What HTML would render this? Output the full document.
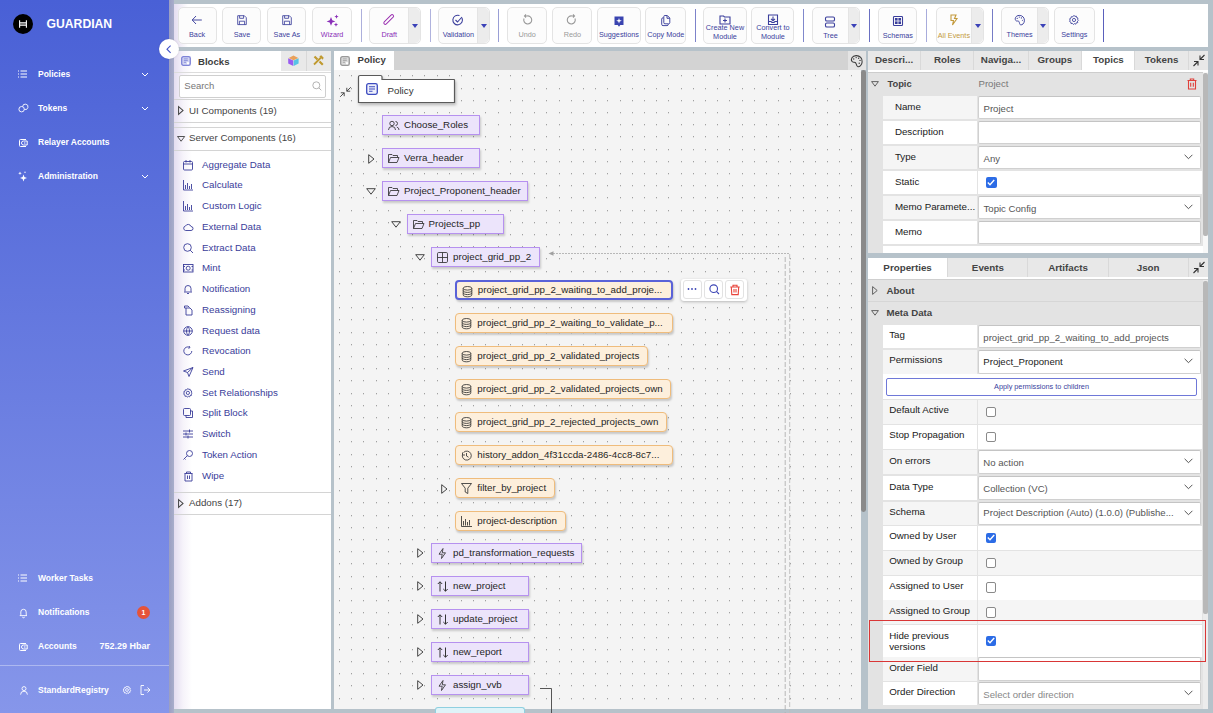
<!DOCTYPE html><html><head><meta charset="utf-8"><style>
*{box-sizing:border-box;margin:0;padding:0}
html,body{width:1213px;height:713px;overflow:hidden;background:#b6c2ca;font-family:"Liberation Sans",sans-serif;position:relative}
.a{position:absolute}
svg{overflow:visible}
#sb{left:0;top:0;width:169px;height:713px;background:linear-gradient(180deg,#4960d6 0%,#8696ea 100%)}
.si{position:absolute;left:0;width:169px;height:20px;color:#fff;font-weight:bold;font-size:8.5px;line-height:20px;white-space:nowrap}
.si .t{position:absolute;left:38px;top:0}
.si svg{position:absolute;left:18px;top:6px}
.si .ch{left:141px;top:8px}
#tb{left:174px;top:4px;width:1034px;height:43px;background:#fff}
.btn{position:absolute;top:7px;height:37px;border:1px solid #e4e4e4;border-radius:5px;background:#fcfcfc;text-align:center;font-size:7.25px;color:#3b3f9c;white-space:nowrap}
.btn .lb{position:absolute;left:0;right:0;top:21px;line-height:9px;transform:translateY(0.8px)}
.btn svg{position:absolute;top:6px}
.dd{position:absolute;top:0;right:0;width:11.5px;height:35px;background:#ececec;border-radius:0 5px 5px 0;border-left:1px solid #e4e4e4}
.dd:after{content:"";position:absolute;left:2.5px;top:15.5px;border-left:3.6px solid transparent;border-right:3.6px solid transparent;border-top:4.3px solid #3b42b8}
.dv{position:absolute;top:9px;width:1px;height:33px;background:#6d73c6}
.pn{background:#fff}
.bl{position:absolute;left:0;width:157px;height:20px;font-size:9.75px;line-height:20px;color:#3a3d9a;white-space:nowrap}
.bl .t{position:absolute;left:28px}
.bl svg{position:absolute;left:9px;top:5px}
.nd{position:absolute;height:20px;border:1.5px solid #b691ef;background:#ece4fb;font-size:9.75px;line-height:18px;color:#1f1f1f;white-space:nowrap;box-shadow:1px 2px 2px rgba(0,0,0,.18);overflow:hidden}
.nd .t{position:absolute;left:21px;top:-0.4px}
.nd svg{position:absolute;left:5px;top:4px}
.nd.o{border-color:#efbc7c;background:#fdefdc;border-radius:4px}
.tri{position:absolute;width:0;height:0}
.rw{position:absolute;height:24px;font-size:9.75px;color:#1a1a1a;white-space:nowrap}
.rw .lc{position:absolute;left:0;top:0;width:94px;height:100%;background:#fff}
.rw .vc{position:absolute;left:95.5px;top:0;right:0;height:100%;background:#fff}
.inp{position:absolute;left:0;top:0;right:0;bottom:0;border:1px solid #d6d6d6;border-radius:2px;background:#fff;font-size:9.5px;color:#555;padding-left:5px;line-height:22px}
.cb{position:absolute;left:9px;top:7px;width:10px;height:10px;border:1px solid #9a9a9a;border-radius:2px;background:#fff}
.cb.on{background:#2a6ae6;border-color:#2a6ae6}
</style></head><body>
<div id="sb" class="a">
<div class="a" style="left:13px;top:14px;width:20px;height:20px;border-radius:50%;background:#000"></div>
<svg class="a" style="left:18px;top:19px" width="10" height="10" viewBox="0 0 10 10"><path d="M1.6 1.2V8.8M8.4 1.2V8.8M1.6 3.9H8.4M1.6 6.1H8.4" stroke="#fff" stroke-width="1.1" fill="none"/></svg>
<div class="a" style="left:46.5px;top:16px;color:#fff;font-weight:bold;font-size:12.2px;line-height:16px">GUARDIAN</div>
<div class="si" style="top:64px"><svg width="9" height="8" viewBox="0 0 9 8"><path d="M0 1H1M0 4H1M0 7H1M2.5 1H9M2.5 4H9M2.5 7H9" stroke="#fff" stroke-width="1"/></svg><span class="t">Policies</span><svg class="ch" width="8" height="5" viewBox="0 0 8 5"><path d="M1 1L4 4L7 1" stroke="#fff" stroke-width="1" fill="none"/></svg></div>
<div class="si" style="top:98px"><svg width="10" height="10" viewBox="0 0 10 10" style="top:4.5px"><circle cx="3.6" cy="6.2" r="2.7" stroke="#fff" stroke-width="0.9" fill="none"/><path d="M4.6 3.6A2.7 2.7 0 1 1 6.4 6.4" stroke="#fff" stroke-width="0.9" fill="none"/></svg><span class="t">Tokens</span><svg class="ch" width="8" height="5" viewBox="0 0 8 5"><path d="M1 1L4 4L7 1" stroke="#fff" stroke-width="1" fill="none"/></svg></div>
<div class="si" style="top:132px"><svg width="10" height="9" viewBox="0 0 10 9" style="left:19px;top:6.5px"><path d="M7 0.5H1.5A1 1 0 0 0 0.5 1.5V6.5A1 1 0 0 0 1.5 7.5H7" stroke="#fff" stroke-width="1" fill="none"/><path d="M4.5 2A2 2 0 0 0 4.5 6H8.2V2Z" stroke="#fff" stroke-width="1" fill="none"/><circle cx="5.8" cy="4" r="0.7" fill="#fff"/></svg><span class="t">Relayer Accounts</span></div>
<div class="si" style="top:166px"><svg width="10" height="11" viewBox="0 0 10 11" style="top:4.5px"><path d="M5.5 3.5L6.4 6.1L9 7L6.4 7.9L5.5 10.5L4.6 7.9L2 7L4.6 6.1Z" fill="#fff"/><path d="M2 0.5L2.5 1.8L3.8 2.3L2.5 2.8L2 4.1L1.5 2.8L0.2 2.3L1.5 1.8Z" fill="#fff"/><circle cx="7" cy="1.2" r="0.7" fill="#fff"/></svg><span class="t">Administration</span><svg class="ch" width="8" height="5" viewBox="0 0 8 5"><path d="M1 1L4 4L7 1" stroke="#fff" stroke-width="1" fill="none"/></svg></div>
<div class="si" style="top:568px"><svg width="9" height="8" viewBox="0 0 9 8"><path d="M0 1H1M0 4H1M0 7H1M2.5 1H9M2.5 4H9M2.5 7H9" stroke="#fff" stroke-width="1"/></svg><span class="t">Worker Tasks</span></div>
<div class="si" style="top:602px"><svg width="9" height="10" viewBox="0 0 9 10" style="left:19px;top:6px"><path d="M1.8 6.8V4A2.7 2.7 0 0 1 7.2 4V6.8L8 7.6H1L1.8 6.8M3.5 8.8A1 1 0 0 0 5.5 8.8" stroke="#fff" stroke-width="0.9" fill="none"/></svg><span class="t">Notifications</span><span class="a" style="left:137px;top:4px;width:13px;height:13px;border-radius:50%;background:#e5533a;font-size:7px;line-height:13px;text-align:center">1</span></div>
<div class="si" style="top:636px"><svg width="10" height="9" viewBox="0 0 10 9" style="left:19px;top:6.5px"><path d="M7 0.5H1.5A1 1 0 0 0 0.5 1.5V6.5A1 1 0 0 0 1.5 7.5H7" stroke="#fff" stroke-width="1" fill="none"/><path d="M4.5 2A2 2 0 0 0 4.5 6H8.2V2Z" stroke="#fff" stroke-width="1" fill="none"/><circle cx="5.8" cy="4" r="0.7" fill="#fff"/></svg><span class="t">Accounts</span><span class="a" style="right:19px;top:0;font-size:9px">752.29 Hbar</span></div>
<div class="a" style="left:0;top:665px;width:169px;height:1px;background:rgba(255,255,255,.35)"></div>
<div class="si" style="top:680px"><svg width="9" height="10" viewBox="0 0 9 10" style="left:19.5px;top:6px"><circle cx="4" cy="2.6" r="2" stroke="#fff" stroke-width="0.9" fill="none"/><path d="M0.6 8.6A3.4 3.4 0 0 1 7.4 8.6" stroke="#fff" stroke-width="0.9" fill="none"/></svg><span class="t">StandardRegistry</span><svg class="a" style="left:121.5px;top:5px" width="10" height="10" viewBox="0 0 12 12"><circle cx="6" cy="6" r="1.7" stroke="#fff" stroke-width="1" fill="none"/><path d="M6 1.3L6.9 2.5L8.3 2.1L8.6 3.5L10 4L9.5 5.3L10.5 6.3L9.4 7.2L9.8 8.6L8.3 8.8L7.8 10.2L6.5 9.6L5.4 10.5L4.5 9.4L3 9.6L2.8 8.1L1.5 7.4L2.2 6.1L1.6 4.8L3 4.1L3.3 2.7L4.8 2.8Z" stroke="#fff" stroke-width="1" fill="none"/></svg><svg class="a" style="left:140px;top:5px" width="11" height="10" viewBox="0 0 11 10"><path d="M4 0.5H1V9.5H4M4 5H10M7.5 2.5L10 5L7.5 7.5" stroke="#fff" stroke-width="0.9" fill="none"/></svg></div>
</div>
<div class="a" style="left:169px;top:0;width:5px;height:713px;background:linear-gradient(90deg,#9a9ec2,#a9aecb)"></div>
<div id="tb" class="a"></div>
<div class="a" style="left:174px;top:4px;width:14px;height:43px;background:linear-gradient(90deg,#e4ddf0,#fff)"></div>
<div class="btn" style="left:177.5px;width:39.19999999999999px;color:#3b3f9c"><div class="a" style="left:0;top:0;width:37.19999999999999px;height:35px"><svg width="12" height="12" viewBox="0 0 12 12" style="left:calc(50% - 6.0px)"><path d="M1.2 6H10.8M5 2L1.2 6L5 10" stroke="#3b3f9c" stroke-width="0.95" fill="none"/></svg><div class="lb" style="top:21px;line-height:9px">Back</div></div></div>
<div class="btn" style="left:222.4px;width:39.099999999999994px;color:#3b3f9c"><div class="a" style="left:0;top:0;width:37.099999999999994px;height:35px"><svg width="12" height="12" viewBox="0 0 12 12" style="left:calc(50% - 6.0px)"><path d="M1.7 1.7H8.3L10.3 3.7V10.6H1.7Z M3.6 1.7V4.3H7.6V1.7 M3.4 10.6V7.2H8.6V10.6" stroke="#3b3f9c" stroke-width="0.85" fill="none"/></svg><div class="lb" style="top:21px;line-height:9px">Save</div></div></div>
<div class="btn" style="left:267.3px;width:39.19999999999999px;color:#3b3f9c"><div class="a" style="left:0;top:0;width:37.19999999999999px;height:35px"><svg width="12" height="12" viewBox="0 0 12 12" style="left:calc(50% - 6.0px)"><path d="M1.7 1.7H8.3L10.3 3.7V10.6H1.7Z M3.6 1.7V4.3H7.6V1.7 M3.4 10.6V7.2H8.6V10.6" stroke="#3b3f9c" stroke-width="0.85" fill="none"/></svg><div class="lb" style="top:21px;line-height:9px">Save As</div></div></div>
<div class="btn" style="left:312.3px;width:39.599999999999966px;color:#8a2fb8"><div class="a" style="left:0;top:0;width:37.599999999999966px;height:35px"><svg width="13" height="13" viewBox="0 0 13 13" style="left:calc(50% - 6.5px)"><path d="M5 3L6.3 6.2L9.4 7.4L6.3 8.6L5 11.8L3.7 8.6L0.6 7.4L3.7 6.2Z" fill="#8a2fb8"/><path d="M10.5 0.5L11.1 2L12.6 2.6L11.1 3.2L10.5 4.7L9.9 3.2L8.4 2.6L9.9 2Z" fill="#8a2fb8"/><path d="M10 8.5L10.6 10L12.1 10.6L10.6 11.2L10 12.7L9.4 11.2L7.9 10.6L9.4 10Z" fill="#8a2fb8"/></svg><div class="lb" style="top:21px;line-height:9px">Wizard</div></div></div>
<div class="dv" style="left:361px;background:#adb0dc"></div>
<div class="btn" style="left:369.4px;width:51.30000000000001px;color:#8a2fb8"><div class="a" style="left:0;top:0;width:37.80000000000001px;height:35px"><svg width="12" height="12" viewBox="0 0 12 12" style="left:calc(50% - 6.0px)"><rect x="4.2" y="-0.8" width="3" height="12.6" rx="1.5" transform="rotate(45 5.7 5.5)" stroke="#9a2fb0" stroke-width="0.95" fill="none"/></svg><div class="lb" style="top:21px;line-height:9px">Draft</div></div><div class="dd"></div></div>
<div class="dv" style="left:430px;background:#b0b3de"></div>
<div class="btn" style="left:438.3px;width:51.5px;color:#3b3f9c"><div class="a" style="left:0;top:0;width:38.0px;height:35px"><svg width="12" height="12" viewBox="0 0 12 12" style="left:calc(50% - 6.0px)"><path d="M10 4A4.8 4.8 0 1 1 7.5 1.6" stroke="#3b3f9c" stroke-width="1.1" fill="none"/><path d="M3.5 6L5.5 8L10 3" stroke="#3b3f9c" stroke-width="1.1" fill="none"/></svg><div class="lb" style="top:21px;line-height:9px">Validation</div></div><div class="dd"></div></div>
<div class="dv" style="left:498px;background:#9a9fd6"></div>
<div class="btn" style="left:507.2px;width:39.900000000000034px;color:#9a9a9a"><div class="a" style="left:0;top:0;width:37.900000000000034px;height:35px"><svg width="12" height="12" viewBox="0 0 12 12" style="left:calc(50% - 6.0px)"><path d="M3 4.5A4 4 0 1 0 6 2H3.5M5 0.5L3.5 2L5 3.5" stroke="#9a9a9a" stroke-width="1.1" fill="none"/></svg><div class="lb" style="top:21px;line-height:9px">Undo</div></div></div>
<div class="btn" style="left:552.4px;width:40.0px;color:#9a9a9a"><div class="a" style="left:0;top:0;width:38.0px;height:35px"><svg width="12" height="12" viewBox="0 0 12 12" style="left:calc(50% - 6.0px)"><path d="M9 4.5A4 4 0 1 1 6 2H8.5M7 0.5L8.5 2L7 3.5" stroke="#9a9a9a" stroke-width="1.1" fill="none"/></svg><div class="lb" style="top:21px;line-height:9px">Redo</div></div></div>
<div class="btn" style="left:597.2px;width:43.39999999999998px;color:#3b3f9c"><div class="a" style="left:0;top:0;width:41.39999999999998px;height:35px"><svg width="12" height="13" viewBox="0 0 12 13" style="left:calc(50% - 6.0px)"><path d="M1.5 2.5H10.5V11H7.3L6 12.8L4.7 11H1.5Z" fill="#3a44b0"/><path d="M6 4L6.7 6.1L8.8 6.8L6.7 7.5L6 9.6L5.3 7.5L3.2 6.8L5.3 6.1Z" fill="#fff"/></svg><div class="lb" style="top:21px;line-height:9px">Suggestions</div></div></div>
<div class="btn" style="left:645.2px;width:41.19999999999993px;color:#3b3f9c"><div class="a" style="left:0;top:0;width:39.19999999999993px;height:35px"><svg width="12" height="12" viewBox="0 0 12 12" style="left:calc(50% - 6.0px)"><path d="M3.5 3.8H3A1.3 1.3 0 0 0 1.7 5.1V10.3A1.3 1.3 0 0 0 3 11.6H7A1.3 1.3 0 0 0 8.3 10.3V10" stroke="#3b3f9c" stroke-width="0.95" fill="none"/><path d="M4.8 1.5H7.3L9.8 4V8.6A1.2 1.2 0 0 1 8.6 9.8H5A1.2 1.2 0 0 1 3.8 8.6V2.5A1 1 0 0 1 4.8 1.5Z M7 1.7V4.3H9.6" stroke="#3b3f9c" stroke-width="0.95" fill="none"/></svg><div class="lb" style="top:21px;line-height:9px">Copy Mode</div></div></div>
<div class="dv" style="left:695px;background:#7d83ca"></div>
<div class="btn" style="left:703.3px;width:43.40000000000009px;color:#3b3f9c"><div class="a" style="left:0;top:0;width:41.40000000000009px;height:35px"><svg width="12" height="10" viewBox="0 0 12 10" style="left:calc(50% - 6.0px)"><path d="M1 2H4.5L5.5 3H11V10H1Z M6 4.5V8.5M4 6.5H8" stroke="#3b3f9c" stroke-width="1.1" fill="none"/></svg><div class="lb" style="top:15px;line-height:8.6px">Create New<br>Module</div></div></div>
<div class="btn" style="left:751.4px;width:43.10000000000002px;color:#3b3f9c"><div class="a" style="left:0;top:0;width:41.10000000000002px;height:35px"><svg width="12" height="11" viewBox="0 0 12 11" style="left:calc(50% - 6.0px)"><path d="M1.5 1H10.5V10.5H1.5Z M6 2.5V6.5M4 4.8L6 6.7L8 4.8M1.5 7.5H4L5 8.5H7L8 7.5H10.5" stroke="#3b3f9c" stroke-width="1.1" fill="none"/></svg><div class="lb" style="top:15px;line-height:8.6px">Convert to<br>Module</div></div></div>
<div class="dv" style="left:803px;background:#8088cc"></div>
<div class="btn" style="left:812.1px;width:48.299999999999955px;color:#3b3f9c"><div class="a" style="left:0;top:0;width:34.799999999999955px;height:35px"><svg width="12" height="14" viewBox="0 0 12 14" style="left:calc(50% - 6.0px)"><rect x="1.5" y="3" width="9" height="4" rx="1.3" stroke="#3b3f9c" stroke-width="1.1" fill="none"/><rect x="1.5" y="9" width="9" height="4" rx="1.3" stroke="#3b3f9c" stroke-width="1.1" fill="none"/></svg><div class="lb" style="top:22px;line-height:9px">Tree</div></div><div class="dd"></div></div>
<div class="dv" style="left:869px;background:#6a70c2"></div>
<div class="btn" style="left:878.2px;width:39.299999999999955px;color:#3b3f9c"><div class="a" style="left:0;top:0;width:37.299999999999955px;height:35px"><svg width="12" height="13" viewBox="0 0 12 13" style="left:calc(50% - 6.0px)"><rect x="1.5" y="2.5" width="9" height="9" rx="0.8" stroke="#3b3f9c" stroke-width="1.1" fill="none"/><rect x="3" y="4" width="2.6" height="2.6" fill="#3b3f9c"/><rect x="6.4" y="4" width="2.6" height="2.6" fill="#3b3f9c"/><rect x="3" y="7.4" width="2.6" height="2.6" fill="#3b3f9c"/><rect x="6.4" y="7.4" width="2.6" height="2.6" fill="#3b3f9c"/></svg><div class="lb" style="top:22px;line-height:9px">Schemas</div></div></div>
<div class="dv" style="left:926px;background:#a8acdc"></div>
<div class="btn" style="left:935.5px;width:48.299999999999955px;color:#c39a3c"><div class="a" style="left:0;top:0;width:34.799999999999955px;height:35px"><svg width="12" height="12" viewBox="0 0 12 12" style="left:calc(50% - 6.0px)"><path d="M3 1H8L6.5 4.5H9L4.5 11L5.5 6.5H3Z" stroke="#c39a3c" stroke-width="1.1" fill="none"/></svg><div class="lb" style="top:22px;line-height:9px">All Events</div></div><div class="dd"></div></div>
<div class="dv" style="left:992px;background:#767cc6"></div>
<div class="btn" style="left:1001.4px;width:48.000000000000114px;color:#3b3f9c"><div class="a" style="left:0;top:0;width:34.500000000000114px;height:35px"><svg width="12" height="12" viewBox="0 0 12 12" style="left:calc(50% - 6.0px)"><path d="M1.6 6.3C0.6 4.6 1.6 1.6 5.2 1.4C8.6 1.3 10.6 3.8 10.4 6.8C10.2 9.6 8.2 11 6.8 10.9C5.8 10.8 5.6 9.8 5.4 8.7C5.1 7.4 4.6 6.9 3.5 7C2.6 7.1 2 7 1.6 6.3Z" stroke="#3b3f9c" stroke-width="0.95" fill="none"/><circle cx="3.2" cy="4.3" r=".65" fill="#3b3f9c"/><circle cx="5.3" cy="3.1" r=".65" fill="#3b3f9c"/><circle cx="7.4" cy="3.9" r=".65" fill="#3b3f9c"/><circle cx="8.4" cy="6.3" r=".55" fill="#3b3f9c"/></svg><div class="lb" style="top:21px;line-height:9px">Themes</div></div><div class="dd"></div></div>
<div class="btn" style="left:1054.2px;width:40.399999999999864px;color:#3b3f9c"><div class="a" style="left:0;top:0;width:38.399999999999864px;height:35px"><svg width="12" height="12" viewBox="0 0 12 12" style="left:calc(50% - 6.0px)"><circle cx="6" cy="6" r="1.6" stroke="#3b3f9c" stroke-width="0.85" fill="none"/><path d="M6 1.3L6.9 2.5L8.3 2.1L8.6 3.5L10 4L9.5 5.3L10.5 6.3L9.4 7.2L9.8 8.6L8.3 8.8L7.8 10.2L6.5 9.6L5.4 10.5L4.5 9.4L3 9.6L2.8 8.1L1.5 7.4L2.2 6.1L1.6 4.8L3 4.1L3.3 2.7L4.8 2.8Z" stroke="#3b3f9c" stroke-width="0.85" fill="none"/></svg><div class="lb" style="top:21px;line-height:9px">Settings</div></div></div>
<div class="dv" style="left:1103px;background:#5a60bc"></div>
<div class="a pn" style="left:174px;top:51px;width:157px;height:658px">
<div class="a" style="left:0;top:0;width:18px;height:658px;background:linear-gradient(90deg,#e4ddf0,#f6f3fa 50%,#fff)"></div>
<svg class="a" style="left:7px;top:5px" width="10" height="10" viewBox="0 0 10 10"><rect x="0.7" y="0.7" width="8.6" height="8.6" rx="1.6" stroke="#7f84d8" stroke-width="1.3" fill="#d2d4f2"/><path d="M2.8 2.9H6.8M2.8 4.6H6.8M2.8 6.3H5" stroke="#8d92dc" stroke-width="1"/><rect x="6" y="6.2" width="2" height="2" fill="#fff"/></svg>
<div class="a" style="left:24px;top:4.8px;font-weight:bold;font-size:9.6px;color:#3d3d3d;line-height:12px">Blocks</div>
<div class="a" style="left:107px;top:0;width:50px;height:19.5px;background:#e9e9e9"></div>
<div class="a" style="left:132px;top:0;width:1px;height:19.5px;background:#d8d8d8"></div>
<svg class="a" style="left:113.8px;top:4px" width="11" height="11" viewBox="0 0 11 11"><path d="M0.2 3.2L5.3 5.6V11L0.2 8.6Z" fill="#9a5cf0"/><path d="M5.7 5.6L10.6 3.2V8.6L5.7 11Z" fill="#56c3e6"/><path d="M5.5 0.6L10.3 2.9L5.5 5.2L0.7 2.9Z" fill="#e8a05a"/></svg>
<svg class="a" style="left:138.5px;top:4px" width="11" height="11" viewBox="0 0 11 11"><path d="M1.5 1.5L4.5 4.5M6.5 6.5L9.8 9.8" stroke="#c09a30" stroke-width="2.2"/><path d="M1 9.5L8 2.5" stroke="#c09a30" stroke-width="1.8"/><path d="M6.3 1.3L8.3 0.3L10.7 2.7L9.7 4.7Z" fill="#c09a30"/></svg>
<div class="a" style="left:0;top:20.5px;width:157px;height:1px;background:#dcdcdc"></div>
<div class="a" style="left:5.3px;top:24.2px;width:146.4px;height:22.6px;border:1px solid #cfcfcf;border-radius:2px;background:#fff;font-size:9.5px;color:#777;line-height:20px;padding-left:4px">Search</div>
<svg class="a" style="left:138px;top:30px" width="10" height="10" viewBox="0 0 10 10"><circle cx="4.3" cy="4.3" r="3.5" stroke="#aaa" stroke-width="0.9" fill="none"/><path d="M6.8 6.8L9.3 9.3" stroke="#aaa" stroke-width="0.9"/></svg>
<div class="a" style="left:0;top:48px;width:157px;height:1px;background:#d4d4d4"></div>
<svg class="a" style="left:4px;top:55.2px" width="5.6" height="8.959999999999999" viewBox="0 0 5 8"><path d="M0.5 0.5L4.5 4L0.5 7.5Z" stroke="#444" stroke-width="0.9" fill="none"/></svg>
<div class="a" style="left:15px;top:53.5px;font-size:9.75px;color:#444;line-height:12px">UI Components (19)</div>
<div class="a" style="left:0;top:71px;width:157px;height:1px;background:#d4d4d4"></div>
<div class="a" style="left:0;top:76px;width:157px;height:1px;background:#d4d4d4"></div>
<svg class="a" style="left:3.2px;top:85.3px" width="8.2" height="5.739999999999999" viewBox="0 0 8 5.6"><path d="M0.5 0.5H7.5L4 5.1Z" stroke="#444" stroke-width="0.9" fill="none"/></svg>
<div class="a" style="left:15px;top:81px;font-size:9.75px;color:#444;line-height:12px">Server Components (16)</div>
<div class="a" style="left:0;top:99px;width:157px;height:1px;background:#d4d4d4"></div>
<div class="bl" style="top:103.70px"><svg width="11" height="11" viewBox="0 0 11 11"><rect x="0.5" y="1.5" width="9" height="8.5" rx="1" stroke="#3a3d9a" stroke-width="0.9" fill="none"/><path d="M0.5 4H9.5M3 0V2.5M7 0V2.5" stroke="#3a3d9a" stroke-width="0.9" fill="none"/></svg><span class="t">Aggregate Data</span></div>
<div class="bl" style="top:124.43px"><svg width="11" height="11" viewBox="0 0 11 11"><path d="M0.5 0V10H10M2.5 9V5M4.5 9V3M6.5 9V6M8.5 9V4" stroke="#3a3d9a" stroke-width="0.9" fill="none"/></svg><span class="t">Calculate</span></div>
<div class="bl" style="top:145.16px"><svg width="11" height="11" viewBox="0 0 11 11"><path d="M0.5 0V10H10M2.5 9V5M4.5 9V3M6.5 9V6M8.5 9V4" stroke="#3a3d9a" stroke-width="0.9" fill="none"/></svg><span class="t">Custom Logic</span></div>
<div class="bl" style="top:165.89px"><svg width="11" height="11" viewBox="0 0 11 11"><path d="M2.5 8.5H8A2 2 0 0 0 8 4.5A3 3 0 0 0 2.5 4A2.3 2.3 0 0 0 2.5 8.5Z" stroke="#3a3d9a" stroke-width="0.9" fill="none"/></svg><span class="t">External Data</span></div>
<div class="bl" style="top:186.62px"><svg width="11" height="11" viewBox="0 0 11 11"><circle cx="4.5" cy="4.5" r="3.8" stroke="#3a3d9a" stroke-width="0.9" fill="none"/><path d="M7.2 7.2L10 10" stroke="#3a3d9a" stroke-width="0.9" fill="none"/></svg><span class="t">Extract Data</span></div>
<div class="bl" style="top:207.35px"><svg width="11" height="11" viewBox="0 0 11 11"><rect x="0.5" y="1.5" width="9.5" height="7.5" stroke="#3a3d9a" stroke-width="0.9" fill="none"/><circle cx="5.2" cy="5.2" r="2" stroke="#3a3d9a" stroke-width="0.9" fill="none"/><path d="M0.5 3.5H2M8.5 3.5H10M0.5 7H2M8.5 7H10" stroke="#3a3d9a" stroke-width="0.9" fill="none"/></svg><span class="t">Mint</span></div>
<div class="bl" style="top:228.08px"><svg width="11" height="11" viewBox="0 0 11 11"><path d="M2 7.5V4.5A3 3 0 0 1 8 4.5V7.5M1 8H9M4 9.5H6" stroke="#3a3d9a" stroke-width="0.9" fill="none"/></svg><span class="t">Notification</span></div>
<div class="bl" style="top:248.81px"><svg width="11" height="11" viewBox="0 0 11 11"><path d="M3 3V10H9V5L7 3Z M3 3H1.5V1H5L6.5 2.5" stroke="#3a3d9a" stroke-width="0.9" fill="none"/></svg><span class="t">Reassigning</span></div>
<div class="bl" style="top:269.54px"><svg width="11" height="11" viewBox="0 0 11 11"><circle cx="5" cy="5" r="4.3" stroke="#3a3d9a" stroke-width="0.9" fill="none"/><path d="M0.7 5H9.3M5 0.7C3 3 3 7 5 9.3M5 0.7C7 3 7 7 5 9.3" stroke="#3a3d9a" stroke-width="0.9" fill="none"/></svg><span class="t">Request data</span></div>
<div class="bl" style="top:290.27px"><svg width="11" height="11" viewBox="0 0 11 11"><path d="M8.8 5A4 4 0 1 1 6.5 1.3M6 0L7 1.5L5.5 2.5" stroke="#3a3d9a" stroke-width="0.9" fill="none"/></svg><span class="t">Revocation</span></div>
<div class="bl" style="top:311.00px"><svg width="11" height="11" viewBox="0 0 11 11"><path d="M10 0.5L0.5 4L4.5 5.5L6 9.5Z M4.5 5.5L10 0.5" stroke="#3a3d9a" stroke-width="0.9" fill="none"/></svg><span class="t">Send</span></div>
<div class="bl" style="top:331.73px"><svg width="11" height="11" viewBox="0 0 11 11"><g transform="translate(-0.8 -0.8) scale(0.95)"><circle cx="6" cy="6" r="1.7" stroke="#3a3d9a" stroke-width="0.9" fill="none"/><path d="M6 1.3L6.9 2.5L8.3 2.1L8.6 3.5L10 4L9.5 5.3L10.5 6.3L9.4 7.2L9.8 8.6L8.3 8.8L7.8 10.2L6.5 9.6L5.4 10.5L4.5 9.4L3 9.6L2.8 8.1L1.5 7.4L2.2 6.1L1.6 4.8L3 4.1L3.3 2.7L4.8 2.8Z" stroke="#3a3d9a" stroke-width="0.9" fill="none"/></g></svg><span class="t">Set Relationships</span></div>
<div class="bl" style="top:352.46px"><svg width="11" height="11" viewBox="0 0 11 11"><rect x="0.5" y="0.5" width="7" height="7" rx="1" stroke="#3a3d9a" stroke-width="0.9" fill="none"/><path d="M7.5 3H9.5V9.5H3V7.5" stroke="#3a3d9a" stroke-width="0.9" fill="none"/></svg><span class="t">Split Block</span></div>
<div class="bl" style="top:373.19px"><svg width="11" height="11" viewBox="0 0 11 11"><path d="M0 2H10M0 5H10M0 8H10M6.5 0.5V3.5M3 3.5V6.5M5 6.5V9.5" stroke="#3a3d9a" stroke-width="0.9" fill="none"/></svg><span class="t">Switch</span></div>
<div class="bl" style="top:393.92px"><svg width="11" height="11" viewBox="0 0 11 11"><circle cx="6.5" cy="3.5" r="3" stroke="#3a3d9a" stroke-width="0.9" fill="none"/><path d="M4.3 5.7L0.5 9.5M1.5 8.5L2.5 9.5" stroke="#3a3d9a" stroke-width="0.9" fill="none"/></svg><span class="t">Token Action</span></div>
<div class="bl" style="top:414.65px"><svg width="11" height="11" viewBox="0 0 11 11"><path d="M1.5 2.5H9.5M3.5 2.5V1H7.5V2.5M2 2.5V10H9V2.5M4.5 4.5V8M6.5 4.5V8" stroke="#3a3d9a" stroke-width="0.9" fill="none"/></svg><span class="t">Wipe</span></div>
<div class="a" style="left:0;top:441px;width:157px;height:1px;background:#d4d4d4"></div>
<svg class="a" style="left:4px;top:447.8px" width="5.6" height="8.959999999999999" viewBox="0 0 5 8"><path d="M0.5 0.5L4.5 4L0.5 7.5Z" stroke="#444" stroke-width="0.9" fill="none"/></svg>
<div class="a" style="left:15px;top:446px;font-size:9.75px;color:#444;line-height:12px">Addons (17)</div>
<div class="a" style="left:0;top:463px;width:157px;height:1px;background:#d4d4d4"></div>
</div>
<div class="a" style="left:333.5px;top:51px;width:527.5px;height:658px;background-color:#f4f4f4"></div>
<svg class="a" style="left:0;top:0" width="1213" height="713" shape-rendering="crispEdges"><path d="M339 75h1v1h-1zM339 88h1v1h-1zM339 100h1v1h-1zM339 112h1v1h-1zM339 124h1v1h-1zM339 136h1v1h-1zM339 149h1v1h-1zM339 161h1v1h-1zM339 173h1v1h-1zM339 185h1v1h-1zM339 197h1v1h-1zM339 210h1v1h-1zM339 222h1v1h-1zM339 234h1v1h-1zM339 246h1v1h-1zM339 258h1v1h-1zM339 271h1v1h-1zM339 283h1v1h-1zM339 295h1v1h-1zM339 307h1v1h-1zM339 319h1v1h-1zM339 332h1v1h-1zM339 344h1v1h-1zM339 356h1v1h-1zM339 368h1v1h-1zM339 380h1v1h-1zM339 393h1v1h-1zM339 405h1v1h-1zM339 417h1v1h-1zM339 429h1v1h-1zM339 441h1v1h-1zM339 454h1v1h-1zM339 466h1v1h-1zM339 478h1v1h-1zM339 490h1v1h-1zM339 502h1v1h-1zM339 515h1v1h-1zM339 527h1v1h-1zM339 539h1v1h-1zM339 551h1v1h-1zM339 563h1v1h-1zM339 576h1v1h-1zM339 588h1v1h-1zM339 600h1v1h-1zM339 612h1v1h-1zM339 624h1v1h-1zM339 637h1v1h-1zM339 649h1v1h-1zM339 661h1v1h-1zM339 673h1v1h-1zM339 685h1v1h-1zM339 698h1v1h-1zM351 75h1v1h-1zM351 88h1v1h-1zM351 100h1v1h-1zM351 112h1v1h-1zM351 124h1v1h-1zM351 136h1v1h-1zM351 149h1v1h-1zM351 161h1v1h-1zM351 173h1v1h-1zM351 185h1v1h-1zM351 197h1v1h-1zM351 210h1v1h-1zM351 222h1v1h-1zM351 234h1v1h-1zM351 246h1v1h-1zM351 258h1v1h-1zM351 271h1v1h-1zM351 283h1v1h-1zM351 295h1v1h-1zM351 307h1v1h-1zM351 319h1v1h-1zM351 332h1v1h-1zM351 344h1v1h-1zM351 356h1v1h-1zM351 368h1v1h-1zM351 380h1v1h-1zM351 393h1v1h-1zM351 405h1v1h-1zM351 417h1v1h-1zM351 429h1v1h-1zM351 441h1v1h-1zM351 454h1v1h-1zM351 466h1v1h-1zM351 478h1v1h-1zM351 490h1v1h-1zM351 502h1v1h-1zM351 515h1v1h-1zM351 527h1v1h-1zM351 539h1v1h-1zM351 551h1v1h-1zM351 563h1v1h-1zM351 576h1v1h-1zM351 588h1v1h-1zM351 600h1v1h-1zM351 612h1v1h-1zM351 624h1v1h-1zM351 637h1v1h-1zM351 649h1v1h-1zM351 661h1v1h-1zM351 673h1v1h-1zM351 685h1v1h-1zM351 698h1v1h-1zM363 75h1v1h-1zM363 88h1v1h-1zM363 100h1v1h-1zM363 112h1v1h-1zM363 124h1v1h-1zM363 136h1v1h-1zM363 149h1v1h-1zM363 161h1v1h-1zM363 173h1v1h-1zM363 185h1v1h-1zM363 197h1v1h-1zM363 210h1v1h-1zM363 222h1v1h-1zM363 234h1v1h-1zM363 246h1v1h-1zM363 258h1v1h-1zM363 271h1v1h-1zM363 283h1v1h-1zM363 295h1v1h-1zM363 307h1v1h-1zM363 319h1v1h-1zM363 332h1v1h-1zM363 344h1v1h-1zM363 356h1v1h-1zM363 368h1v1h-1zM363 380h1v1h-1zM363 393h1v1h-1zM363 405h1v1h-1zM363 417h1v1h-1zM363 429h1v1h-1zM363 441h1v1h-1zM363 454h1v1h-1zM363 466h1v1h-1zM363 478h1v1h-1zM363 490h1v1h-1zM363 502h1v1h-1zM363 515h1v1h-1zM363 527h1v1h-1zM363 539h1v1h-1zM363 551h1v1h-1zM363 563h1v1h-1zM363 576h1v1h-1zM363 588h1v1h-1zM363 600h1v1h-1zM363 612h1v1h-1zM363 624h1v1h-1zM363 637h1v1h-1zM363 649h1v1h-1zM363 661h1v1h-1zM363 673h1v1h-1zM363 685h1v1h-1zM363 698h1v1h-1zM376 75h1v1h-1zM376 88h1v1h-1zM376 100h1v1h-1zM376 112h1v1h-1zM376 124h1v1h-1zM376 136h1v1h-1zM376 149h1v1h-1zM376 161h1v1h-1zM376 173h1v1h-1zM376 185h1v1h-1zM376 197h1v1h-1zM376 210h1v1h-1zM376 222h1v1h-1zM376 234h1v1h-1zM376 246h1v1h-1zM376 258h1v1h-1zM376 271h1v1h-1zM376 283h1v1h-1zM376 295h1v1h-1zM376 307h1v1h-1zM376 319h1v1h-1zM376 332h1v1h-1zM376 344h1v1h-1zM376 356h1v1h-1zM376 368h1v1h-1zM376 380h1v1h-1zM376 393h1v1h-1zM376 405h1v1h-1zM376 417h1v1h-1zM376 429h1v1h-1zM376 441h1v1h-1zM376 454h1v1h-1zM376 466h1v1h-1zM376 478h1v1h-1zM376 490h1v1h-1zM376 502h1v1h-1zM376 515h1v1h-1zM376 527h1v1h-1zM376 539h1v1h-1zM376 551h1v1h-1zM376 563h1v1h-1zM376 576h1v1h-1zM376 588h1v1h-1zM376 600h1v1h-1zM376 612h1v1h-1zM376 624h1v1h-1zM376 637h1v1h-1zM376 649h1v1h-1zM376 661h1v1h-1zM376 673h1v1h-1zM376 685h1v1h-1zM376 698h1v1h-1zM388 75h1v1h-1zM388 88h1v1h-1zM388 100h1v1h-1zM388 112h1v1h-1zM388 124h1v1h-1zM388 136h1v1h-1zM388 149h1v1h-1zM388 161h1v1h-1zM388 173h1v1h-1zM388 185h1v1h-1zM388 197h1v1h-1zM388 210h1v1h-1zM388 222h1v1h-1zM388 234h1v1h-1zM388 246h1v1h-1zM388 258h1v1h-1zM388 271h1v1h-1zM388 283h1v1h-1zM388 295h1v1h-1zM388 307h1v1h-1zM388 319h1v1h-1zM388 332h1v1h-1zM388 344h1v1h-1zM388 356h1v1h-1zM388 368h1v1h-1zM388 380h1v1h-1zM388 393h1v1h-1zM388 405h1v1h-1zM388 417h1v1h-1zM388 429h1v1h-1zM388 441h1v1h-1zM388 454h1v1h-1zM388 466h1v1h-1zM388 478h1v1h-1zM388 490h1v1h-1zM388 502h1v1h-1zM388 515h1v1h-1zM388 527h1v1h-1zM388 539h1v1h-1zM388 551h1v1h-1zM388 563h1v1h-1zM388 576h1v1h-1zM388 588h1v1h-1zM388 600h1v1h-1zM388 612h1v1h-1zM388 624h1v1h-1zM388 637h1v1h-1zM388 649h1v1h-1zM388 661h1v1h-1zM388 673h1v1h-1zM388 685h1v1h-1zM388 698h1v1h-1zM400 75h1v1h-1zM400 88h1v1h-1zM400 100h1v1h-1zM400 112h1v1h-1zM400 124h1v1h-1zM400 136h1v1h-1zM400 149h1v1h-1zM400 161h1v1h-1zM400 173h1v1h-1zM400 185h1v1h-1zM400 197h1v1h-1zM400 210h1v1h-1zM400 222h1v1h-1zM400 234h1v1h-1zM400 246h1v1h-1zM400 258h1v1h-1zM400 271h1v1h-1zM400 283h1v1h-1zM400 295h1v1h-1zM400 307h1v1h-1zM400 319h1v1h-1zM400 332h1v1h-1zM400 344h1v1h-1zM400 356h1v1h-1zM400 368h1v1h-1zM400 380h1v1h-1zM400 393h1v1h-1zM400 405h1v1h-1zM400 417h1v1h-1zM400 429h1v1h-1zM400 441h1v1h-1zM400 454h1v1h-1zM400 466h1v1h-1zM400 478h1v1h-1zM400 490h1v1h-1zM400 502h1v1h-1zM400 515h1v1h-1zM400 527h1v1h-1zM400 539h1v1h-1zM400 551h1v1h-1zM400 563h1v1h-1zM400 576h1v1h-1zM400 588h1v1h-1zM400 600h1v1h-1zM400 612h1v1h-1zM400 624h1v1h-1zM400 637h1v1h-1zM400 649h1v1h-1zM400 661h1v1h-1zM400 673h1v1h-1zM400 685h1v1h-1zM400 698h1v1h-1zM412 75h1v1h-1zM412 88h1v1h-1zM412 100h1v1h-1zM412 112h1v1h-1zM412 124h1v1h-1zM412 136h1v1h-1zM412 149h1v1h-1zM412 161h1v1h-1zM412 173h1v1h-1zM412 185h1v1h-1zM412 197h1v1h-1zM412 210h1v1h-1zM412 222h1v1h-1zM412 234h1v1h-1zM412 246h1v1h-1zM412 258h1v1h-1zM412 271h1v1h-1zM412 283h1v1h-1zM412 295h1v1h-1zM412 307h1v1h-1zM412 319h1v1h-1zM412 332h1v1h-1zM412 344h1v1h-1zM412 356h1v1h-1zM412 368h1v1h-1zM412 380h1v1h-1zM412 393h1v1h-1zM412 405h1v1h-1zM412 417h1v1h-1zM412 429h1v1h-1zM412 441h1v1h-1zM412 454h1v1h-1zM412 466h1v1h-1zM412 478h1v1h-1zM412 490h1v1h-1zM412 502h1v1h-1zM412 515h1v1h-1zM412 527h1v1h-1zM412 539h1v1h-1zM412 551h1v1h-1zM412 563h1v1h-1zM412 576h1v1h-1zM412 588h1v1h-1zM412 600h1v1h-1zM412 612h1v1h-1zM412 624h1v1h-1zM412 637h1v1h-1zM412 649h1v1h-1zM412 661h1v1h-1zM412 673h1v1h-1zM412 685h1v1h-1zM412 698h1v1h-1zM424 75h1v1h-1zM424 88h1v1h-1zM424 100h1v1h-1zM424 112h1v1h-1zM424 124h1v1h-1zM424 136h1v1h-1zM424 149h1v1h-1zM424 161h1v1h-1zM424 173h1v1h-1zM424 185h1v1h-1zM424 197h1v1h-1zM424 210h1v1h-1zM424 222h1v1h-1zM424 234h1v1h-1zM424 246h1v1h-1zM424 258h1v1h-1zM424 271h1v1h-1zM424 283h1v1h-1zM424 295h1v1h-1zM424 307h1v1h-1zM424 319h1v1h-1zM424 332h1v1h-1zM424 344h1v1h-1zM424 356h1v1h-1zM424 368h1v1h-1zM424 380h1v1h-1zM424 393h1v1h-1zM424 405h1v1h-1zM424 417h1v1h-1zM424 429h1v1h-1zM424 441h1v1h-1zM424 454h1v1h-1zM424 466h1v1h-1zM424 478h1v1h-1zM424 490h1v1h-1zM424 502h1v1h-1zM424 515h1v1h-1zM424 527h1v1h-1zM424 539h1v1h-1zM424 551h1v1h-1zM424 563h1v1h-1zM424 576h1v1h-1zM424 588h1v1h-1zM424 600h1v1h-1zM424 612h1v1h-1zM424 624h1v1h-1zM424 637h1v1h-1zM424 649h1v1h-1zM424 661h1v1h-1zM424 673h1v1h-1zM424 685h1v1h-1zM424 698h1v1h-1zM437 75h1v1h-1zM437 88h1v1h-1zM437 100h1v1h-1zM437 112h1v1h-1zM437 124h1v1h-1zM437 136h1v1h-1zM437 149h1v1h-1zM437 161h1v1h-1zM437 173h1v1h-1zM437 185h1v1h-1zM437 197h1v1h-1zM437 210h1v1h-1zM437 222h1v1h-1zM437 234h1v1h-1zM437 246h1v1h-1zM437 258h1v1h-1zM437 271h1v1h-1zM437 283h1v1h-1zM437 295h1v1h-1zM437 307h1v1h-1zM437 319h1v1h-1zM437 332h1v1h-1zM437 344h1v1h-1zM437 356h1v1h-1zM437 368h1v1h-1zM437 380h1v1h-1zM437 393h1v1h-1zM437 405h1v1h-1zM437 417h1v1h-1zM437 429h1v1h-1zM437 441h1v1h-1zM437 454h1v1h-1zM437 466h1v1h-1zM437 478h1v1h-1zM437 490h1v1h-1zM437 502h1v1h-1zM437 515h1v1h-1zM437 527h1v1h-1zM437 539h1v1h-1zM437 551h1v1h-1zM437 563h1v1h-1zM437 576h1v1h-1zM437 588h1v1h-1zM437 600h1v1h-1zM437 612h1v1h-1zM437 624h1v1h-1zM437 637h1v1h-1zM437 649h1v1h-1zM437 661h1v1h-1zM437 673h1v1h-1zM437 685h1v1h-1zM437 698h1v1h-1zM449 75h1v1h-1zM449 88h1v1h-1zM449 100h1v1h-1zM449 112h1v1h-1zM449 124h1v1h-1zM449 136h1v1h-1zM449 149h1v1h-1zM449 161h1v1h-1zM449 173h1v1h-1zM449 185h1v1h-1zM449 197h1v1h-1zM449 210h1v1h-1zM449 222h1v1h-1zM449 234h1v1h-1zM449 246h1v1h-1zM449 258h1v1h-1zM449 271h1v1h-1zM449 283h1v1h-1zM449 295h1v1h-1zM449 307h1v1h-1zM449 319h1v1h-1zM449 332h1v1h-1zM449 344h1v1h-1zM449 356h1v1h-1zM449 368h1v1h-1zM449 380h1v1h-1zM449 393h1v1h-1zM449 405h1v1h-1zM449 417h1v1h-1zM449 429h1v1h-1zM449 441h1v1h-1zM449 454h1v1h-1zM449 466h1v1h-1zM449 478h1v1h-1zM449 490h1v1h-1zM449 502h1v1h-1zM449 515h1v1h-1zM449 527h1v1h-1zM449 539h1v1h-1zM449 551h1v1h-1zM449 563h1v1h-1zM449 576h1v1h-1zM449 588h1v1h-1zM449 600h1v1h-1zM449 612h1v1h-1zM449 624h1v1h-1zM449 637h1v1h-1zM449 649h1v1h-1zM449 661h1v1h-1zM449 673h1v1h-1zM449 685h1v1h-1zM449 698h1v1h-1zM461 75h1v1h-1zM461 88h1v1h-1zM461 100h1v1h-1zM461 112h1v1h-1zM461 124h1v1h-1zM461 136h1v1h-1zM461 149h1v1h-1zM461 161h1v1h-1zM461 173h1v1h-1zM461 185h1v1h-1zM461 197h1v1h-1zM461 210h1v1h-1zM461 222h1v1h-1zM461 234h1v1h-1zM461 246h1v1h-1zM461 258h1v1h-1zM461 271h1v1h-1zM461 283h1v1h-1zM461 295h1v1h-1zM461 307h1v1h-1zM461 319h1v1h-1zM461 332h1v1h-1zM461 344h1v1h-1zM461 356h1v1h-1zM461 368h1v1h-1zM461 380h1v1h-1zM461 393h1v1h-1zM461 405h1v1h-1zM461 417h1v1h-1zM461 429h1v1h-1zM461 441h1v1h-1zM461 454h1v1h-1zM461 466h1v1h-1zM461 478h1v1h-1zM461 490h1v1h-1zM461 502h1v1h-1zM461 515h1v1h-1zM461 527h1v1h-1zM461 539h1v1h-1zM461 551h1v1h-1zM461 563h1v1h-1zM461 576h1v1h-1zM461 588h1v1h-1zM461 600h1v1h-1zM461 612h1v1h-1zM461 624h1v1h-1zM461 637h1v1h-1zM461 649h1v1h-1zM461 661h1v1h-1zM461 673h1v1h-1zM461 685h1v1h-1zM461 698h1v1h-1zM473 75h1v1h-1zM473 88h1v1h-1zM473 100h1v1h-1zM473 112h1v1h-1zM473 124h1v1h-1zM473 136h1v1h-1zM473 149h1v1h-1zM473 161h1v1h-1zM473 173h1v1h-1zM473 185h1v1h-1zM473 197h1v1h-1zM473 210h1v1h-1zM473 222h1v1h-1zM473 234h1v1h-1zM473 246h1v1h-1zM473 258h1v1h-1zM473 271h1v1h-1zM473 283h1v1h-1zM473 295h1v1h-1zM473 307h1v1h-1zM473 319h1v1h-1zM473 332h1v1h-1zM473 344h1v1h-1zM473 356h1v1h-1zM473 368h1v1h-1zM473 380h1v1h-1zM473 393h1v1h-1zM473 405h1v1h-1zM473 417h1v1h-1zM473 429h1v1h-1zM473 441h1v1h-1zM473 454h1v1h-1zM473 466h1v1h-1zM473 478h1v1h-1zM473 490h1v1h-1zM473 502h1v1h-1zM473 515h1v1h-1zM473 527h1v1h-1zM473 539h1v1h-1zM473 551h1v1h-1zM473 563h1v1h-1zM473 576h1v1h-1zM473 588h1v1h-1zM473 600h1v1h-1zM473 612h1v1h-1zM473 624h1v1h-1zM473 637h1v1h-1zM473 649h1v1h-1zM473 661h1v1h-1zM473 673h1v1h-1zM473 685h1v1h-1zM473 698h1v1h-1zM485 75h1v1h-1zM485 88h1v1h-1zM485 100h1v1h-1zM485 112h1v1h-1zM485 124h1v1h-1zM485 136h1v1h-1zM485 149h1v1h-1zM485 161h1v1h-1zM485 173h1v1h-1zM485 185h1v1h-1zM485 197h1v1h-1zM485 210h1v1h-1zM485 222h1v1h-1zM485 234h1v1h-1zM485 246h1v1h-1zM485 258h1v1h-1zM485 271h1v1h-1zM485 283h1v1h-1zM485 295h1v1h-1zM485 307h1v1h-1zM485 319h1v1h-1zM485 332h1v1h-1zM485 344h1v1h-1zM485 356h1v1h-1zM485 368h1v1h-1zM485 380h1v1h-1zM485 393h1v1h-1zM485 405h1v1h-1zM485 417h1v1h-1zM485 429h1v1h-1zM485 441h1v1h-1zM485 454h1v1h-1zM485 466h1v1h-1zM485 478h1v1h-1zM485 490h1v1h-1zM485 502h1v1h-1zM485 515h1v1h-1zM485 527h1v1h-1zM485 539h1v1h-1zM485 551h1v1h-1zM485 563h1v1h-1zM485 576h1v1h-1zM485 588h1v1h-1zM485 600h1v1h-1zM485 612h1v1h-1zM485 624h1v1h-1zM485 637h1v1h-1zM485 649h1v1h-1zM485 661h1v1h-1zM485 673h1v1h-1zM485 685h1v1h-1zM485 698h1v1h-1zM498 75h1v1h-1zM498 88h1v1h-1zM498 100h1v1h-1zM498 112h1v1h-1zM498 124h1v1h-1zM498 136h1v1h-1zM498 149h1v1h-1zM498 161h1v1h-1zM498 173h1v1h-1zM498 185h1v1h-1zM498 197h1v1h-1zM498 210h1v1h-1zM498 222h1v1h-1zM498 234h1v1h-1zM498 246h1v1h-1zM498 258h1v1h-1zM498 271h1v1h-1zM498 283h1v1h-1zM498 295h1v1h-1zM498 307h1v1h-1zM498 319h1v1h-1zM498 332h1v1h-1zM498 344h1v1h-1zM498 356h1v1h-1zM498 368h1v1h-1zM498 380h1v1h-1zM498 393h1v1h-1zM498 405h1v1h-1zM498 417h1v1h-1zM498 429h1v1h-1zM498 441h1v1h-1zM498 454h1v1h-1zM498 466h1v1h-1zM498 478h1v1h-1zM498 490h1v1h-1zM498 502h1v1h-1zM498 515h1v1h-1zM498 527h1v1h-1zM498 539h1v1h-1zM498 551h1v1h-1zM498 563h1v1h-1zM498 576h1v1h-1zM498 588h1v1h-1zM498 600h1v1h-1zM498 612h1v1h-1zM498 624h1v1h-1zM498 637h1v1h-1zM498 649h1v1h-1zM498 661h1v1h-1zM498 673h1v1h-1zM498 685h1v1h-1zM498 698h1v1h-1zM510 75h1v1h-1zM510 88h1v1h-1zM510 100h1v1h-1zM510 112h1v1h-1zM510 124h1v1h-1zM510 136h1v1h-1zM510 149h1v1h-1zM510 161h1v1h-1zM510 173h1v1h-1zM510 185h1v1h-1zM510 197h1v1h-1zM510 210h1v1h-1zM510 222h1v1h-1zM510 234h1v1h-1zM510 246h1v1h-1zM510 258h1v1h-1zM510 271h1v1h-1zM510 283h1v1h-1zM510 295h1v1h-1zM510 307h1v1h-1zM510 319h1v1h-1zM510 332h1v1h-1zM510 344h1v1h-1zM510 356h1v1h-1zM510 368h1v1h-1zM510 380h1v1h-1zM510 393h1v1h-1zM510 405h1v1h-1zM510 417h1v1h-1zM510 429h1v1h-1zM510 441h1v1h-1zM510 454h1v1h-1zM510 466h1v1h-1zM510 478h1v1h-1zM510 490h1v1h-1zM510 502h1v1h-1zM510 515h1v1h-1zM510 527h1v1h-1zM510 539h1v1h-1zM510 551h1v1h-1zM510 563h1v1h-1zM510 576h1v1h-1zM510 588h1v1h-1zM510 600h1v1h-1zM510 612h1v1h-1zM510 624h1v1h-1zM510 637h1v1h-1zM510 649h1v1h-1zM510 661h1v1h-1zM510 673h1v1h-1zM510 685h1v1h-1zM510 698h1v1h-1zM522 75h1v1h-1zM522 88h1v1h-1zM522 100h1v1h-1zM522 112h1v1h-1zM522 124h1v1h-1zM522 136h1v1h-1zM522 149h1v1h-1zM522 161h1v1h-1zM522 173h1v1h-1zM522 185h1v1h-1zM522 197h1v1h-1zM522 210h1v1h-1zM522 222h1v1h-1zM522 234h1v1h-1zM522 246h1v1h-1zM522 258h1v1h-1zM522 271h1v1h-1zM522 283h1v1h-1zM522 295h1v1h-1zM522 307h1v1h-1zM522 319h1v1h-1zM522 332h1v1h-1zM522 344h1v1h-1zM522 356h1v1h-1zM522 368h1v1h-1zM522 380h1v1h-1zM522 393h1v1h-1zM522 405h1v1h-1zM522 417h1v1h-1zM522 429h1v1h-1zM522 441h1v1h-1zM522 454h1v1h-1zM522 466h1v1h-1zM522 478h1v1h-1zM522 490h1v1h-1zM522 502h1v1h-1zM522 515h1v1h-1zM522 527h1v1h-1zM522 539h1v1h-1zM522 551h1v1h-1zM522 563h1v1h-1zM522 576h1v1h-1zM522 588h1v1h-1zM522 600h1v1h-1zM522 612h1v1h-1zM522 624h1v1h-1zM522 637h1v1h-1zM522 649h1v1h-1zM522 661h1v1h-1zM522 673h1v1h-1zM522 685h1v1h-1zM522 698h1v1h-1zM534 75h1v1h-1zM534 88h1v1h-1zM534 100h1v1h-1zM534 112h1v1h-1zM534 124h1v1h-1zM534 136h1v1h-1zM534 149h1v1h-1zM534 161h1v1h-1zM534 173h1v1h-1zM534 185h1v1h-1zM534 197h1v1h-1zM534 210h1v1h-1zM534 222h1v1h-1zM534 234h1v1h-1zM534 246h1v1h-1zM534 258h1v1h-1zM534 271h1v1h-1zM534 283h1v1h-1zM534 295h1v1h-1zM534 307h1v1h-1zM534 319h1v1h-1zM534 332h1v1h-1zM534 344h1v1h-1zM534 356h1v1h-1zM534 368h1v1h-1zM534 380h1v1h-1zM534 393h1v1h-1zM534 405h1v1h-1zM534 417h1v1h-1zM534 429h1v1h-1zM534 441h1v1h-1zM534 454h1v1h-1zM534 466h1v1h-1zM534 478h1v1h-1zM534 490h1v1h-1zM534 502h1v1h-1zM534 515h1v1h-1zM534 527h1v1h-1zM534 539h1v1h-1zM534 551h1v1h-1zM534 563h1v1h-1zM534 576h1v1h-1zM534 588h1v1h-1zM534 600h1v1h-1zM534 612h1v1h-1zM534 624h1v1h-1zM534 637h1v1h-1zM534 649h1v1h-1zM534 661h1v1h-1zM534 673h1v1h-1zM534 685h1v1h-1zM534 698h1v1h-1zM546 75h1v1h-1zM546 88h1v1h-1zM546 100h1v1h-1zM546 112h1v1h-1zM546 124h1v1h-1zM546 136h1v1h-1zM546 149h1v1h-1zM546 161h1v1h-1zM546 173h1v1h-1zM546 185h1v1h-1zM546 197h1v1h-1zM546 210h1v1h-1zM546 222h1v1h-1zM546 234h1v1h-1zM546 246h1v1h-1zM546 258h1v1h-1zM546 271h1v1h-1zM546 283h1v1h-1zM546 295h1v1h-1zM546 307h1v1h-1zM546 319h1v1h-1zM546 332h1v1h-1zM546 344h1v1h-1zM546 356h1v1h-1zM546 368h1v1h-1zM546 380h1v1h-1zM546 393h1v1h-1zM546 405h1v1h-1zM546 417h1v1h-1zM546 429h1v1h-1zM546 441h1v1h-1zM546 454h1v1h-1zM546 466h1v1h-1zM546 478h1v1h-1zM546 490h1v1h-1zM546 502h1v1h-1zM546 515h1v1h-1zM546 527h1v1h-1zM546 539h1v1h-1zM546 551h1v1h-1zM546 563h1v1h-1zM546 576h1v1h-1zM546 588h1v1h-1zM546 600h1v1h-1zM546 612h1v1h-1zM546 624h1v1h-1zM546 637h1v1h-1zM546 649h1v1h-1zM546 661h1v1h-1zM546 673h1v1h-1zM546 685h1v1h-1zM546 698h1v1h-1zM559 75h1v1h-1zM559 88h1v1h-1zM559 100h1v1h-1zM559 112h1v1h-1zM559 124h1v1h-1zM559 136h1v1h-1zM559 149h1v1h-1zM559 161h1v1h-1zM559 173h1v1h-1zM559 185h1v1h-1zM559 197h1v1h-1zM559 210h1v1h-1zM559 222h1v1h-1zM559 234h1v1h-1zM559 246h1v1h-1zM559 258h1v1h-1zM559 271h1v1h-1zM559 283h1v1h-1zM559 295h1v1h-1zM559 307h1v1h-1zM559 319h1v1h-1zM559 332h1v1h-1zM559 344h1v1h-1zM559 356h1v1h-1zM559 368h1v1h-1zM559 380h1v1h-1zM559 393h1v1h-1zM559 405h1v1h-1zM559 417h1v1h-1zM559 429h1v1h-1zM559 441h1v1h-1zM559 454h1v1h-1zM559 466h1v1h-1zM559 478h1v1h-1zM559 490h1v1h-1zM559 502h1v1h-1zM559 515h1v1h-1zM559 527h1v1h-1zM559 539h1v1h-1zM559 551h1v1h-1zM559 563h1v1h-1zM559 576h1v1h-1zM559 588h1v1h-1zM559 600h1v1h-1zM559 612h1v1h-1zM559 624h1v1h-1zM559 637h1v1h-1zM559 649h1v1h-1zM559 661h1v1h-1zM559 673h1v1h-1zM559 685h1v1h-1zM559 698h1v1h-1zM571 75h1v1h-1zM571 88h1v1h-1zM571 100h1v1h-1zM571 112h1v1h-1zM571 124h1v1h-1zM571 136h1v1h-1zM571 149h1v1h-1zM571 161h1v1h-1zM571 173h1v1h-1zM571 185h1v1h-1zM571 197h1v1h-1zM571 210h1v1h-1zM571 222h1v1h-1zM571 234h1v1h-1zM571 246h1v1h-1zM571 258h1v1h-1zM571 271h1v1h-1zM571 283h1v1h-1zM571 295h1v1h-1zM571 307h1v1h-1zM571 319h1v1h-1zM571 332h1v1h-1zM571 344h1v1h-1zM571 356h1v1h-1zM571 368h1v1h-1zM571 380h1v1h-1zM571 393h1v1h-1zM571 405h1v1h-1zM571 417h1v1h-1zM571 429h1v1h-1zM571 441h1v1h-1zM571 454h1v1h-1zM571 466h1v1h-1zM571 478h1v1h-1zM571 490h1v1h-1zM571 502h1v1h-1zM571 515h1v1h-1zM571 527h1v1h-1zM571 539h1v1h-1zM571 551h1v1h-1zM571 563h1v1h-1zM571 576h1v1h-1zM571 588h1v1h-1zM571 600h1v1h-1zM571 612h1v1h-1zM571 624h1v1h-1zM571 637h1v1h-1zM571 649h1v1h-1zM571 661h1v1h-1zM571 673h1v1h-1zM571 685h1v1h-1zM571 698h1v1h-1zM583 75h1v1h-1zM583 88h1v1h-1zM583 100h1v1h-1zM583 112h1v1h-1zM583 124h1v1h-1zM583 136h1v1h-1zM583 149h1v1h-1zM583 161h1v1h-1zM583 173h1v1h-1zM583 185h1v1h-1zM583 197h1v1h-1zM583 210h1v1h-1zM583 222h1v1h-1zM583 234h1v1h-1zM583 246h1v1h-1zM583 258h1v1h-1zM583 271h1v1h-1zM583 283h1v1h-1zM583 295h1v1h-1zM583 307h1v1h-1zM583 319h1v1h-1zM583 332h1v1h-1zM583 344h1v1h-1zM583 356h1v1h-1zM583 368h1v1h-1zM583 380h1v1h-1zM583 393h1v1h-1zM583 405h1v1h-1zM583 417h1v1h-1zM583 429h1v1h-1zM583 441h1v1h-1zM583 454h1v1h-1zM583 466h1v1h-1zM583 478h1v1h-1zM583 490h1v1h-1zM583 502h1v1h-1zM583 515h1v1h-1zM583 527h1v1h-1zM583 539h1v1h-1zM583 551h1v1h-1zM583 563h1v1h-1zM583 576h1v1h-1zM583 588h1v1h-1zM583 600h1v1h-1zM583 612h1v1h-1zM583 624h1v1h-1zM583 637h1v1h-1zM583 649h1v1h-1zM583 661h1v1h-1zM583 673h1v1h-1zM583 685h1v1h-1zM583 698h1v1h-1zM595 75h1v1h-1zM595 88h1v1h-1zM595 100h1v1h-1zM595 112h1v1h-1zM595 124h1v1h-1zM595 136h1v1h-1zM595 149h1v1h-1zM595 161h1v1h-1zM595 173h1v1h-1zM595 185h1v1h-1zM595 197h1v1h-1zM595 210h1v1h-1zM595 222h1v1h-1zM595 234h1v1h-1zM595 246h1v1h-1zM595 258h1v1h-1zM595 271h1v1h-1zM595 283h1v1h-1zM595 295h1v1h-1zM595 307h1v1h-1zM595 319h1v1h-1zM595 332h1v1h-1zM595 344h1v1h-1zM595 356h1v1h-1zM595 368h1v1h-1zM595 380h1v1h-1zM595 393h1v1h-1zM595 405h1v1h-1zM595 417h1v1h-1zM595 429h1v1h-1zM595 441h1v1h-1zM595 454h1v1h-1zM595 466h1v1h-1zM595 478h1v1h-1zM595 490h1v1h-1zM595 502h1v1h-1zM595 515h1v1h-1zM595 527h1v1h-1zM595 539h1v1h-1zM595 551h1v1h-1zM595 563h1v1h-1zM595 576h1v1h-1zM595 588h1v1h-1zM595 600h1v1h-1zM595 612h1v1h-1zM595 624h1v1h-1zM595 637h1v1h-1zM595 649h1v1h-1zM595 661h1v1h-1zM595 673h1v1h-1zM595 685h1v1h-1zM595 698h1v1h-1zM607 75h1v1h-1zM607 88h1v1h-1zM607 100h1v1h-1zM607 112h1v1h-1zM607 124h1v1h-1zM607 136h1v1h-1zM607 149h1v1h-1zM607 161h1v1h-1zM607 173h1v1h-1zM607 185h1v1h-1zM607 197h1v1h-1zM607 210h1v1h-1zM607 222h1v1h-1zM607 234h1v1h-1zM607 246h1v1h-1zM607 258h1v1h-1zM607 271h1v1h-1zM607 283h1v1h-1zM607 295h1v1h-1zM607 307h1v1h-1zM607 319h1v1h-1zM607 332h1v1h-1zM607 344h1v1h-1zM607 356h1v1h-1zM607 368h1v1h-1zM607 380h1v1h-1zM607 393h1v1h-1zM607 405h1v1h-1zM607 417h1v1h-1zM607 429h1v1h-1zM607 441h1v1h-1zM607 454h1v1h-1zM607 466h1v1h-1zM607 478h1v1h-1zM607 490h1v1h-1zM607 502h1v1h-1zM607 515h1v1h-1zM607 527h1v1h-1zM607 539h1v1h-1zM607 551h1v1h-1zM607 563h1v1h-1zM607 576h1v1h-1zM607 588h1v1h-1zM607 600h1v1h-1zM607 612h1v1h-1zM607 624h1v1h-1zM607 637h1v1h-1zM607 649h1v1h-1zM607 661h1v1h-1zM607 673h1v1h-1zM607 685h1v1h-1zM607 698h1v1h-1zM620 75h1v1h-1zM620 88h1v1h-1zM620 100h1v1h-1zM620 112h1v1h-1zM620 124h1v1h-1zM620 136h1v1h-1zM620 149h1v1h-1zM620 161h1v1h-1zM620 173h1v1h-1zM620 185h1v1h-1zM620 197h1v1h-1zM620 210h1v1h-1zM620 222h1v1h-1zM620 234h1v1h-1zM620 246h1v1h-1zM620 258h1v1h-1zM620 271h1v1h-1zM620 283h1v1h-1zM620 295h1v1h-1zM620 307h1v1h-1zM620 319h1v1h-1zM620 332h1v1h-1zM620 344h1v1h-1zM620 356h1v1h-1zM620 368h1v1h-1zM620 380h1v1h-1zM620 393h1v1h-1zM620 405h1v1h-1zM620 417h1v1h-1zM620 429h1v1h-1zM620 441h1v1h-1zM620 454h1v1h-1zM620 466h1v1h-1zM620 478h1v1h-1zM620 490h1v1h-1zM620 502h1v1h-1zM620 515h1v1h-1zM620 527h1v1h-1zM620 539h1v1h-1zM620 551h1v1h-1zM620 563h1v1h-1zM620 576h1v1h-1zM620 588h1v1h-1zM620 600h1v1h-1zM620 612h1v1h-1zM620 624h1v1h-1zM620 637h1v1h-1zM620 649h1v1h-1zM620 661h1v1h-1zM620 673h1v1h-1zM620 685h1v1h-1zM620 698h1v1h-1zM632 75h1v1h-1zM632 88h1v1h-1zM632 100h1v1h-1zM632 112h1v1h-1zM632 124h1v1h-1zM632 136h1v1h-1zM632 149h1v1h-1zM632 161h1v1h-1zM632 173h1v1h-1zM632 185h1v1h-1zM632 197h1v1h-1zM632 210h1v1h-1zM632 222h1v1h-1zM632 234h1v1h-1zM632 246h1v1h-1zM632 258h1v1h-1zM632 271h1v1h-1zM632 283h1v1h-1zM632 295h1v1h-1zM632 307h1v1h-1zM632 319h1v1h-1zM632 332h1v1h-1zM632 344h1v1h-1zM632 356h1v1h-1zM632 368h1v1h-1zM632 380h1v1h-1zM632 393h1v1h-1zM632 405h1v1h-1zM632 417h1v1h-1zM632 429h1v1h-1zM632 441h1v1h-1zM632 454h1v1h-1zM632 466h1v1h-1zM632 478h1v1h-1zM632 490h1v1h-1zM632 502h1v1h-1zM632 515h1v1h-1zM632 527h1v1h-1zM632 539h1v1h-1zM632 551h1v1h-1zM632 563h1v1h-1zM632 576h1v1h-1zM632 588h1v1h-1zM632 600h1v1h-1zM632 612h1v1h-1zM632 624h1v1h-1zM632 637h1v1h-1zM632 649h1v1h-1zM632 661h1v1h-1zM632 673h1v1h-1zM632 685h1v1h-1zM632 698h1v1h-1zM644 75h1v1h-1zM644 88h1v1h-1zM644 100h1v1h-1zM644 112h1v1h-1zM644 124h1v1h-1zM644 136h1v1h-1zM644 149h1v1h-1zM644 161h1v1h-1zM644 173h1v1h-1zM644 185h1v1h-1zM644 197h1v1h-1zM644 210h1v1h-1zM644 222h1v1h-1zM644 234h1v1h-1zM644 246h1v1h-1zM644 258h1v1h-1zM644 271h1v1h-1zM644 283h1v1h-1zM644 295h1v1h-1zM644 307h1v1h-1zM644 319h1v1h-1zM644 332h1v1h-1zM644 344h1v1h-1zM644 356h1v1h-1zM644 368h1v1h-1zM644 380h1v1h-1zM644 393h1v1h-1zM644 405h1v1h-1zM644 417h1v1h-1zM644 429h1v1h-1zM644 441h1v1h-1zM644 454h1v1h-1zM644 466h1v1h-1zM644 478h1v1h-1zM644 490h1v1h-1zM644 502h1v1h-1zM644 515h1v1h-1zM644 527h1v1h-1zM644 539h1v1h-1zM644 551h1v1h-1zM644 563h1v1h-1zM644 576h1v1h-1zM644 588h1v1h-1zM644 600h1v1h-1zM644 612h1v1h-1zM644 624h1v1h-1zM644 637h1v1h-1zM644 649h1v1h-1zM644 661h1v1h-1zM644 673h1v1h-1zM644 685h1v1h-1zM644 698h1v1h-1zM656 75h1v1h-1zM656 88h1v1h-1zM656 100h1v1h-1zM656 112h1v1h-1zM656 124h1v1h-1zM656 136h1v1h-1zM656 149h1v1h-1zM656 161h1v1h-1zM656 173h1v1h-1zM656 185h1v1h-1zM656 197h1v1h-1zM656 210h1v1h-1zM656 222h1v1h-1zM656 234h1v1h-1zM656 246h1v1h-1zM656 258h1v1h-1zM656 271h1v1h-1zM656 283h1v1h-1zM656 295h1v1h-1zM656 307h1v1h-1zM656 319h1v1h-1zM656 332h1v1h-1zM656 344h1v1h-1zM656 356h1v1h-1zM656 368h1v1h-1zM656 380h1v1h-1zM656 393h1v1h-1zM656 405h1v1h-1zM656 417h1v1h-1zM656 429h1v1h-1zM656 441h1v1h-1zM656 454h1v1h-1zM656 466h1v1h-1zM656 478h1v1h-1zM656 490h1v1h-1zM656 502h1v1h-1zM656 515h1v1h-1zM656 527h1v1h-1zM656 539h1v1h-1zM656 551h1v1h-1zM656 563h1v1h-1zM656 576h1v1h-1zM656 588h1v1h-1zM656 600h1v1h-1zM656 612h1v1h-1zM656 624h1v1h-1zM656 637h1v1h-1zM656 649h1v1h-1zM656 661h1v1h-1zM656 673h1v1h-1zM656 685h1v1h-1zM656 698h1v1h-1zM668 75h1v1h-1zM668 88h1v1h-1zM668 100h1v1h-1zM668 112h1v1h-1zM668 124h1v1h-1zM668 136h1v1h-1zM668 149h1v1h-1zM668 161h1v1h-1zM668 173h1v1h-1zM668 185h1v1h-1zM668 197h1v1h-1zM668 210h1v1h-1zM668 222h1v1h-1zM668 234h1v1h-1zM668 246h1v1h-1zM668 258h1v1h-1zM668 271h1v1h-1zM668 283h1v1h-1zM668 295h1v1h-1zM668 307h1v1h-1zM668 319h1v1h-1zM668 332h1v1h-1zM668 344h1v1h-1zM668 356h1v1h-1zM668 368h1v1h-1zM668 380h1v1h-1zM668 393h1v1h-1zM668 405h1v1h-1zM668 417h1v1h-1zM668 429h1v1h-1zM668 441h1v1h-1zM668 454h1v1h-1zM668 466h1v1h-1zM668 478h1v1h-1zM668 490h1v1h-1zM668 502h1v1h-1zM668 515h1v1h-1zM668 527h1v1h-1zM668 539h1v1h-1zM668 551h1v1h-1zM668 563h1v1h-1zM668 576h1v1h-1zM668 588h1v1h-1zM668 600h1v1h-1zM668 612h1v1h-1zM668 624h1v1h-1zM668 637h1v1h-1zM668 649h1v1h-1zM668 661h1v1h-1zM668 673h1v1h-1zM668 685h1v1h-1zM668 698h1v1h-1zM681 75h1v1h-1zM681 88h1v1h-1zM681 100h1v1h-1zM681 112h1v1h-1zM681 124h1v1h-1zM681 136h1v1h-1zM681 149h1v1h-1zM681 161h1v1h-1zM681 173h1v1h-1zM681 185h1v1h-1zM681 197h1v1h-1zM681 210h1v1h-1zM681 222h1v1h-1zM681 234h1v1h-1zM681 246h1v1h-1zM681 258h1v1h-1zM681 271h1v1h-1zM681 283h1v1h-1zM681 295h1v1h-1zM681 307h1v1h-1zM681 319h1v1h-1zM681 332h1v1h-1zM681 344h1v1h-1zM681 356h1v1h-1zM681 368h1v1h-1zM681 380h1v1h-1zM681 393h1v1h-1zM681 405h1v1h-1zM681 417h1v1h-1zM681 429h1v1h-1zM681 441h1v1h-1zM681 454h1v1h-1zM681 466h1v1h-1zM681 478h1v1h-1zM681 490h1v1h-1zM681 502h1v1h-1zM681 515h1v1h-1zM681 527h1v1h-1zM681 539h1v1h-1zM681 551h1v1h-1zM681 563h1v1h-1zM681 576h1v1h-1zM681 588h1v1h-1zM681 600h1v1h-1zM681 612h1v1h-1zM681 624h1v1h-1zM681 637h1v1h-1zM681 649h1v1h-1zM681 661h1v1h-1zM681 673h1v1h-1zM681 685h1v1h-1zM681 698h1v1h-1zM693 75h1v1h-1zM693 88h1v1h-1zM693 100h1v1h-1zM693 112h1v1h-1zM693 124h1v1h-1zM693 136h1v1h-1zM693 149h1v1h-1zM693 161h1v1h-1zM693 173h1v1h-1zM693 185h1v1h-1zM693 197h1v1h-1zM693 210h1v1h-1zM693 222h1v1h-1zM693 234h1v1h-1zM693 246h1v1h-1zM693 258h1v1h-1zM693 271h1v1h-1zM693 283h1v1h-1zM693 295h1v1h-1zM693 307h1v1h-1zM693 319h1v1h-1zM693 332h1v1h-1zM693 344h1v1h-1zM693 356h1v1h-1zM693 368h1v1h-1zM693 380h1v1h-1zM693 393h1v1h-1zM693 405h1v1h-1zM693 417h1v1h-1zM693 429h1v1h-1zM693 441h1v1h-1zM693 454h1v1h-1zM693 466h1v1h-1zM693 478h1v1h-1zM693 490h1v1h-1zM693 502h1v1h-1zM693 515h1v1h-1zM693 527h1v1h-1zM693 539h1v1h-1zM693 551h1v1h-1zM693 563h1v1h-1zM693 576h1v1h-1zM693 588h1v1h-1zM693 600h1v1h-1zM693 612h1v1h-1zM693 624h1v1h-1zM693 637h1v1h-1zM693 649h1v1h-1zM693 661h1v1h-1zM693 673h1v1h-1zM693 685h1v1h-1zM693 698h1v1h-1zM705 75h1v1h-1zM705 88h1v1h-1zM705 100h1v1h-1zM705 112h1v1h-1zM705 124h1v1h-1zM705 136h1v1h-1zM705 149h1v1h-1zM705 161h1v1h-1zM705 173h1v1h-1zM705 185h1v1h-1zM705 197h1v1h-1zM705 210h1v1h-1zM705 222h1v1h-1zM705 234h1v1h-1zM705 246h1v1h-1zM705 258h1v1h-1zM705 271h1v1h-1zM705 283h1v1h-1zM705 295h1v1h-1zM705 307h1v1h-1zM705 319h1v1h-1zM705 332h1v1h-1zM705 344h1v1h-1zM705 356h1v1h-1zM705 368h1v1h-1zM705 380h1v1h-1zM705 393h1v1h-1zM705 405h1v1h-1zM705 417h1v1h-1zM705 429h1v1h-1zM705 441h1v1h-1zM705 454h1v1h-1zM705 466h1v1h-1zM705 478h1v1h-1zM705 490h1v1h-1zM705 502h1v1h-1zM705 515h1v1h-1zM705 527h1v1h-1zM705 539h1v1h-1zM705 551h1v1h-1zM705 563h1v1h-1zM705 576h1v1h-1zM705 588h1v1h-1zM705 600h1v1h-1zM705 612h1v1h-1zM705 624h1v1h-1zM705 637h1v1h-1zM705 649h1v1h-1zM705 661h1v1h-1zM705 673h1v1h-1zM705 685h1v1h-1zM705 698h1v1h-1zM717 75h1v1h-1zM717 88h1v1h-1zM717 100h1v1h-1zM717 112h1v1h-1zM717 124h1v1h-1zM717 136h1v1h-1zM717 149h1v1h-1zM717 161h1v1h-1zM717 173h1v1h-1zM717 185h1v1h-1zM717 197h1v1h-1zM717 210h1v1h-1zM717 222h1v1h-1zM717 234h1v1h-1zM717 246h1v1h-1zM717 258h1v1h-1zM717 271h1v1h-1zM717 283h1v1h-1zM717 295h1v1h-1zM717 307h1v1h-1zM717 319h1v1h-1zM717 332h1v1h-1zM717 344h1v1h-1zM717 356h1v1h-1zM717 368h1v1h-1zM717 380h1v1h-1zM717 393h1v1h-1zM717 405h1v1h-1zM717 417h1v1h-1zM717 429h1v1h-1zM717 441h1v1h-1zM717 454h1v1h-1zM717 466h1v1h-1zM717 478h1v1h-1zM717 490h1v1h-1zM717 502h1v1h-1zM717 515h1v1h-1zM717 527h1v1h-1zM717 539h1v1h-1zM717 551h1v1h-1zM717 563h1v1h-1zM717 576h1v1h-1zM717 588h1v1h-1zM717 600h1v1h-1zM717 612h1v1h-1zM717 624h1v1h-1zM717 637h1v1h-1zM717 649h1v1h-1zM717 661h1v1h-1zM717 673h1v1h-1zM717 685h1v1h-1zM717 698h1v1h-1zM729 75h1v1h-1zM729 88h1v1h-1zM729 100h1v1h-1zM729 112h1v1h-1zM729 124h1v1h-1zM729 136h1v1h-1zM729 149h1v1h-1zM729 161h1v1h-1zM729 173h1v1h-1zM729 185h1v1h-1zM729 197h1v1h-1zM729 210h1v1h-1zM729 222h1v1h-1zM729 234h1v1h-1zM729 246h1v1h-1zM729 258h1v1h-1zM729 271h1v1h-1zM729 283h1v1h-1zM729 295h1v1h-1zM729 307h1v1h-1zM729 319h1v1h-1zM729 332h1v1h-1zM729 344h1v1h-1zM729 356h1v1h-1zM729 368h1v1h-1zM729 380h1v1h-1zM729 393h1v1h-1zM729 405h1v1h-1zM729 417h1v1h-1zM729 429h1v1h-1zM729 441h1v1h-1zM729 454h1v1h-1zM729 466h1v1h-1zM729 478h1v1h-1zM729 490h1v1h-1zM729 502h1v1h-1zM729 515h1v1h-1zM729 527h1v1h-1zM729 539h1v1h-1zM729 551h1v1h-1zM729 563h1v1h-1zM729 576h1v1h-1zM729 588h1v1h-1zM729 600h1v1h-1zM729 612h1v1h-1zM729 624h1v1h-1zM729 637h1v1h-1zM729 649h1v1h-1zM729 661h1v1h-1zM729 673h1v1h-1zM729 685h1v1h-1zM729 698h1v1h-1zM742 75h1v1h-1zM742 88h1v1h-1zM742 100h1v1h-1zM742 112h1v1h-1zM742 124h1v1h-1zM742 136h1v1h-1zM742 149h1v1h-1zM742 161h1v1h-1zM742 173h1v1h-1zM742 185h1v1h-1zM742 197h1v1h-1zM742 210h1v1h-1zM742 222h1v1h-1zM742 234h1v1h-1zM742 246h1v1h-1zM742 258h1v1h-1zM742 271h1v1h-1zM742 283h1v1h-1zM742 295h1v1h-1zM742 307h1v1h-1zM742 319h1v1h-1zM742 332h1v1h-1zM742 344h1v1h-1zM742 356h1v1h-1zM742 368h1v1h-1zM742 380h1v1h-1zM742 393h1v1h-1zM742 405h1v1h-1zM742 417h1v1h-1zM742 429h1v1h-1zM742 441h1v1h-1zM742 454h1v1h-1zM742 466h1v1h-1zM742 478h1v1h-1zM742 490h1v1h-1zM742 502h1v1h-1zM742 515h1v1h-1zM742 527h1v1h-1zM742 539h1v1h-1zM742 551h1v1h-1zM742 563h1v1h-1zM742 576h1v1h-1zM742 588h1v1h-1zM742 600h1v1h-1zM742 612h1v1h-1zM742 624h1v1h-1zM742 637h1v1h-1zM742 649h1v1h-1zM742 661h1v1h-1zM742 673h1v1h-1zM742 685h1v1h-1zM742 698h1v1h-1zM754 75h1v1h-1zM754 88h1v1h-1zM754 100h1v1h-1zM754 112h1v1h-1zM754 124h1v1h-1zM754 136h1v1h-1zM754 149h1v1h-1zM754 161h1v1h-1zM754 173h1v1h-1zM754 185h1v1h-1zM754 197h1v1h-1zM754 210h1v1h-1zM754 222h1v1h-1zM754 234h1v1h-1zM754 246h1v1h-1zM754 258h1v1h-1zM754 271h1v1h-1zM754 283h1v1h-1zM754 295h1v1h-1zM754 307h1v1h-1zM754 319h1v1h-1zM754 332h1v1h-1zM754 344h1v1h-1zM754 356h1v1h-1zM754 368h1v1h-1zM754 380h1v1h-1zM754 393h1v1h-1zM754 405h1v1h-1zM754 417h1v1h-1zM754 429h1v1h-1zM754 441h1v1h-1zM754 454h1v1h-1zM754 466h1v1h-1zM754 478h1v1h-1zM754 490h1v1h-1zM754 502h1v1h-1zM754 515h1v1h-1zM754 527h1v1h-1zM754 539h1v1h-1zM754 551h1v1h-1zM754 563h1v1h-1zM754 576h1v1h-1zM754 588h1v1h-1zM754 600h1v1h-1zM754 612h1v1h-1zM754 624h1v1h-1zM754 637h1v1h-1zM754 649h1v1h-1zM754 661h1v1h-1zM754 673h1v1h-1zM754 685h1v1h-1zM754 698h1v1h-1zM766 75h1v1h-1zM766 88h1v1h-1zM766 100h1v1h-1zM766 112h1v1h-1zM766 124h1v1h-1zM766 136h1v1h-1zM766 149h1v1h-1zM766 161h1v1h-1zM766 173h1v1h-1zM766 185h1v1h-1zM766 197h1v1h-1zM766 210h1v1h-1zM766 222h1v1h-1zM766 234h1v1h-1zM766 246h1v1h-1zM766 258h1v1h-1zM766 271h1v1h-1zM766 283h1v1h-1zM766 295h1v1h-1zM766 307h1v1h-1zM766 319h1v1h-1zM766 332h1v1h-1zM766 344h1v1h-1zM766 356h1v1h-1zM766 368h1v1h-1zM766 380h1v1h-1zM766 393h1v1h-1zM766 405h1v1h-1zM766 417h1v1h-1zM766 429h1v1h-1zM766 441h1v1h-1zM766 454h1v1h-1zM766 466h1v1h-1zM766 478h1v1h-1zM766 490h1v1h-1zM766 502h1v1h-1zM766 515h1v1h-1zM766 527h1v1h-1zM766 539h1v1h-1zM766 551h1v1h-1zM766 563h1v1h-1zM766 576h1v1h-1zM766 588h1v1h-1zM766 600h1v1h-1zM766 612h1v1h-1zM766 624h1v1h-1zM766 637h1v1h-1zM766 649h1v1h-1zM766 661h1v1h-1zM766 673h1v1h-1zM766 685h1v1h-1zM766 698h1v1h-1zM778 75h1v1h-1zM778 88h1v1h-1zM778 100h1v1h-1zM778 112h1v1h-1zM778 124h1v1h-1zM778 136h1v1h-1zM778 149h1v1h-1zM778 161h1v1h-1zM778 173h1v1h-1zM778 185h1v1h-1zM778 197h1v1h-1zM778 210h1v1h-1zM778 222h1v1h-1zM778 234h1v1h-1zM778 246h1v1h-1zM778 258h1v1h-1zM778 271h1v1h-1zM778 283h1v1h-1zM778 295h1v1h-1zM778 307h1v1h-1zM778 319h1v1h-1zM778 332h1v1h-1zM778 344h1v1h-1zM778 356h1v1h-1zM778 368h1v1h-1zM778 380h1v1h-1zM778 393h1v1h-1zM778 405h1v1h-1zM778 417h1v1h-1zM778 429h1v1h-1zM778 441h1v1h-1zM778 454h1v1h-1zM778 466h1v1h-1zM778 478h1v1h-1zM778 490h1v1h-1zM778 502h1v1h-1zM778 515h1v1h-1zM778 527h1v1h-1zM778 539h1v1h-1zM778 551h1v1h-1zM778 563h1v1h-1zM778 576h1v1h-1zM778 588h1v1h-1zM778 600h1v1h-1zM778 612h1v1h-1zM778 624h1v1h-1zM778 637h1v1h-1zM778 649h1v1h-1zM778 661h1v1h-1zM778 673h1v1h-1zM778 685h1v1h-1zM778 698h1v1h-1zM790 75h1v1h-1zM790 88h1v1h-1zM790 100h1v1h-1zM790 112h1v1h-1zM790 124h1v1h-1zM790 136h1v1h-1zM790 149h1v1h-1zM790 161h1v1h-1zM790 173h1v1h-1zM790 185h1v1h-1zM790 197h1v1h-1zM790 210h1v1h-1zM790 222h1v1h-1zM790 234h1v1h-1zM790 246h1v1h-1zM790 258h1v1h-1zM790 271h1v1h-1zM790 283h1v1h-1zM790 295h1v1h-1zM790 307h1v1h-1zM790 319h1v1h-1zM790 332h1v1h-1zM790 344h1v1h-1zM790 356h1v1h-1zM790 368h1v1h-1zM790 380h1v1h-1zM790 393h1v1h-1zM790 405h1v1h-1zM790 417h1v1h-1zM790 429h1v1h-1zM790 441h1v1h-1zM790 454h1v1h-1zM790 466h1v1h-1zM790 478h1v1h-1zM790 490h1v1h-1zM790 502h1v1h-1zM790 515h1v1h-1zM790 527h1v1h-1zM790 539h1v1h-1zM790 551h1v1h-1zM790 563h1v1h-1zM790 576h1v1h-1zM790 588h1v1h-1zM790 600h1v1h-1zM790 612h1v1h-1zM790 624h1v1h-1zM790 637h1v1h-1zM790 649h1v1h-1zM790 661h1v1h-1zM790 673h1v1h-1zM790 685h1v1h-1zM790 698h1v1h-1zM803 75h1v1h-1zM803 88h1v1h-1zM803 100h1v1h-1zM803 112h1v1h-1zM803 124h1v1h-1zM803 136h1v1h-1zM803 149h1v1h-1zM803 161h1v1h-1zM803 173h1v1h-1zM803 185h1v1h-1zM803 197h1v1h-1zM803 210h1v1h-1zM803 222h1v1h-1zM803 234h1v1h-1zM803 246h1v1h-1zM803 258h1v1h-1zM803 271h1v1h-1zM803 283h1v1h-1zM803 295h1v1h-1zM803 307h1v1h-1zM803 319h1v1h-1zM803 332h1v1h-1zM803 344h1v1h-1zM803 356h1v1h-1zM803 368h1v1h-1zM803 380h1v1h-1zM803 393h1v1h-1zM803 405h1v1h-1zM803 417h1v1h-1zM803 429h1v1h-1zM803 441h1v1h-1zM803 454h1v1h-1zM803 466h1v1h-1zM803 478h1v1h-1zM803 490h1v1h-1zM803 502h1v1h-1zM803 515h1v1h-1zM803 527h1v1h-1zM803 539h1v1h-1zM803 551h1v1h-1zM803 563h1v1h-1zM803 576h1v1h-1zM803 588h1v1h-1zM803 600h1v1h-1zM803 612h1v1h-1zM803 624h1v1h-1zM803 637h1v1h-1zM803 649h1v1h-1zM803 661h1v1h-1zM803 673h1v1h-1zM803 685h1v1h-1zM803 698h1v1h-1zM815 75h1v1h-1zM815 88h1v1h-1zM815 100h1v1h-1zM815 112h1v1h-1zM815 124h1v1h-1zM815 136h1v1h-1zM815 149h1v1h-1zM815 161h1v1h-1zM815 173h1v1h-1zM815 185h1v1h-1zM815 197h1v1h-1zM815 210h1v1h-1zM815 222h1v1h-1zM815 234h1v1h-1zM815 246h1v1h-1zM815 258h1v1h-1zM815 271h1v1h-1zM815 283h1v1h-1zM815 295h1v1h-1zM815 307h1v1h-1zM815 319h1v1h-1zM815 332h1v1h-1zM815 344h1v1h-1zM815 356h1v1h-1zM815 368h1v1h-1zM815 380h1v1h-1zM815 393h1v1h-1zM815 405h1v1h-1zM815 417h1v1h-1zM815 429h1v1h-1zM815 441h1v1h-1zM815 454h1v1h-1zM815 466h1v1h-1zM815 478h1v1h-1zM815 490h1v1h-1zM815 502h1v1h-1zM815 515h1v1h-1zM815 527h1v1h-1zM815 539h1v1h-1zM815 551h1v1h-1zM815 563h1v1h-1zM815 576h1v1h-1zM815 588h1v1h-1zM815 600h1v1h-1zM815 612h1v1h-1zM815 624h1v1h-1zM815 637h1v1h-1zM815 649h1v1h-1zM815 661h1v1h-1zM815 673h1v1h-1zM815 685h1v1h-1zM815 698h1v1h-1zM827 75h1v1h-1zM827 88h1v1h-1zM827 100h1v1h-1zM827 112h1v1h-1zM827 124h1v1h-1zM827 136h1v1h-1zM827 149h1v1h-1zM827 161h1v1h-1zM827 173h1v1h-1zM827 185h1v1h-1zM827 197h1v1h-1zM827 210h1v1h-1zM827 222h1v1h-1zM827 234h1v1h-1zM827 246h1v1h-1zM827 258h1v1h-1zM827 271h1v1h-1zM827 283h1v1h-1zM827 295h1v1h-1zM827 307h1v1h-1zM827 319h1v1h-1zM827 332h1v1h-1zM827 344h1v1h-1zM827 356h1v1h-1zM827 368h1v1h-1zM827 380h1v1h-1zM827 393h1v1h-1zM827 405h1v1h-1zM827 417h1v1h-1zM827 429h1v1h-1zM827 441h1v1h-1zM827 454h1v1h-1zM827 466h1v1h-1zM827 478h1v1h-1zM827 490h1v1h-1zM827 502h1v1h-1zM827 515h1v1h-1zM827 527h1v1h-1zM827 539h1v1h-1zM827 551h1v1h-1zM827 563h1v1h-1zM827 576h1v1h-1zM827 588h1v1h-1zM827 600h1v1h-1zM827 612h1v1h-1zM827 624h1v1h-1zM827 637h1v1h-1zM827 649h1v1h-1zM827 661h1v1h-1zM827 673h1v1h-1zM827 685h1v1h-1zM827 698h1v1h-1zM839 75h1v1h-1zM839 88h1v1h-1zM839 100h1v1h-1zM839 112h1v1h-1zM839 124h1v1h-1zM839 136h1v1h-1zM839 149h1v1h-1zM839 161h1v1h-1zM839 173h1v1h-1zM839 185h1v1h-1zM839 197h1v1h-1zM839 210h1v1h-1zM839 222h1v1h-1zM839 234h1v1h-1zM839 246h1v1h-1zM839 258h1v1h-1zM839 271h1v1h-1zM839 283h1v1h-1zM839 295h1v1h-1zM839 307h1v1h-1zM839 319h1v1h-1zM839 332h1v1h-1zM839 344h1v1h-1zM839 356h1v1h-1zM839 368h1v1h-1zM839 380h1v1h-1zM839 393h1v1h-1zM839 405h1v1h-1zM839 417h1v1h-1zM839 429h1v1h-1zM839 441h1v1h-1zM839 454h1v1h-1zM839 466h1v1h-1zM839 478h1v1h-1zM839 490h1v1h-1zM839 502h1v1h-1zM839 515h1v1h-1zM839 527h1v1h-1zM839 539h1v1h-1zM839 551h1v1h-1zM839 563h1v1h-1zM839 576h1v1h-1zM839 588h1v1h-1zM839 600h1v1h-1zM839 612h1v1h-1zM839 624h1v1h-1zM839 637h1v1h-1zM839 649h1v1h-1zM839 661h1v1h-1zM839 673h1v1h-1zM839 685h1v1h-1zM839 698h1v1h-1zM851 75h1v1h-1zM851 88h1v1h-1zM851 100h1v1h-1zM851 112h1v1h-1zM851 124h1v1h-1zM851 136h1v1h-1zM851 149h1v1h-1zM851 161h1v1h-1zM851 173h1v1h-1zM851 185h1v1h-1zM851 197h1v1h-1zM851 210h1v1h-1zM851 222h1v1h-1zM851 234h1v1h-1zM851 246h1v1h-1zM851 258h1v1h-1zM851 271h1v1h-1zM851 283h1v1h-1zM851 295h1v1h-1zM851 307h1v1h-1zM851 319h1v1h-1zM851 332h1v1h-1zM851 344h1v1h-1zM851 356h1v1h-1zM851 368h1v1h-1zM851 380h1v1h-1zM851 393h1v1h-1zM851 405h1v1h-1zM851 417h1v1h-1zM851 429h1v1h-1zM851 441h1v1h-1zM851 454h1v1h-1zM851 466h1v1h-1zM851 478h1v1h-1zM851 490h1v1h-1zM851 502h1v1h-1zM851 515h1v1h-1zM851 527h1v1h-1zM851 539h1v1h-1zM851 551h1v1h-1zM851 563h1v1h-1zM851 576h1v1h-1zM851 588h1v1h-1zM851 600h1v1h-1zM851 612h1v1h-1zM851 624h1v1h-1zM851 637h1v1h-1zM851 649h1v1h-1zM851 661h1v1h-1zM851 673h1v1h-1zM851 685h1v1h-1zM851 698h1v1h-1z" fill="#a0a0a0"/><path d="M339 76h1v1h-1zM339 89h1v1h-1zM339 101h1v1h-1zM339 113h1v1h-1zM339 125h1v1h-1zM339 137h1v1h-1zM339 150h1v1h-1zM339 162h1v1h-1zM339 174h1v1h-1zM339 186h1v1h-1zM339 198h1v1h-1zM339 211h1v1h-1zM339 223h1v1h-1zM339 235h1v1h-1zM339 247h1v1h-1zM339 259h1v1h-1zM339 272h1v1h-1zM339 284h1v1h-1zM339 296h1v1h-1zM339 308h1v1h-1zM339 320h1v1h-1zM339 333h1v1h-1zM339 345h1v1h-1zM339 357h1v1h-1zM339 369h1v1h-1zM339 381h1v1h-1zM339 394h1v1h-1zM339 406h1v1h-1zM339 418h1v1h-1zM339 430h1v1h-1zM339 442h1v1h-1zM339 455h1v1h-1zM339 467h1v1h-1zM339 479h1v1h-1zM339 491h1v1h-1zM339 503h1v1h-1zM339 516h1v1h-1zM339 528h1v1h-1zM339 540h1v1h-1zM339 552h1v1h-1zM339 564h1v1h-1zM339 577h1v1h-1zM339 589h1v1h-1zM339 601h1v1h-1zM339 613h1v1h-1zM339 625h1v1h-1zM339 638h1v1h-1zM339 650h1v1h-1zM339 662h1v1h-1zM339 674h1v1h-1zM339 686h1v1h-1zM339 699h1v1h-1zM351 76h1v1h-1zM351 89h1v1h-1zM351 101h1v1h-1zM351 113h1v1h-1zM351 125h1v1h-1zM351 137h1v1h-1zM351 150h1v1h-1zM351 162h1v1h-1zM351 174h1v1h-1zM351 186h1v1h-1zM351 198h1v1h-1zM351 211h1v1h-1zM351 223h1v1h-1zM351 235h1v1h-1zM351 247h1v1h-1zM351 259h1v1h-1zM351 272h1v1h-1zM351 284h1v1h-1zM351 296h1v1h-1zM351 308h1v1h-1zM351 320h1v1h-1zM351 333h1v1h-1zM351 345h1v1h-1zM351 357h1v1h-1zM351 369h1v1h-1zM351 381h1v1h-1zM351 394h1v1h-1zM351 406h1v1h-1zM351 418h1v1h-1zM351 430h1v1h-1zM351 442h1v1h-1zM351 455h1v1h-1zM351 467h1v1h-1zM351 479h1v1h-1zM351 491h1v1h-1zM351 503h1v1h-1zM351 516h1v1h-1zM351 528h1v1h-1zM351 540h1v1h-1zM351 552h1v1h-1zM351 564h1v1h-1zM351 577h1v1h-1zM351 589h1v1h-1zM351 601h1v1h-1zM351 613h1v1h-1zM351 625h1v1h-1zM351 638h1v1h-1zM351 650h1v1h-1zM351 662h1v1h-1zM351 674h1v1h-1zM351 686h1v1h-1zM351 699h1v1h-1zM363 76h1v1h-1zM363 89h1v1h-1zM363 101h1v1h-1zM363 113h1v1h-1zM363 125h1v1h-1zM363 137h1v1h-1zM363 150h1v1h-1zM363 162h1v1h-1zM363 174h1v1h-1zM363 186h1v1h-1zM363 198h1v1h-1zM363 211h1v1h-1zM363 223h1v1h-1zM363 235h1v1h-1zM363 247h1v1h-1zM363 259h1v1h-1zM363 272h1v1h-1zM363 284h1v1h-1zM363 296h1v1h-1zM363 308h1v1h-1zM363 320h1v1h-1zM363 333h1v1h-1zM363 345h1v1h-1zM363 357h1v1h-1zM363 369h1v1h-1zM363 381h1v1h-1zM363 394h1v1h-1zM363 406h1v1h-1zM363 418h1v1h-1zM363 430h1v1h-1zM363 442h1v1h-1zM363 455h1v1h-1zM363 467h1v1h-1zM363 479h1v1h-1zM363 491h1v1h-1zM363 503h1v1h-1zM363 516h1v1h-1zM363 528h1v1h-1zM363 540h1v1h-1zM363 552h1v1h-1zM363 564h1v1h-1zM363 577h1v1h-1zM363 589h1v1h-1zM363 601h1v1h-1zM363 613h1v1h-1zM363 625h1v1h-1zM363 638h1v1h-1zM363 650h1v1h-1zM363 662h1v1h-1zM363 674h1v1h-1zM363 686h1v1h-1zM363 699h1v1h-1zM376 76h1v1h-1zM376 89h1v1h-1zM376 101h1v1h-1zM376 113h1v1h-1zM376 125h1v1h-1zM376 137h1v1h-1zM376 150h1v1h-1zM376 162h1v1h-1zM376 174h1v1h-1zM376 186h1v1h-1zM376 198h1v1h-1zM376 211h1v1h-1zM376 223h1v1h-1zM376 235h1v1h-1zM376 247h1v1h-1zM376 259h1v1h-1zM376 272h1v1h-1zM376 284h1v1h-1zM376 296h1v1h-1zM376 308h1v1h-1zM376 320h1v1h-1zM376 333h1v1h-1zM376 345h1v1h-1zM376 357h1v1h-1zM376 369h1v1h-1zM376 381h1v1h-1zM376 394h1v1h-1zM376 406h1v1h-1zM376 418h1v1h-1zM376 430h1v1h-1zM376 442h1v1h-1zM376 455h1v1h-1zM376 467h1v1h-1zM376 479h1v1h-1zM376 491h1v1h-1zM376 503h1v1h-1zM376 516h1v1h-1zM376 528h1v1h-1zM376 540h1v1h-1zM376 552h1v1h-1zM376 564h1v1h-1zM376 577h1v1h-1zM376 589h1v1h-1zM376 601h1v1h-1zM376 613h1v1h-1zM376 625h1v1h-1zM376 638h1v1h-1zM376 650h1v1h-1zM376 662h1v1h-1zM376 674h1v1h-1zM376 686h1v1h-1zM376 699h1v1h-1zM388 76h1v1h-1zM388 89h1v1h-1zM388 101h1v1h-1zM388 113h1v1h-1zM388 125h1v1h-1zM388 137h1v1h-1zM388 150h1v1h-1zM388 162h1v1h-1zM388 174h1v1h-1zM388 186h1v1h-1zM388 198h1v1h-1zM388 211h1v1h-1zM388 223h1v1h-1zM388 235h1v1h-1zM388 247h1v1h-1zM388 259h1v1h-1zM388 272h1v1h-1zM388 284h1v1h-1zM388 296h1v1h-1zM388 308h1v1h-1zM388 320h1v1h-1zM388 333h1v1h-1zM388 345h1v1h-1zM388 357h1v1h-1zM388 369h1v1h-1zM388 381h1v1h-1zM388 394h1v1h-1zM388 406h1v1h-1zM388 418h1v1h-1zM388 430h1v1h-1zM388 442h1v1h-1zM388 455h1v1h-1zM388 467h1v1h-1zM388 479h1v1h-1zM388 491h1v1h-1zM388 503h1v1h-1zM388 516h1v1h-1zM388 528h1v1h-1zM388 540h1v1h-1zM388 552h1v1h-1zM388 564h1v1h-1zM388 577h1v1h-1zM388 589h1v1h-1zM388 601h1v1h-1zM388 613h1v1h-1zM388 625h1v1h-1zM388 638h1v1h-1zM388 650h1v1h-1zM388 662h1v1h-1zM388 674h1v1h-1zM388 686h1v1h-1zM388 699h1v1h-1zM400 76h1v1h-1zM400 89h1v1h-1zM400 101h1v1h-1zM400 113h1v1h-1zM400 125h1v1h-1zM400 137h1v1h-1zM400 150h1v1h-1zM400 162h1v1h-1zM400 174h1v1h-1zM400 186h1v1h-1zM400 198h1v1h-1zM400 211h1v1h-1zM400 223h1v1h-1zM400 235h1v1h-1zM400 247h1v1h-1zM400 259h1v1h-1zM400 272h1v1h-1zM400 284h1v1h-1zM400 296h1v1h-1zM400 308h1v1h-1zM400 320h1v1h-1zM400 333h1v1h-1zM400 345h1v1h-1zM400 357h1v1h-1zM400 369h1v1h-1zM400 381h1v1h-1zM400 394h1v1h-1zM400 406h1v1h-1zM400 418h1v1h-1zM400 430h1v1h-1zM400 442h1v1h-1zM400 455h1v1h-1zM400 467h1v1h-1zM400 479h1v1h-1zM400 491h1v1h-1zM400 503h1v1h-1zM400 516h1v1h-1zM400 528h1v1h-1zM400 540h1v1h-1zM400 552h1v1h-1zM400 564h1v1h-1zM400 577h1v1h-1zM400 589h1v1h-1zM400 601h1v1h-1zM400 613h1v1h-1zM400 625h1v1h-1zM400 638h1v1h-1zM400 650h1v1h-1zM400 662h1v1h-1zM400 674h1v1h-1zM400 686h1v1h-1zM400 699h1v1h-1zM412 76h1v1h-1zM412 89h1v1h-1zM412 101h1v1h-1zM412 113h1v1h-1zM412 125h1v1h-1zM412 137h1v1h-1zM412 150h1v1h-1zM412 162h1v1h-1zM412 174h1v1h-1zM412 186h1v1h-1zM412 198h1v1h-1zM412 211h1v1h-1zM412 223h1v1h-1zM412 235h1v1h-1zM412 247h1v1h-1zM412 259h1v1h-1zM412 272h1v1h-1zM412 284h1v1h-1zM412 296h1v1h-1zM412 308h1v1h-1zM412 320h1v1h-1zM412 333h1v1h-1zM412 345h1v1h-1zM412 357h1v1h-1zM412 369h1v1h-1zM412 381h1v1h-1zM412 394h1v1h-1zM412 406h1v1h-1zM412 418h1v1h-1zM412 430h1v1h-1zM412 442h1v1h-1zM412 455h1v1h-1zM412 467h1v1h-1zM412 479h1v1h-1zM412 491h1v1h-1zM412 503h1v1h-1zM412 516h1v1h-1zM412 528h1v1h-1zM412 540h1v1h-1zM412 552h1v1h-1zM412 564h1v1h-1zM412 577h1v1h-1zM412 589h1v1h-1zM412 601h1v1h-1zM412 613h1v1h-1zM412 625h1v1h-1zM412 638h1v1h-1zM412 650h1v1h-1zM412 662h1v1h-1zM412 674h1v1h-1zM412 686h1v1h-1zM412 699h1v1h-1zM424 76h1v1h-1zM424 89h1v1h-1zM424 101h1v1h-1zM424 113h1v1h-1zM424 125h1v1h-1zM424 137h1v1h-1zM424 150h1v1h-1zM424 162h1v1h-1zM424 174h1v1h-1zM424 186h1v1h-1zM424 198h1v1h-1zM424 211h1v1h-1zM424 223h1v1h-1zM424 235h1v1h-1zM424 247h1v1h-1zM424 259h1v1h-1zM424 272h1v1h-1zM424 284h1v1h-1zM424 296h1v1h-1zM424 308h1v1h-1zM424 320h1v1h-1zM424 333h1v1h-1zM424 345h1v1h-1zM424 357h1v1h-1zM424 369h1v1h-1zM424 381h1v1h-1zM424 394h1v1h-1zM424 406h1v1h-1zM424 418h1v1h-1zM424 430h1v1h-1zM424 442h1v1h-1zM424 455h1v1h-1zM424 467h1v1h-1zM424 479h1v1h-1zM424 491h1v1h-1zM424 503h1v1h-1zM424 516h1v1h-1zM424 528h1v1h-1zM424 540h1v1h-1zM424 552h1v1h-1zM424 564h1v1h-1zM424 577h1v1h-1zM424 589h1v1h-1zM424 601h1v1h-1zM424 613h1v1h-1zM424 625h1v1h-1zM424 638h1v1h-1zM424 650h1v1h-1zM424 662h1v1h-1zM424 674h1v1h-1zM424 686h1v1h-1zM424 699h1v1h-1zM437 76h1v1h-1zM437 89h1v1h-1zM437 101h1v1h-1zM437 113h1v1h-1zM437 125h1v1h-1zM437 137h1v1h-1zM437 150h1v1h-1zM437 162h1v1h-1zM437 174h1v1h-1zM437 186h1v1h-1zM437 198h1v1h-1zM437 211h1v1h-1zM437 223h1v1h-1zM437 235h1v1h-1zM437 247h1v1h-1zM437 259h1v1h-1zM437 272h1v1h-1zM437 284h1v1h-1zM437 296h1v1h-1zM437 308h1v1h-1zM437 320h1v1h-1zM437 333h1v1h-1zM437 345h1v1h-1zM437 357h1v1h-1zM437 369h1v1h-1zM437 381h1v1h-1zM437 394h1v1h-1zM437 406h1v1h-1zM437 418h1v1h-1zM437 430h1v1h-1zM437 442h1v1h-1zM437 455h1v1h-1zM437 467h1v1h-1zM437 479h1v1h-1zM437 491h1v1h-1zM437 503h1v1h-1zM437 516h1v1h-1zM437 528h1v1h-1zM437 540h1v1h-1zM437 552h1v1h-1zM437 564h1v1h-1zM437 577h1v1h-1zM437 589h1v1h-1zM437 601h1v1h-1zM437 613h1v1h-1zM437 625h1v1h-1zM437 638h1v1h-1zM437 650h1v1h-1zM437 662h1v1h-1zM437 674h1v1h-1zM437 686h1v1h-1zM437 699h1v1h-1zM449 76h1v1h-1zM449 89h1v1h-1zM449 101h1v1h-1zM449 113h1v1h-1zM449 125h1v1h-1zM449 137h1v1h-1zM449 150h1v1h-1zM449 162h1v1h-1zM449 174h1v1h-1zM449 186h1v1h-1zM449 198h1v1h-1zM449 211h1v1h-1zM449 223h1v1h-1zM449 235h1v1h-1zM449 247h1v1h-1zM449 259h1v1h-1zM449 272h1v1h-1zM449 284h1v1h-1zM449 296h1v1h-1zM449 308h1v1h-1zM449 320h1v1h-1zM449 333h1v1h-1zM449 345h1v1h-1zM449 357h1v1h-1zM449 369h1v1h-1zM449 381h1v1h-1zM449 394h1v1h-1zM449 406h1v1h-1zM449 418h1v1h-1zM449 430h1v1h-1zM449 442h1v1h-1zM449 455h1v1h-1zM449 467h1v1h-1zM449 479h1v1h-1zM449 491h1v1h-1zM449 503h1v1h-1zM449 516h1v1h-1zM449 528h1v1h-1zM449 540h1v1h-1zM449 552h1v1h-1zM449 564h1v1h-1zM449 577h1v1h-1zM449 589h1v1h-1zM449 601h1v1h-1zM449 613h1v1h-1zM449 625h1v1h-1zM449 638h1v1h-1zM449 650h1v1h-1zM449 662h1v1h-1zM449 674h1v1h-1zM449 686h1v1h-1zM449 699h1v1h-1zM461 76h1v1h-1zM461 89h1v1h-1zM461 101h1v1h-1zM461 113h1v1h-1zM461 125h1v1h-1zM461 137h1v1h-1zM461 150h1v1h-1zM461 162h1v1h-1zM461 174h1v1h-1zM461 186h1v1h-1zM461 198h1v1h-1zM461 211h1v1h-1zM461 223h1v1h-1zM461 235h1v1h-1zM461 247h1v1h-1zM461 259h1v1h-1zM461 272h1v1h-1zM461 284h1v1h-1zM461 296h1v1h-1zM461 308h1v1h-1zM461 320h1v1h-1zM461 333h1v1h-1zM461 345h1v1h-1zM461 357h1v1h-1zM461 369h1v1h-1zM461 381h1v1h-1zM461 394h1v1h-1zM461 406h1v1h-1zM461 418h1v1h-1zM461 430h1v1h-1zM461 442h1v1h-1zM461 455h1v1h-1zM461 467h1v1h-1zM461 479h1v1h-1zM461 491h1v1h-1zM461 503h1v1h-1zM461 516h1v1h-1zM461 528h1v1h-1zM461 540h1v1h-1zM461 552h1v1h-1zM461 564h1v1h-1zM461 577h1v1h-1zM461 589h1v1h-1zM461 601h1v1h-1zM461 613h1v1h-1zM461 625h1v1h-1zM461 638h1v1h-1zM461 650h1v1h-1zM461 662h1v1h-1zM461 674h1v1h-1zM461 686h1v1h-1zM461 699h1v1h-1zM473 76h1v1h-1zM473 89h1v1h-1zM473 101h1v1h-1zM473 113h1v1h-1zM473 125h1v1h-1zM473 137h1v1h-1zM473 150h1v1h-1zM473 162h1v1h-1zM473 174h1v1h-1zM473 186h1v1h-1zM473 198h1v1h-1zM473 211h1v1h-1zM473 223h1v1h-1zM473 235h1v1h-1zM473 247h1v1h-1zM473 259h1v1h-1zM473 272h1v1h-1zM473 284h1v1h-1zM473 296h1v1h-1zM473 308h1v1h-1zM473 320h1v1h-1zM473 333h1v1h-1zM473 345h1v1h-1zM473 357h1v1h-1zM473 369h1v1h-1zM473 381h1v1h-1zM473 394h1v1h-1zM473 406h1v1h-1zM473 418h1v1h-1zM473 430h1v1h-1zM473 442h1v1h-1zM473 455h1v1h-1zM473 467h1v1h-1zM473 479h1v1h-1zM473 491h1v1h-1zM473 503h1v1h-1zM473 516h1v1h-1zM473 528h1v1h-1zM473 540h1v1h-1zM473 552h1v1h-1zM473 564h1v1h-1zM473 577h1v1h-1zM473 589h1v1h-1zM473 601h1v1h-1zM473 613h1v1h-1zM473 625h1v1h-1zM473 638h1v1h-1zM473 650h1v1h-1zM473 662h1v1h-1zM473 674h1v1h-1zM473 686h1v1h-1zM473 699h1v1h-1zM485 76h1v1h-1zM485 89h1v1h-1zM485 101h1v1h-1zM485 113h1v1h-1zM485 125h1v1h-1zM485 137h1v1h-1zM485 150h1v1h-1zM485 162h1v1h-1zM485 174h1v1h-1zM485 186h1v1h-1zM485 198h1v1h-1zM485 211h1v1h-1zM485 223h1v1h-1zM485 235h1v1h-1zM485 247h1v1h-1zM485 259h1v1h-1zM485 272h1v1h-1zM485 284h1v1h-1zM485 296h1v1h-1zM485 308h1v1h-1zM485 320h1v1h-1zM485 333h1v1h-1zM485 345h1v1h-1zM485 357h1v1h-1zM485 369h1v1h-1zM485 381h1v1h-1zM485 394h1v1h-1zM485 406h1v1h-1zM485 418h1v1h-1zM485 430h1v1h-1zM485 442h1v1h-1zM485 455h1v1h-1zM485 467h1v1h-1zM485 479h1v1h-1zM485 491h1v1h-1zM485 503h1v1h-1zM485 516h1v1h-1zM485 528h1v1h-1zM485 540h1v1h-1zM485 552h1v1h-1zM485 564h1v1h-1zM485 577h1v1h-1zM485 589h1v1h-1zM485 601h1v1h-1zM485 613h1v1h-1zM485 625h1v1h-1zM485 638h1v1h-1zM485 650h1v1h-1zM485 662h1v1h-1zM485 674h1v1h-1zM485 686h1v1h-1zM485 699h1v1h-1zM498 76h1v1h-1zM498 89h1v1h-1zM498 101h1v1h-1zM498 113h1v1h-1zM498 125h1v1h-1zM498 137h1v1h-1zM498 150h1v1h-1zM498 162h1v1h-1zM498 174h1v1h-1zM498 186h1v1h-1zM498 198h1v1h-1zM498 211h1v1h-1zM498 223h1v1h-1zM498 235h1v1h-1zM498 247h1v1h-1zM498 259h1v1h-1zM498 272h1v1h-1zM498 284h1v1h-1zM498 296h1v1h-1zM498 308h1v1h-1zM498 320h1v1h-1zM498 333h1v1h-1zM498 345h1v1h-1zM498 357h1v1h-1zM498 369h1v1h-1zM498 381h1v1h-1zM498 394h1v1h-1zM498 406h1v1h-1zM498 418h1v1h-1zM498 430h1v1h-1zM498 442h1v1h-1zM498 455h1v1h-1zM498 467h1v1h-1zM498 479h1v1h-1zM498 491h1v1h-1zM498 503h1v1h-1zM498 516h1v1h-1zM498 528h1v1h-1zM498 540h1v1h-1zM498 552h1v1h-1zM498 564h1v1h-1zM498 577h1v1h-1zM498 589h1v1h-1zM498 601h1v1h-1zM498 613h1v1h-1zM498 625h1v1h-1zM498 638h1v1h-1zM498 650h1v1h-1zM498 662h1v1h-1zM498 674h1v1h-1zM498 686h1v1h-1zM498 699h1v1h-1zM510 76h1v1h-1zM510 89h1v1h-1zM510 101h1v1h-1zM510 113h1v1h-1zM510 125h1v1h-1zM510 137h1v1h-1zM510 150h1v1h-1zM510 162h1v1h-1zM510 174h1v1h-1zM510 186h1v1h-1zM510 198h1v1h-1zM510 211h1v1h-1zM510 223h1v1h-1zM510 235h1v1h-1zM510 247h1v1h-1zM510 259h1v1h-1zM510 272h1v1h-1zM510 284h1v1h-1zM510 296h1v1h-1zM510 308h1v1h-1zM510 320h1v1h-1zM510 333h1v1h-1zM510 345h1v1h-1zM510 357h1v1h-1zM510 369h1v1h-1zM510 381h1v1h-1zM510 394h1v1h-1zM510 406h1v1h-1zM510 418h1v1h-1zM510 430h1v1h-1zM510 442h1v1h-1zM510 455h1v1h-1zM510 467h1v1h-1zM510 479h1v1h-1zM510 491h1v1h-1zM510 503h1v1h-1zM510 516h1v1h-1zM510 528h1v1h-1zM510 540h1v1h-1zM510 552h1v1h-1zM510 564h1v1h-1zM510 577h1v1h-1zM510 589h1v1h-1zM510 601h1v1h-1zM510 613h1v1h-1zM510 625h1v1h-1zM510 638h1v1h-1zM510 650h1v1h-1zM510 662h1v1h-1zM510 674h1v1h-1zM510 686h1v1h-1zM510 699h1v1h-1zM522 76h1v1h-1zM522 89h1v1h-1zM522 101h1v1h-1zM522 113h1v1h-1zM522 125h1v1h-1zM522 137h1v1h-1zM522 150h1v1h-1zM522 162h1v1h-1zM522 174h1v1h-1zM522 186h1v1h-1zM522 198h1v1h-1zM522 211h1v1h-1zM522 223h1v1h-1zM522 235h1v1h-1zM522 247h1v1h-1zM522 259h1v1h-1zM522 272h1v1h-1zM522 284h1v1h-1zM522 296h1v1h-1zM522 308h1v1h-1zM522 320h1v1h-1zM522 333h1v1h-1zM522 345h1v1h-1zM522 357h1v1h-1zM522 369h1v1h-1zM522 381h1v1h-1zM522 394h1v1h-1zM522 406h1v1h-1zM522 418h1v1h-1zM522 430h1v1h-1zM522 442h1v1h-1zM522 455h1v1h-1zM522 467h1v1h-1zM522 479h1v1h-1zM522 491h1v1h-1zM522 503h1v1h-1zM522 516h1v1h-1zM522 528h1v1h-1zM522 540h1v1h-1zM522 552h1v1h-1zM522 564h1v1h-1zM522 577h1v1h-1zM522 589h1v1h-1zM522 601h1v1h-1zM522 613h1v1h-1zM522 625h1v1h-1zM522 638h1v1h-1zM522 650h1v1h-1zM522 662h1v1h-1zM522 674h1v1h-1zM522 686h1v1h-1zM522 699h1v1h-1zM534 76h1v1h-1zM534 89h1v1h-1zM534 101h1v1h-1zM534 113h1v1h-1zM534 125h1v1h-1zM534 137h1v1h-1zM534 150h1v1h-1zM534 162h1v1h-1zM534 174h1v1h-1zM534 186h1v1h-1zM534 198h1v1h-1zM534 211h1v1h-1zM534 223h1v1h-1zM534 235h1v1h-1zM534 247h1v1h-1zM534 259h1v1h-1zM534 272h1v1h-1zM534 284h1v1h-1zM534 296h1v1h-1zM534 308h1v1h-1zM534 320h1v1h-1zM534 333h1v1h-1zM534 345h1v1h-1zM534 357h1v1h-1zM534 369h1v1h-1zM534 381h1v1h-1zM534 394h1v1h-1zM534 406h1v1h-1zM534 418h1v1h-1zM534 430h1v1h-1zM534 442h1v1h-1zM534 455h1v1h-1zM534 467h1v1h-1zM534 479h1v1h-1zM534 491h1v1h-1zM534 503h1v1h-1zM534 516h1v1h-1zM534 528h1v1h-1zM534 540h1v1h-1zM534 552h1v1h-1zM534 564h1v1h-1zM534 577h1v1h-1zM534 589h1v1h-1zM534 601h1v1h-1zM534 613h1v1h-1zM534 625h1v1h-1zM534 638h1v1h-1zM534 650h1v1h-1zM534 662h1v1h-1zM534 674h1v1h-1zM534 686h1v1h-1zM534 699h1v1h-1zM546 76h1v1h-1zM546 89h1v1h-1zM546 101h1v1h-1zM546 113h1v1h-1zM546 125h1v1h-1zM546 137h1v1h-1zM546 150h1v1h-1zM546 162h1v1h-1zM546 174h1v1h-1zM546 186h1v1h-1zM546 198h1v1h-1zM546 211h1v1h-1zM546 223h1v1h-1zM546 235h1v1h-1zM546 247h1v1h-1zM546 259h1v1h-1zM546 272h1v1h-1zM546 284h1v1h-1zM546 296h1v1h-1zM546 308h1v1h-1zM546 320h1v1h-1zM546 333h1v1h-1zM546 345h1v1h-1zM546 357h1v1h-1zM546 369h1v1h-1zM546 381h1v1h-1zM546 394h1v1h-1zM546 406h1v1h-1zM546 418h1v1h-1zM546 430h1v1h-1zM546 442h1v1h-1zM546 455h1v1h-1zM546 467h1v1h-1zM546 479h1v1h-1zM546 491h1v1h-1zM546 503h1v1h-1zM546 516h1v1h-1zM546 528h1v1h-1zM546 540h1v1h-1zM546 552h1v1h-1zM546 564h1v1h-1zM546 577h1v1h-1zM546 589h1v1h-1zM546 601h1v1h-1zM546 613h1v1h-1zM546 625h1v1h-1zM546 638h1v1h-1zM546 650h1v1h-1zM546 662h1v1h-1zM546 674h1v1h-1zM546 686h1v1h-1zM546 699h1v1h-1zM559 76h1v1h-1zM559 89h1v1h-1zM559 101h1v1h-1zM559 113h1v1h-1zM559 125h1v1h-1zM559 137h1v1h-1zM559 150h1v1h-1zM559 162h1v1h-1zM559 174h1v1h-1zM559 186h1v1h-1zM559 198h1v1h-1zM559 211h1v1h-1zM559 223h1v1h-1zM559 235h1v1h-1zM559 247h1v1h-1zM559 259h1v1h-1zM559 272h1v1h-1zM559 284h1v1h-1zM559 296h1v1h-1zM559 308h1v1h-1zM559 320h1v1h-1zM559 333h1v1h-1zM559 345h1v1h-1zM559 357h1v1h-1zM559 369h1v1h-1zM559 381h1v1h-1zM559 394h1v1h-1zM559 406h1v1h-1zM559 418h1v1h-1zM559 430h1v1h-1zM559 442h1v1h-1zM559 455h1v1h-1zM559 467h1v1h-1zM559 479h1v1h-1zM559 491h1v1h-1zM559 503h1v1h-1zM559 516h1v1h-1zM559 528h1v1h-1zM559 540h1v1h-1zM559 552h1v1h-1zM559 564h1v1h-1zM559 577h1v1h-1zM559 589h1v1h-1zM559 601h1v1h-1zM559 613h1v1h-1zM559 625h1v1h-1zM559 638h1v1h-1zM559 650h1v1h-1zM559 662h1v1h-1zM559 674h1v1h-1zM559 686h1v1h-1zM559 699h1v1h-1zM571 76h1v1h-1zM571 89h1v1h-1zM571 101h1v1h-1zM571 113h1v1h-1zM571 125h1v1h-1zM571 137h1v1h-1zM571 150h1v1h-1zM571 162h1v1h-1zM571 174h1v1h-1zM571 186h1v1h-1zM571 198h1v1h-1zM571 211h1v1h-1zM571 223h1v1h-1zM571 235h1v1h-1zM571 247h1v1h-1zM571 259h1v1h-1zM571 272h1v1h-1zM571 284h1v1h-1zM571 296h1v1h-1zM571 308h1v1h-1zM571 320h1v1h-1zM571 333h1v1h-1zM571 345h1v1h-1zM571 357h1v1h-1zM571 369h1v1h-1zM571 381h1v1h-1zM571 394h1v1h-1zM571 406h1v1h-1zM571 418h1v1h-1zM571 430h1v1h-1zM571 442h1v1h-1zM571 455h1v1h-1zM571 467h1v1h-1zM571 479h1v1h-1zM571 491h1v1h-1zM571 503h1v1h-1zM571 516h1v1h-1zM571 528h1v1h-1zM571 540h1v1h-1zM571 552h1v1h-1zM571 564h1v1h-1zM571 577h1v1h-1zM571 589h1v1h-1zM571 601h1v1h-1zM571 613h1v1h-1zM571 625h1v1h-1zM571 638h1v1h-1zM571 650h1v1h-1zM571 662h1v1h-1zM571 674h1v1h-1zM571 686h1v1h-1zM571 699h1v1h-1zM583 76h1v1h-1zM583 89h1v1h-1zM583 101h1v1h-1zM583 113h1v1h-1zM583 125h1v1h-1zM583 137h1v1h-1zM583 150h1v1h-1zM583 162h1v1h-1zM583 174h1v1h-1zM583 186h1v1h-1zM583 198h1v1h-1zM583 211h1v1h-1zM583 223h1v1h-1zM583 235h1v1h-1zM583 247h1v1h-1zM583 259h1v1h-1zM583 272h1v1h-1zM583 284h1v1h-1zM583 296h1v1h-1zM583 308h1v1h-1zM583 320h1v1h-1zM583 333h1v1h-1zM583 345h1v1h-1zM583 357h1v1h-1zM583 369h1v1h-1zM583 381h1v1h-1zM583 394h1v1h-1zM583 406h1v1h-1zM583 418h1v1h-1zM583 430h1v1h-1zM583 442h1v1h-1zM583 455h1v1h-1zM583 467h1v1h-1zM583 479h1v1h-1zM583 491h1v1h-1zM583 503h1v1h-1zM583 516h1v1h-1zM583 528h1v1h-1zM583 540h1v1h-1zM583 552h1v1h-1zM583 564h1v1h-1zM583 577h1v1h-1zM583 589h1v1h-1zM583 601h1v1h-1zM583 613h1v1h-1zM583 625h1v1h-1zM583 638h1v1h-1zM583 650h1v1h-1zM583 662h1v1h-1zM583 674h1v1h-1zM583 686h1v1h-1zM583 699h1v1h-1zM595 76h1v1h-1zM595 89h1v1h-1zM595 101h1v1h-1zM595 113h1v1h-1zM595 125h1v1h-1zM595 137h1v1h-1zM595 150h1v1h-1zM595 162h1v1h-1zM595 174h1v1h-1zM595 186h1v1h-1zM595 198h1v1h-1zM595 211h1v1h-1zM595 223h1v1h-1zM595 235h1v1h-1zM595 247h1v1h-1zM595 259h1v1h-1zM595 272h1v1h-1zM595 284h1v1h-1zM595 296h1v1h-1zM595 308h1v1h-1zM595 320h1v1h-1zM595 333h1v1h-1zM595 345h1v1h-1zM595 357h1v1h-1zM595 369h1v1h-1zM595 381h1v1h-1zM595 394h1v1h-1zM595 406h1v1h-1zM595 418h1v1h-1zM595 430h1v1h-1zM595 442h1v1h-1zM595 455h1v1h-1zM595 467h1v1h-1zM595 479h1v1h-1zM595 491h1v1h-1zM595 503h1v1h-1zM595 516h1v1h-1zM595 528h1v1h-1zM595 540h1v1h-1zM595 552h1v1h-1zM595 564h1v1h-1zM595 577h1v1h-1zM595 589h1v1h-1zM595 601h1v1h-1zM595 613h1v1h-1zM595 625h1v1h-1zM595 638h1v1h-1zM595 650h1v1h-1zM595 662h1v1h-1zM595 674h1v1h-1zM595 686h1v1h-1zM595 699h1v1h-1zM607 76h1v1h-1zM607 89h1v1h-1zM607 101h1v1h-1zM607 113h1v1h-1zM607 125h1v1h-1zM607 137h1v1h-1zM607 150h1v1h-1zM607 162h1v1h-1zM607 174h1v1h-1zM607 186h1v1h-1zM607 198h1v1h-1zM607 211h1v1h-1zM607 223h1v1h-1zM607 235h1v1h-1zM607 247h1v1h-1zM607 259h1v1h-1zM607 272h1v1h-1zM607 284h1v1h-1zM607 296h1v1h-1zM607 308h1v1h-1zM607 320h1v1h-1zM607 333h1v1h-1zM607 345h1v1h-1zM607 357h1v1h-1zM607 369h1v1h-1zM607 381h1v1h-1zM607 394h1v1h-1zM607 406h1v1h-1zM607 418h1v1h-1zM607 430h1v1h-1zM607 442h1v1h-1zM607 455h1v1h-1zM607 467h1v1h-1zM607 479h1v1h-1zM607 491h1v1h-1zM607 503h1v1h-1zM607 516h1v1h-1zM607 528h1v1h-1zM607 540h1v1h-1zM607 552h1v1h-1zM607 564h1v1h-1zM607 577h1v1h-1zM607 589h1v1h-1zM607 601h1v1h-1zM607 613h1v1h-1zM607 625h1v1h-1zM607 638h1v1h-1zM607 650h1v1h-1zM607 662h1v1h-1zM607 674h1v1h-1zM607 686h1v1h-1zM607 699h1v1h-1zM620 76h1v1h-1zM620 89h1v1h-1zM620 101h1v1h-1zM620 113h1v1h-1zM620 125h1v1h-1zM620 137h1v1h-1zM620 150h1v1h-1zM620 162h1v1h-1zM620 174h1v1h-1zM620 186h1v1h-1zM620 198h1v1h-1zM620 211h1v1h-1zM620 223h1v1h-1zM620 235h1v1h-1zM620 247h1v1h-1zM620 259h1v1h-1zM620 272h1v1h-1zM620 284h1v1h-1zM620 296h1v1h-1zM620 308h1v1h-1zM620 320h1v1h-1zM620 333h1v1h-1zM620 345h1v1h-1zM620 357h1v1h-1zM620 369h1v1h-1zM620 381h1v1h-1zM620 394h1v1h-1zM620 406h1v1h-1zM620 418h1v1h-1zM620 430h1v1h-1zM620 442h1v1h-1zM620 455h1v1h-1zM620 467h1v1h-1zM620 479h1v1h-1zM620 491h1v1h-1zM620 503h1v1h-1zM620 516h1v1h-1zM620 528h1v1h-1zM620 540h1v1h-1zM620 552h1v1h-1zM620 564h1v1h-1zM620 577h1v1h-1zM620 589h1v1h-1zM620 601h1v1h-1zM620 613h1v1h-1zM620 625h1v1h-1zM620 638h1v1h-1zM620 650h1v1h-1zM620 662h1v1h-1zM620 674h1v1h-1zM620 686h1v1h-1zM620 699h1v1h-1zM632 76h1v1h-1zM632 89h1v1h-1zM632 101h1v1h-1zM632 113h1v1h-1zM632 125h1v1h-1zM632 137h1v1h-1zM632 150h1v1h-1zM632 162h1v1h-1zM632 174h1v1h-1zM632 186h1v1h-1zM632 198h1v1h-1zM632 211h1v1h-1zM632 223h1v1h-1zM632 235h1v1h-1zM632 247h1v1h-1zM632 259h1v1h-1zM632 272h1v1h-1zM632 284h1v1h-1zM632 296h1v1h-1zM632 308h1v1h-1zM632 320h1v1h-1zM632 333h1v1h-1zM632 345h1v1h-1zM632 357h1v1h-1zM632 369h1v1h-1zM632 381h1v1h-1zM632 394h1v1h-1zM632 406h1v1h-1zM632 418h1v1h-1zM632 430h1v1h-1zM632 442h1v1h-1zM632 455h1v1h-1zM632 467h1v1h-1zM632 479h1v1h-1zM632 491h1v1h-1zM632 503h1v1h-1zM632 516h1v1h-1zM632 528h1v1h-1zM632 540h1v1h-1zM632 552h1v1h-1zM632 564h1v1h-1zM632 577h1v1h-1zM632 589h1v1h-1zM632 601h1v1h-1zM632 613h1v1h-1zM632 625h1v1h-1zM632 638h1v1h-1zM632 650h1v1h-1zM632 662h1v1h-1zM632 674h1v1h-1zM632 686h1v1h-1zM632 699h1v1h-1zM644 76h1v1h-1zM644 89h1v1h-1zM644 101h1v1h-1zM644 113h1v1h-1zM644 125h1v1h-1zM644 137h1v1h-1zM644 150h1v1h-1zM644 162h1v1h-1zM644 174h1v1h-1zM644 186h1v1h-1zM644 198h1v1h-1zM644 211h1v1h-1zM644 223h1v1h-1zM644 235h1v1h-1zM644 247h1v1h-1zM644 259h1v1h-1zM644 272h1v1h-1zM644 284h1v1h-1zM644 296h1v1h-1zM644 308h1v1h-1zM644 320h1v1h-1zM644 333h1v1h-1zM644 345h1v1h-1zM644 357h1v1h-1zM644 369h1v1h-1zM644 381h1v1h-1zM644 394h1v1h-1zM644 406h1v1h-1zM644 418h1v1h-1zM644 430h1v1h-1zM644 442h1v1h-1zM644 455h1v1h-1zM644 467h1v1h-1zM644 479h1v1h-1zM644 491h1v1h-1zM644 503h1v1h-1zM644 516h1v1h-1zM644 528h1v1h-1zM644 540h1v1h-1zM644 552h1v1h-1zM644 564h1v1h-1zM644 577h1v1h-1zM644 589h1v1h-1zM644 601h1v1h-1zM644 613h1v1h-1zM644 625h1v1h-1zM644 638h1v1h-1zM644 650h1v1h-1zM644 662h1v1h-1zM644 674h1v1h-1zM644 686h1v1h-1zM644 699h1v1h-1zM656 76h1v1h-1zM656 89h1v1h-1zM656 101h1v1h-1zM656 113h1v1h-1zM656 125h1v1h-1zM656 137h1v1h-1zM656 150h1v1h-1zM656 162h1v1h-1zM656 174h1v1h-1zM656 186h1v1h-1zM656 198h1v1h-1zM656 211h1v1h-1zM656 223h1v1h-1zM656 235h1v1h-1zM656 247h1v1h-1zM656 259h1v1h-1zM656 272h1v1h-1zM656 284h1v1h-1zM656 296h1v1h-1zM656 308h1v1h-1zM656 320h1v1h-1zM656 333h1v1h-1zM656 345h1v1h-1zM656 357h1v1h-1zM656 369h1v1h-1zM656 381h1v1h-1zM656 394h1v1h-1zM656 406h1v1h-1zM656 418h1v1h-1zM656 430h1v1h-1zM656 442h1v1h-1zM656 455h1v1h-1zM656 467h1v1h-1zM656 479h1v1h-1zM656 491h1v1h-1zM656 503h1v1h-1zM656 516h1v1h-1zM656 528h1v1h-1zM656 540h1v1h-1zM656 552h1v1h-1zM656 564h1v1h-1zM656 577h1v1h-1zM656 589h1v1h-1zM656 601h1v1h-1zM656 613h1v1h-1zM656 625h1v1h-1zM656 638h1v1h-1zM656 650h1v1h-1zM656 662h1v1h-1zM656 674h1v1h-1zM656 686h1v1h-1zM656 699h1v1h-1zM668 76h1v1h-1zM668 89h1v1h-1zM668 101h1v1h-1zM668 113h1v1h-1zM668 125h1v1h-1zM668 137h1v1h-1zM668 150h1v1h-1zM668 162h1v1h-1zM668 174h1v1h-1zM668 186h1v1h-1zM668 198h1v1h-1zM668 211h1v1h-1zM668 223h1v1h-1zM668 235h1v1h-1zM668 247h1v1h-1zM668 259h1v1h-1zM668 272h1v1h-1zM668 284h1v1h-1zM668 296h1v1h-1zM668 308h1v1h-1zM668 320h1v1h-1zM668 333h1v1h-1zM668 345h1v1h-1zM668 357h1v1h-1zM668 369h1v1h-1zM668 381h1v1h-1zM668 394h1v1h-1zM668 406h1v1h-1zM668 418h1v1h-1zM668 430h1v1h-1zM668 442h1v1h-1zM668 455h1v1h-1zM668 467h1v1h-1zM668 479h1v1h-1zM668 491h1v1h-1zM668 503h1v1h-1zM668 516h1v1h-1zM668 528h1v1h-1zM668 540h1v1h-1zM668 552h1v1h-1zM668 564h1v1h-1zM668 577h1v1h-1zM668 589h1v1h-1zM668 601h1v1h-1zM668 613h1v1h-1zM668 625h1v1h-1zM668 638h1v1h-1zM668 650h1v1h-1zM668 662h1v1h-1zM668 674h1v1h-1zM668 686h1v1h-1zM668 699h1v1h-1zM681 76h1v1h-1zM681 89h1v1h-1zM681 101h1v1h-1zM681 113h1v1h-1zM681 125h1v1h-1zM681 137h1v1h-1zM681 150h1v1h-1zM681 162h1v1h-1zM681 174h1v1h-1zM681 186h1v1h-1zM681 198h1v1h-1zM681 211h1v1h-1zM681 223h1v1h-1zM681 235h1v1h-1zM681 247h1v1h-1zM681 259h1v1h-1zM681 272h1v1h-1zM681 284h1v1h-1zM681 296h1v1h-1zM681 308h1v1h-1zM681 320h1v1h-1zM681 333h1v1h-1zM681 345h1v1h-1zM681 357h1v1h-1zM681 369h1v1h-1zM681 381h1v1h-1zM681 394h1v1h-1zM681 406h1v1h-1zM681 418h1v1h-1zM681 430h1v1h-1zM681 442h1v1h-1zM681 455h1v1h-1zM681 467h1v1h-1zM681 479h1v1h-1zM681 491h1v1h-1zM681 503h1v1h-1zM681 516h1v1h-1zM681 528h1v1h-1zM681 540h1v1h-1zM681 552h1v1h-1zM681 564h1v1h-1zM681 577h1v1h-1zM681 589h1v1h-1zM681 601h1v1h-1zM681 613h1v1h-1zM681 625h1v1h-1zM681 638h1v1h-1zM681 650h1v1h-1zM681 662h1v1h-1zM681 674h1v1h-1zM681 686h1v1h-1zM681 699h1v1h-1zM693 76h1v1h-1zM693 89h1v1h-1zM693 101h1v1h-1zM693 113h1v1h-1zM693 125h1v1h-1zM693 137h1v1h-1zM693 150h1v1h-1zM693 162h1v1h-1zM693 174h1v1h-1zM693 186h1v1h-1zM693 198h1v1h-1zM693 211h1v1h-1zM693 223h1v1h-1zM693 235h1v1h-1zM693 247h1v1h-1zM693 259h1v1h-1zM693 272h1v1h-1zM693 284h1v1h-1zM693 296h1v1h-1zM693 308h1v1h-1zM693 320h1v1h-1zM693 333h1v1h-1zM693 345h1v1h-1zM693 357h1v1h-1zM693 369h1v1h-1zM693 381h1v1h-1zM693 394h1v1h-1zM693 406h1v1h-1zM693 418h1v1h-1zM693 430h1v1h-1zM693 442h1v1h-1zM693 455h1v1h-1zM693 467h1v1h-1zM693 479h1v1h-1zM693 491h1v1h-1zM693 503h1v1h-1zM693 516h1v1h-1zM693 528h1v1h-1zM693 540h1v1h-1zM693 552h1v1h-1zM693 564h1v1h-1zM693 577h1v1h-1zM693 589h1v1h-1zM693 601h1v1h-1zM693 613h1v1h-1zM693 625h1v1h-1zM693 638h1v1h-1zM693 650h1v1h-1zM693 662h1v1h-1zM693 674h1v1h-1zM693 686h1v1h-1zM693 699h1v1h-1zM705 76h1v1h-1zM705 89h1v1h-1zM705 101h1v1h-1zM705 113h1v1h-1zM705 125h1v1h-1zM705 137h1v1h-1zM705 150h1v1h-1zM705 162h1v1h-1zM705 174h1v1h-1zM705 186h1v1h-1zM705 198h1v1h-1zM705 211h1v1h-1zM705 223h1v1h-1zM705 235h1v1h-1zM705 247h1v1h-1zM705 259h1v1h-1zM705 272h1v1h-1zM705 284h1v1h-1zM705 296h1v1h-1zM705 308h1v1h-1zM705 320h1v1h-1zM705 333h1v1h-1zM705 345h1v1h-1zM705 357h1v1h-1zM705 369h1v1h-1zM705 381h1v1h-1zM705 394h1v1h-1zM705 406h1v1h-1zM705 418h1v1h-1zM705 430h1v1h-1zM705 442h1v1h-1zM705 455h1v1h-1zM705 467h1v1h-1zM705 479h1v1h-1zM705 491h1v1h-1zM705 503h1v1h-1zM705 516h1v1h-1zM705 528h1v1h-1zM705 540h1v1h-1zM705 552h1v1h-1zM705 564h1v1h-1zM705 577h1v1h-1zM705 589h1v1h-1zM705 601h1v1h-1zM705 613h1v1h-1zM705 625h1v1h-1zM705 638h1v1h-1zM705 650h1v1h-1zM705 662h1v1h-1zM705 674h1v1h-1zM705 686h1v1h-1zM705 699h1v1h-1zM717 76h1v1h-1zM717 89h1v1h-1zM717 101h1v1h-1zM717 113h1v1h-1zM717 125h1v1h-1zM717 137h1v1h-1zM717 150h1v1h-1zM717 162h1v1h-1zM717 174h1v1h-1zM717 186h1v1h-1zM717 198h1v1h-1zM717 211h1v1h-1zM717 223h1v1h-1zM717 235h1v1h-1zM717 247h1v1h-1zM717 259h1v1h-1zM717 272h1v1h-1zM717 284h1v1h-1zM717 296h1v1h-1zM717 308h1v1h-1zM717 320h1v1h-1zM717 333h1v1h-1zM717 345h1v1h-1zM717 357h1v1h-1zM717 369h1v1h-1zM717 381h1v1h-1zM717 394h1v1h-1zM717 406h1v1h-1zM717 418h1v1h-1zM717 430h1v1h-1zM717 442h1v1h-1zM717 455h1v1h-1zM717 467h1v1h-1zM717 479h1v1h-1zM717 491h1v1h-1zM717 503h1v1h-1zM717 516h1v1h-1zM717 528h1v1h-1zM717 540h1v1h-1zM717 552h1v1h-1zM717 564h1v1h-1zM717 577h1v1h-1zM717 589h1v1h-1zM717 601h1v1h-1zM717 613h1v1h-1zM717 625h1v1h-1zM717 638h1v1h-1zM717 650h1v1h-1zM717 662h1v1h-1zM717 674h1v1h-1zM717 686h1v1h-1zM717 699h1v1h-1zM729 76h1v1h-1zM729 89h1v1h-1zM729 101h1v1h-1zM729 113h1v1h-1zM729 125h1v1h-1zM729 137h1v1h-1zM729 150h1v1h-1zM729 162h1v1h-1zM729 174h1v1h-1zM729 186h1v1h-1zM729 198h1v1h-1zM729 211h1v1h-1zM729 223h1v1h-1zM729 235h1v1h-1zM729 247h1v1h-1zM729 259h1v1h-1zM729 272h1v1h-1zM729 284h1v1h-1zM729 296h1v1h-1zM729 308h1v1h-1zM729 320h1v1h-1zM729 333h1v1h-1zM729 345h1v1h-1zM729 357h1v1h-1zM729 369h1v1h-1zM729 381h1v1h-1zM729 394h1v1h-1zM729 406h1v1h-1zM729 418h1v1h-1zM729 430h1v1h-1zM729 442h1v1h-1zM729 455h1v1h-1zM729 467h1v1h-1zM729 479h1v1h-1zM729 491h1v1h-1zM729 503h1v1h-1zM729 516h1v1h-1zM729 528h1v1h-1zM729 540h1v1h-1zM729 552h1v1h-1zM729 564h1v1h-1zM729 577h1v1h-1zM729 589h1v1h-1zM729 601h1v1h-1zM729 613h1v1h-1zM729 625h1v1h-1zM729 638h1v1h-1zM729 650h1v1h-1zM729 662h1v1h-1zM729 674h1v1h-1zM729 686h1v1h-1zM729 699h1v1h-1zM742 76h1v1h-1zM742 89h1v1h-1zM742 101h1v1h-1zM742 113h1v1h-1zM742 125h1v1h-1zM742 137h1v1h-1zM742 150h1v1h-1zM742 162h1v1h-1zM742 174h1v1h-1zM742 186h1v1h-1zM742 198h1v1h-1zM742 211h1v1h-1zM742 223h1v1h-1zM742 235h1v1h-1zM742 247h1v1h-1zM742 259h1v1h-1zM742 272h1v1h-1zM742 284h1v1h-1zM742 296h1v1h-1zM742 308h1v1h-1zM742 320h1v1h-1zM742 333h1v1h-1zM742 345h1v1h-1zM742 357h1v1h-1zM742 369h1v1h-1zM742 381h1v1h-1zM742 394h1v1h-1zM742 406h1v1h-1zM742 418h1v1h-1zM742 430h1v1h-1zM742 442h1v1h-1zM742 455h1v1h-1zM742 467h1v1h-1zM742 479h1v1h-1zM742 491h1v1h-1zM742 503h1v1h-1zM742 516h1v1h-1zM742 528h1v1h-1zM742 540h1v1h-1zM742 552h1v1h-1zM742 564h1v1h-1zM742 577h1v1h-1zM742 589h1v1h-1zM742 601h1v1h-1zM742 613h1v1h-1zM742 625h1v1h-1zM742 638h1v1h-1zM742 650h1v1h-1zM742 662h1v1h-1zM742 674h1v1h-1zM742 686h1v1h-1zM742 699h1v1h-1zM754 76h1v1h-1zM754 89h1v1h-1zM754 101h1v1h-1zM754 113h1v1h-1zM754 125h1v1h-1zM754 137h1v1h-1zM754 150h1v1h-1zM754 162h1v1h-1zM754 174h1v1h-1zM754 186h1v1h-1zM754 198h1v1h-1zM754 211h1v1h-1zM754 223h1v1h-1zM754 235h1v1h-1zM754 247h1v1h-1zM754 259h1v1h-1zM754 272h1v1h-1zM754 284h1v1h-1zM754 296h1v1h-1zM754 308h1v1h-1zM754 320h1v1h-1zM754 333h1v1h-1zM754 345h1v1h-1zM754 357h1v1h-1zM754 369h1v1h-1zM754 381h1v1h-1zM754 394h1v1h-1zM754 406h1v1h-1zM754 418h1v1h-1zM754 430h1v1h-1zM754 442h1v1h-1zM754 455h1v1h-1zM754 467h1v1h-1zM754 479h1v1h-1zM754 491h1v1h-1zM754 503h1v1h-1zM754 516h1v1h-1zM754 528h1v1h-1zM754 540h1v1h-1zM754 552h1v1h-1zM754 564h1v1h-1zM754 577h1v1h-1zM754 589h1v1h-1zM754 601h1v1h-1zM754 613h1v1h-1zM754 625h1v1h-1zM754 638h1v1h-1zM754 650h1v1h-1zM754 662h1v1h-1zM754 674h1v1h-1zM754 686h1v1h-1zM754 699h1v1h-1zM766 76h1v1h-1zM766 89h1v1h-1zM766 101h1v1h-1zM766 113h1v1h-1zM766 125h1v1h-1zM766 137h1v1h-1zM766 150h1v1h-1zM766 162h1v1h-1zM766 174h1v1h-1zM766 186h1v1h-1zM766 198h1v1h-1zM766 211h1v1h-1zM766 223h1v1h-1zM766 235h1v1h-1zM766 247h1v1h-1zM766 259h1v1h-1zM766 272h1v1h-1zM766 284h1v1h-1zM766 296h1v1h-1zM766 308h1v1h-1zM766 320h1v1h-1zM766 333h1v1h-1zM766 345h1v1h-1zM766 357h1v1h-1zM766 369h1v1h-1zM766 381h1v1h-1zM766 394h1v1h-1zM766 406h1v1h-1zM766 418h1v1h-1zM766 430h1v1h-1zM766 442h1v1h-1zM766 455h1v1h-1zM766 467h1v1h-1zM766 479h1v1h-1zM766 491h1v1h-1zM766 503h1v1h-1zM766 516h1v1h-1zM766 528h1v1h-1zM766 540h1v1h-1zM766 552h1v1h-1zM766 564h1v1h-1zM766 577h1v1h-1zM766 589h1v1h-1zM766 601h1v1h-1zM766 613h1v1h-1zM766 625h1v1h-1zM766 638h1v1h-1zM766 650h1v1h-1zM766 662h1v1h-1zM766 674h1v1h-1zM766 686h1v1h-1zM766 699h1v1h-1zM778 76h1v1h-1zM778 89h1v1h-1zM778 101h1v1h-1zM778 113h1v1h-1zM778 125h1v1h-1zM778 137h1v1h-1zM778 150h1v1h-1zM778 162h1v1h-1zM778 174h1v1h-1zM778 186h1v1h-1zM778 198h1v1h-1zM778 211h1v1h-1zM778 223h1v1h-1zM778 235h1v1h-1zM778 247h1v1h-1zM778 259h1v1h-1zM778 272h1v1h-1zM778 284h1v1h-1zM778 296h1v1h-1zM778 308h1v1h-1zM778 320h1v1h-1zM778 333h1v1h-1zM778 345h1v1h-1zM778 357h1v1h-1zM778 369h1v1h-1zM778 381h1v1h-1zM778 394h1v1h-1zM778 406h1v1h-1zM778 418h1v1h-1zM778 430h1v1h-1zM778 442h1v1h-1zM778 455h1v1h-1zM778 467h1v1h-1zM778 479h1v1h-1zM778 491h1v1h-1zM778 503h1v1h-1zM778 516h1v1h-1zM778 528h1v1h-1zM778 540h1v1h-1zM778 552h1v1h-1zM778 564h1v1h-1zM778 577h1v1h-1zM778 589h1v1h-1zM778 601h1v1h-1zM778 613h1v1h-1zM778 625h1v1h-1zM778 638h1v1h-1zM778 650h1v1h-1zM778 662h1v1h-1zM778 674h1v1h-1zM778 686h1v1h-1zM778 699h1v1h-1zM790 76h1v1h-1zM790 89h1v1h-1zM790 101h1v1h-1zM790 113h1v1h-1zM790 125h1v1h-1zM790 137h1v1h-1zM790 150h1v1h-1zM790 162h1v1h-1zM790 174h1v1h-1zM790 186h1v1h-1zM790 198h1v1h-1zM790 211h1v1h-1zM790 223h1v1h-1zM790 235h1v1h-1zM790 247h1v1h-1zM790 259h1v1h-1zM790 272h1v1h-1zM790 284h1v1h-1zM790 296h1v1h-1zM790 308h1v1h-1zM790 320h1v1h-1zM790 333h1v1h-1zM790 345h1v1h-1zM790 357h1v1h-1zM790 369h1v1h-1zM790 381h1v1h-1zM790 394h1v1h-1zM790 406h1v1h-1zM790 418h1v1h-1zM790 430h1v1h-1zM790 442h1v1h-1zM790 455h1v1h-1zM790 467h1v1h-1zM790 479h1v1h-1zM790 491h1v1h-1zM790 503h1v1h-1zM790 516h1v1h-1zM790 528h1v1h-1zM790 540h1v1h-1zM790 552h1v1h-1zM790 564h1v1h-1zM790 577h1v1h-1zM790 589h1v1h-1zM790 601h1v1h-1zM790 613h1v1h-1zM790 625h1v1h-1zM790 638h1v1h-1zM790 650h1v1h-1zM790 662h1v1h-1zM790 674h1v1h-1zM790 686h1v1h-1zM790 699h1v1h-1zM803 76h1v1h-1zM803 89h1v1h-1zM803 101h1v1h-1zM803 113h1v1h-1zM803 125h1v1h-1zM803 137h1v1h-1zM803 150h1v1h-1zM803 162h1v1h-1zM803 174h1v1h-1zM803 186h1v1h-1zM803 198h1v1h-1zM803 211h1v1h-1zM803 223h1v1h-1zM803 235h1v1h-1zM803 247h1v1h-1zM803 259h1v1h-1zM803 272h1v1h-1zM803 284h1v1h-1zM803 296h1v1h-1zM803 308h1v1h-1zM803 320h1v1h-1zM803 333h1v1h-1zM803 345h1v1h-1zM803 357h1v1h-1zM803 369h1v1h-1zM803 381h1v1h-1zM803 394h1v1h-1zM803 406h1v1h-1zM803 418h1v1h-1zM803 430h1v1h-1zM803 442h1v1h-1zM803 455h1v1h-1zM803 467h1v1h-1zM803 479h1v1h-1zM803 491h1v1h-1zM803 503h1v1h-1zM803 516h1v1h-1zM803 528h1v1h-1zM803 540h1v1h-1zM803 552h1v1h-1zM803 564h1v1h-1zM803 577h1v1h-1zM803 589h1v1h-1zM803 601h1v1h-1zM803 613h1v1h-1zM803 625h1v1h-1zM803 638h1v1h-1zM803 650h1v1h-1zM803 662h1v1h-1zM803 674h1v1h-1zM803 686h1v1h-1zM803 699h1v1h-1zM815 76h1v1h-1zM815 89h1v1h-1zM815 101h1v1h-1zM815 113h1v1h-1zM815 125h1v1h-1zM815 137h1v1h-1zM815 150h1v1h-1zM815 162h1v1h-1zM815 174h1v1h-1zM815 186h1v1h-1zM815 198h1v1h-1zM815 211h1v1h-1zM815 223h1v1h-1zM815 235h1v1h-1zM815 247h1v1h-1zM815 259h1v1h-1zM815 272h1v1h-1zM815 284h1v1h-1zM815 296h1v1h-1zM815 308h1v1h-1zM815 320h1v1h-1zM815 333h1v1h-1zM815 345h1v1h-1zM815 357h1v1h-1zM815 369h1v1h-1zM815 381h1v1h-1zM815 394h1v1h-1zM815 406h1v1h-1zM815 418h1v1h-1zM815 430h1v1h-1zM815 442h1v1h-1zM815 455h1v1h-1zM815 467h1v1h-1zM815 479h1v1h-1zM815 491h1v1h-1zM815 503h1v1h-1zM815 516h1v1h-1zM815 528h1v1h-1zM815 540h1v1h-1zM815 552h1v1h-1zM815 564h1v1h-1zM815 577h1v1h-1zM815 589h1v1h-1zM815 601h1v1h-1zM815 613h1v1h-1zM815 625h1v1h-1zM815 638h1v1h-1zM815 650h1v1h-1zM815 662h1v1h-1zM815 674h1v1h-1zM815 686h1v1h-1zM815 699h1v1h-1zM827 76h1v1h-1zM827 89h1v1h-1zM827 101h1v1h-1zM827 113h1v1h-1zM827 125h1v1h-1zM827 137h1v1h-1zM827 150h1v1h-1zM827 162h1v1h-1zM827 174h1v1h-1zM827 186h1v1h-1zM827 198h1v1h-1zM827 211h1v1h-1zM827 223h1v1h-1zM827 235h1v1h-1zM827 247h1v1h-1zM827 259h1v1h-1zM827 272h1v1h-1zM827 284h1v1h-1zM827 296h1v1h-1zM827 308h1v1h-1zM827 320h1v1h-1zM827 333h1v1h-1zM827 345h1v1h-1zM827 357h1v1h-1zM827 369h1v1h-1zM827 381h1v1h-1zM827 394h1v1h-1zM827 406h1v1h-1zM827 418h1v1h-1zM827 430h1v1h-1zM827 442h1v1h-1zM827 455h1v1h-1zM827 467h1v1h-1zM827 479h1v1h-1zM827 491h1v1h-1zM827 503h1v1h-1zM827 516h1v1h-1zM827 528h1v1h-1zM827 540h1v1h-1zM827 552h1v1h-1zM827 564h1v1h-1zM827 577h1v1h-1zM827 589h1v1h-1zM827 601h1v1h-1zM827 613h1v1h-1zM827 625h1v1h-1zM827 638h1v1h-1zM827 650h1v1h-1zM827 662h1v1h-1zM827 674h1v1h-1zM827 686h1v1h-1zM827 699h1v1h-1zM839 76h1v1h-1zM839 89h1v1h-1zM839 101h1v1h-1zM839 113h1v1h-1zM839 125h1v1h-1zM839 137h1v1h-1zM839 150h1v1h-1zM839 162h1v1h-1zM839 174h1v1h-1zM839 186h1v1h-1zM839 198h1v1h-1zM839 211h1v1h-1zM839 223h1v1h-1zM839 235h1v1h-1zM839 247h1v1h-1zM839 259h1v1h-1zM839 272h1v1h-1zM839 284h1v1h-1zM839 296h1v1h-1zM839 308h1v1h-1zM839 320h1v1h-1zM839 333h1v1h-1zM839 345h1v1h-1zM839 357h1v1h-1zM839 369h1v1h-1zM839 381h1v1h-1zM839 394h1v1h-1zM839 406h1v1h-1zM839 418h1v1h-1zM839 430h1v1h-1zM839 442h1v1h-1zM839 455h1v1h-1zM839 467h1v1h-1zM839 479h1v1h-1zM839 491h1v1h-1zM839 503h1v1h-1zM839 516h1v1h-1zM839 528h1v1h-1zM839 540h1v1h-1zM839 552h1v1h-1zM839 564h1v1h-1zM839 577h1v1h-1zM839 589h1v1h-1zM839 601h1v1h-1zM839 613h1v1h-1zM839 625h1v1h-1zM839 638h1v1h-1zM839 650h1v1h-1zM839 662h1v1h-1zM839 674h1v1h-1zM839 686h1v1h-1zM839 699h1v1h-1zM851 76h1v1h-1zM851 89h1v1h-1zM851 101h1v1h-1zM851 113h1v1h-1zM851 125h1v1h-1zM851 137h1v1h-1zM851 150h1v1h-1zM851 162h1v1h-1zM851 174h1v1h-1zM851 186h1v1h-1zM851 198h1v1h-1zM851 211h1v1h-1zM851 223h1v1h-1zM851 235h1v1h-1zM851 247h1v1h-1zM851 259h1v1h-1zM851 272h1v1h-1zM851 284h1v1h-1zM851 296h1v1h-1zM851 308h1v1h-1zM851 320h1v1h-1zM851 333h1v1h-1zM851 345h1v1h-1zM851 357h1v1h-1zM851 369h1v1h-1zM851 381h1v1h-1zM851 394h1v1h-1zM851 406h1v1h-1zM851 418h1v1h-1zM851 430h1v1h-1zM851 442h1v1h-1zM851 455h1v1h-1zM851 467h1v1h-1zM851 479h1v1h-1zM851 491h1v1h-1zM851 503h1v1h-1zM851 516h1v1h-1zM851 528h1v1h-1zM851 540h1v1h-1zM851 552h1v1h-1zM851 564h1v1h-1zM851 577h1v1h-1zM851 589h1v1h-1zM851 601h1v1h-1zM851 613h1v1h-1zM851 625h1v1h-1zM851 638h1v1h-1zM851 650h1v1h-1zM851 662h1v1h-1zM851 674h1v1h-1zM851 686h1v1h-1zM851 699h1v1h-1z" fill="#dadada"/></svg>
<div class="a" style="left:333.5px;top:51px;width:532.5px;height:19px;background:#d3d3d3"></div>
<div class="a" style="left:333.5px;top:51px;width:60.5px;height:19px;background:#fff"></div>
<svg class="a" style="left:340px;top:56px" width="10" height="10" viewBox="0 0 10 10"><rect x="0.7" y="0.7" width="8.6" height="8.6" rx="1.6" stroke="#9a9a9a" stroke-width="1.3" fill="#dcdcdc"/><path d="M2.8 2.9H6.8M2.8 4.6H6.8M2.8 6.3H5" stroke="#a8a8a8" stroke-width="1"/><rect x="6" y="6.2" width="2" height="2" fill="#fff"/></svg>
<div class="a" style="left:357.5px;top:53.8px;font-weight:bold;font-size:9.6px;color:#3d3d3d;line-height:12px">Policy</div>
<div class="a" style="left:847.7px;top:51px;width:18.3px;height:19px;background:#e4e4e4"></div>
<svg class="a" style="left:849.5px;top:53.5px" width="14" height="14" viewBox="0 0 12 12"><path d="M1.6 6.3C0.6 4.6 1.6 1.6 5.2 1.4C8.6 1.3 10.6 3.8 10.4 6.8C10.2 9.6 8.2 11 6.8 10.9C5.8 10.8 5.6 9.8 5.4 8.7C5.1 7.4 4.6 6.9 3.5 7C2.6 7.1 2 7 1.6 6.3Z" stroke="#3a3a3a" stroke-width="0.9" fill="none"/><circle cx="3.2" cy="4.3" r=".6" fill="#3a3a3a"/><circle cx="5.3" cy="3.1" r=".6" fill="#3a3a3a"/><circle cx="7.4" cy="3.6" r=".6" fill="#3a3a3a"/><circle cx="8.6" cy="5.5" r=".6" fill="#3a3a3a"/><circle cx="7.9" cy="7.9" r=".6" fill="#3a3a3a"/></svg>
<div class="a" style="left:861px;top:70px;width:4.7px;height:441.5px;background:#8a8a8a;border-radius:2.4px"></div>
<svg class="a" style="left:357px;top:75px" width="102" height="32" viewBox="0 0 102 32"><path d="M1.5 27.5V2A1.5 1.5 0 0 1 3 0.5H23.5A1.5 1.5 0 0 1 25 2V4.5H97A0.5 0.5 0 0 1 97.5 5V27.5Z" fill="#fff" stroke="#5a5a5a" stroke-width="1.2" style="filter:drop-shadow(1px 2px 1.5px rgba(0,0,0,.25))"/></svg>
<svg class="a" style="left:365.5px;top:83px" width="12" height="12" viewBox="0 0 12 12"><rect x="0.7" y="0.7" width="10.6" height="10.6" rx="1.8" stroke="#3c4bbf" stroke-width="1.3" fill="#eef0fb"/><path d="M3 3.8H9M3 6H9M3 8.2H6.5" stroke="#3c4bbf" stroke-width="1.1"/></svg>
<div class="a" style="left:387.5px;top:84.5px;font-size:9.75px;color:#333;line-height:12px">Policy</div>
<svg class="a" style="left:338.5px;top:85.5px" width="13" height="12" viewBox="0 0 13 12"><path d="M1.2 10.8L5.2 6.8M1.8 6.8H5.2V10.2" stroke="#444" stroke-width="0.95" fill="none"/><path d="M11.8 1.2L7.8 5.2M7.8 1.8V5.2H11.2" stroke="#444" stroke-width="0.95" fill="none"/></svg>
<div class="nd" style="left:382.1px;top:115.2px;width:97.59999999999997px;height:20.2px;"><svg width="12" height="12" viewBox="0 0 12 12" style=""><circle cx="4" cy="3.5" r="2.2" stroke="#333" stroke-width="0.85" fill="none"/><path d="M0.5 10A3.5 3.5 0 0 1 7.5 10M7.5 1.5A2 2 0 0 1 7.5 5.5M8.8 7A3 3 0 0 1 11 10" stroke="#333" stroke-width="0.85" fill="none"/></svg><span class="t" style="left:21px;">Choose_Roles</span></div>
<div class="nd" style="left:382.1px;top:148.3px;width:97.59999999999997px;height:20.2px;"><svg width="12" height="12" viewBox="0 0 12 12" style=""><path d="M0.5 1.5H4L5 2.5H9.5V4.5M0.5 1.5V9.5H9L11 4.5H2.5L0.5 9.5" stroke="#333" stroke-width="0.85" fill="none"/></svg><span class="t" style="left:21px;">Verra_header</span></div>
<svg class="a" style="left:368.1px;top:153.8px" width="7" height="10" viewBox="0 0 7 10"><path d="M0.7 0.7L6 5L0.7 9.3Z" stroke="#444" stroke-width="1" fill="none"/></svg>
<div class="nd" style="left:382.1px;top:181.3px;width:146.39999999999998px;height:20.2px;"><svg width="12" height="12" viewBox="0 0 12 12" style=""><path d="M0.5 1.5H4L5 2.5H9.5V4.5M0.5 1.5V9.5H9L11 4.5H2.5L0.5 9.5" stroke="#333" stroke-width="0.85" fill="none"/></svg><span class="t" style="left:21px;">Project_Proponent_header</span></div>
<svg class="a" style="left:366.1px;top:188.3px" width="10" height="7" viewBox="0 0 10 7"><path d="M0.7 0.7H9.3L5 6.2Z" stroke="#444" stroke-width="1" fill="none"/></svg>
<div class="nd" style="left:406.6px;top:214.3px;width:97.39999999999998px;height:20.2px;"><svg width="12" height="12" viewBox="0 0 12 12" style=""><path d="M0.5 1.5H4L5 2.5H9.5V4.5M0.5 1.5V9.5H9L11 4.5H2.5L0.5 9.5" stroke="#333" stroke-width="0.85" fill="none"/></svg><span class="t" style="left:21px;">Projects_pp</span></div>
<svg class="a" style="left:390.6px;top:221.3px" width="10" height="7" viewBox="0 0 10 7"><path d="M0.7 0.7H9.3L5 6.2Z" stroke="#444" stroke-width="1" fill="none"/></svg>
<div class="nd" style="left:431px;top:247.3px;width:108.5px;height:20.2px;"><svg width="12" height="12" viewBox="0 0 12 12" style=""><rect x="0.5" y="0.5" width="10" height="10" rx="1.2" stroke="#333" stroke-width="0.85" fill="none"/><path d="M0.5 5.5H10.5M5.5 0.5V10.5" stroke="#333" stroke-width="0.85" fill="none"/></svg><span class="t" style="left:21px;">project_grid_pp_2</span></div>
<svg class="a" style="left:415px;top:254.3px" width="10" height="7" viewBox="0 0 10 7"><path d="M0.7 0.7H9.3L5 6.2Z" stroke="#444" stroke-width="1" fill="none"/></svg>
<div class="nd o" style="left:455.3px;top:280px;width:218.2px;height:20.2px;border:2px solid #5a62d8;"><svg width="12" height="12" viewBox="0 0 12 12" style="top:3.5px;left:4.5px"><ellipse cx="5.5" cy="2.3" rx="4.3" ry="1.8" stroke="#333" stroke-width="0.85" fill="none"/><path d="M1.2 2.3V9C1.2 10 3.1 10.8 5.5 10.8S9.8 10 9.8 9V2.3M1.2 4.6C1.2 5.6 3.1 6.4 5.5 6.4S9.8 5.6 9.8 4.6M1.2 6.8C1.2 7.8 3.1 8.6 5.5 8.6S9.8 7.8 9.8 6.8" stroke="#333" stroke-width="0.85" fill="none"/></svg><span class="t" style="left:20.5px;top:-1px;">project_grid_pp_2_waiting_to_add_proje...</span></div>
<div class="nd o" style="left:455.3px;top:313px;width:218.2px;height:20.2px;"><svg width="12" height="12" viewBox="0 0 12 12" style=""><ellipse cx="5.5" cy="2.3" rx="4.3" ry="1.8" stroke="#333" stroke-width="0.85" fill="none"/><path d="M1.2 2.3V9C1.2 10 3.1 10.8 5.5 10.8S9.8 10 9.8 9V2.3M1.2 4.6C1.2 5.6 3.1 6.4 5.5 6.4S9.8 5.6 9.8 4.6M1.2 6.8C1.2 7.8 3.1 8.6 5.5 8.6S9.8 7.8 9.8 6.8" stroke="#333" stroke-width="0.85" fill="none"/></svg><span class="t" style="left:21px;">project_grid_pp_2_waiting_to_validate_p...</span></div>
<div class="nd o" style="left:455.3px;top:346px;width:192.7px;height:20.2px;"><svg width="12" height="12" viewBox="0 0 12 12" style=""><ellipse cx="5.5" cy="2.3" rx="4.3" ry="1.8" stroke="#333" stroke-width="0.85" fill="none"/><path d="M1.2 2.3V9C1.2 10 3.1 10.8 5.5 10.8S9.8 10 9.8 9V2.3M1.2 4.6C1.2 5.6 3.1 6.4 5.5 6.4S9.8 5.6 9.8 4.6M1.2 6.8C1.2 7.8 3.1 8.6 5.5 8.6S9.8 7.8 9.8 6.8" stroke="#333" stroke-width="0.85" fill="none"/></svg><span class="t" style="left:21px;">project_grid_pp_2_validated_projects</span></div>
<div class="nd o" style="left:455.3px;top:379px;width:215.7px;height:20.2px;"><svg width="12" height="12" viewBox="0 0 12 12" style=""><ellipse cx="5.5" cy="2.3" rx="4.3" ry="1.8" stroke="#333" stroke-width="0.85" fill="none"/><path d="M1.2 2.3V9C1.2 10 3.1 10.8 5.5 10.8S9.8 10 9.8 9V2.3M1.2 4.6C1.2 5.6 3.1 6.4 5.5 6.4S9.8 5.6 9.8 4.6M1.2 6.8C1.2 7.8 3.1 8.6 5.5 8.6S9.8 7.8 9.8 6.8" stroke="#333" stroke-width="0.85" fill="none"/></svg><span class="t" style="left:21px;">project_grid_pp_2_validated_projects_own</span></div>
<div class="nd o" style="left:455.3px;top:412px;width:211.7px;height:20.2px;"><svg width="12" height="12" viewBox="0 0 12 12" style=""><ellipse cx="5.5" cy="2.3" rx="4.3" ry="1.8" stroke="#333" stroke-width="0.85" fill="none"/><path d="M1.2 2.3V9C1.2 10 3.1 10.8 5.5 10.8S9.8 10 9.8 9V2.3M1.2 4.6C1.2 5.6 3.1 6.4 5.5 6.4S9.8 5.6 9.8 4.6M1.2 6.8C1.2 7.8 3.1 8.6 5.5 8.6S9.8 7.8 9.8 6.8" stroke="#333" stroke-width="0.85" fill="none"/></svg><span class="t" style="left:21px;">project_grid_pp_2_rejected_projects_own</span></div>
<div class="nd o" style="left:455.3px;top:445px;width:218.2px;height:20.2px;"><svg width="12" height="12" viewBox="0 0 12 12" style=""><path d="M1.5 2.5V5H4M1.3 5A4.5 4.5 0 1 0 2.5 2.5M5.5 3V6L7.5 7.2" stroke="#333" stroke-width="0.85" fill="none"/></svg><span class="t" style="left:21px;">history_addon_4f31ccda-2486-4cc8-8c7...</span></div>
<div class="nd o" style="left:455.3px;top:478px;width:99.69999999999999px;height:20.2px;"><svg width="12" height="12" viewBox="0 0 12 12" style=""><path d="M0.5 0.5H10.5L6.8 5.2V10.5L4.2 9V5.2Z" stroke="#333" stroke-width="0.85" fill="none"/></svg><span class="t" style="left:21px;">filter_by_project</span></div>
<svg class="a" style="left:441.3px;top:483.5px" width="7" height="10" viewBox="0 0 7 10"><path d="M0.7 0.7L6 5L0.7 9.3Z" stroke="#444" stroke-width="1" fill="none"/></svg>
<div class="nd o" style="left:455.3px;top:511px;width:110.69999999999999px;height:20.2px;"><svg width="12" height="12" viewBox="0 0 12 12" style=""><path d="M0.5 0V10.5H11M2.5 9.5V5M4.5 9.5V3M6.5 9.5V6M8.5 9.5V4" stroke="#333" stroke-width="0.85" fill="none"/></svg><span class="t" style="left:21px;">project-description</span></div>
<div class="nd" style="left:431px;top:542.9px;width:151px;height:20.2px;"><svg width="12" height="12" viewBox="0 0 12 12" style=""><path d="M6 0.5L2 6.2H5.2L4.5 10.5L8.5 4.8H5.3Z" stroke="#333" stroke-width="0.85" fill="none"/></svg><span class="t" style="left:21px;">pd_transformation_requests</span></div>
<svg class="a" style="left:417px;top:548.4px" width="7" height="10" viewBox="0 0 7 10"><path d="M0.7 0.7L6 5L0.7 9.3Z" stroke="#444" stroke-width="1" fill="none"/></svg>
<div class="nd" style="left:431px;top:575.9px;width:97.5px;height:20.2px;"><svg width="12" height="12" viewBox="0 0 12 12" style=""><path d="M3 10.5V0.8M0.8 3L3 0.8L5.2 3M8.5 0.5V10.2M6.3 8L8.5 10.2L10.7 8" stroke="#333" stroke-width="1" fill="none"/></svg><span class="t" style="left:21px;">new_project</span></div>
<svg class="a" style="left:417px;top:581.4px" width="7" height="10" viewBox="0 0 7 10"><path d="M0.7 0.7L6 5L0.7 9.3Z" stroke="#444" stroke-width="1" fill="none"/></svg>
<div class="nd" style="left:431px;top:608.9px;width:97.5px;height:20.2px;"><svg width="12" height="12" viewBox="0 0 12 12" style=""><path d="M3 10.5V0.8M0.8 3L3 0.8L5.2 3M8.5 0.5V10.2M6.3 8L8.5 10.2L10.7 8" stroke="#333" stroke-width="1" fill="none"/></svg><span class="t" style="left:21px;">update_project</span></div>
<svg class="a" style="left:417px;top:614.4px" width="7" height="10" viewBox="0 0 7 10"><path d="M0.7 0.7L6 5L0.7 9.3Z" stroke="#444" stroke-width="1" fill="none"/></svg>
<div class="nd" style="left:431px;top:641.9px;width:97.5px;height:20.2px;"><svg width="12" height="12" viewBox="0 0 12 12" style=""><path d="M3 10.5V0.8M0.8 3L3 0.8L5.2 3M8.5 0.5V10.2M6.3 8L8.5 10.2L10.7 8" stroke="#333" stroke-width="1" fill="none"/></svg><span class="t" style="left:21px;">new_report</span></div>
<svg class="a" style="left:417px;top:647.4px" width="7" height="10" viewBox="0 0 7 10"><path d="M0.7 0.7L6 5L0.7 9.3Z" stroke="#444" stroke-width="1" fill="none"/></svg>
<div class="nd" style="left:431px;top:674.9px;width:97.5px;height:20.2px;"><svg width="12" height="12" viewBox="0 0 12 12" style=""><path d="M6 0.5L2 6.2H5.2L4.5 10.5L8.5 4.8H5.3Z" stroke="#333" stroke-width="0.85" fill="none"/></svg><span class="t" style="left:21px;">assign_vvb</span></div>
<svg class="a" style="left:417px;top:680.4px" width="7" height="10" viewBox="0 0 7 10"><path d="M0.7 0.7L6 5L0.7 9.3Z" stroke="#444" stroke-width="1" fill="none"/></svg>
<div class="a" style="left:435px;top:707px;width:90px;height:6px;border:1.5px solid #8fd0e0;border-bottom:none;background:#dff3f8;border-radius:3px 3px 0 0"></div>
<div class="a" style="left:681.4px;top:278.7px;width:65.5px;height:22.4px;background:#fff;border-radius:3px;box-shadow:0 1px 3px rgba(0,0,0,.25)"></div>
<div class="a" style="left:683px;top:280px;width:19px;height:19px;border:1px solid #e2e2e2;border-radius:3px;background:#fff"></div>
<div class="a" style="left:704.2px;top:280px;width:19px;height:19px;border:1px solid #e2e2e2;border-radius:3px;background:#fff"></div>
<div class="a" style="left:725.4px;top:280px;width:19px;height:19px;border:1px solid #e2e2e2;border-radius:3px;background:#fff"></div>
<svg class="a" style="left:687.3px;top:285.3px" width="10" height="8" viewBox="0 0 10 8"><circle cx="1.5" cy="4" r="0.9" fill="#3c45b5"/><circle cx="5" cy="4" r="0.9" fill="#3c45b5"/><circle cx="8.5" cy="4" r="0.9" fill="#3c45b5"/></svg>
<svg class="a" style="left:708.6px;top:283.8px" width="11" height="11" viewBox="0 0 11 11"><circle cx="4.7" cy="4.7" r="3.8" stroke="#3c45b5" stroke-width="1.1" fill="none"/><path d="M7.4 7.4L10 10" stroke="#3c45b5" stroke-width="1.1"/></svg>
<svg class="a" style="left:729.8px;top:283.5px" width="10" height="12" viewBox="0 0 10 12"><path d="M0.3 3H9.7M3 3V1.2H7V3M1.3 3L1.8 10.6H8.2L8.7 3M4 5V8.5M6 5V8.5" stroke="#e8433a" stroke-width="1.1" fill="none"/></svg>
<svg class="a" style="left:540px;top:245px" width="260" height="470" viewBox="0 0 260 470"><path d="M13 8.5H249.7" stroke="#a8a8a8" stroke-width="0.8" stroke-dasharray="2 1" fill="none"/><path d="M249.7 9V470" stroke="#bdbdbd" stroke-width="0.9" stroke-dasharray="5 2" fill="none"/><path d="M245.2 12V470" stroke="#b0b0b0" stroke-width="0.9" stroke-dasharray="5 2" fill="none"/><path d="M8.5 8.5L13.5 6.3V10.7Z" fill="#a0a0a0"/><path d="M0 443.5H11.5V470" stroke="#444" stroke-width="0.9" fill="none"/></svg>
<div class="a" style="left:867.8px;top:50.9px;width:340px;height:202.5px;background:#e6e6e6"></div>
<div class="a" style="left:867.8px;top:50.9px;width:340px;height:18.699999999999996px;background:#e8e8e8"></div>
<div class="a" style="left:867.80px;top:50.9px;width:53.50px;height:18.699999999999996px;background:transparent;border-right:1px solid #d9d9d9;font-weight:bold;font-size:9.8px;color:#444;text-align:center;line-height:18.699999999999996px;white-space:nowrap">Descri...</div>
<div class="a" style="left:921.30px;top:50.9px;width:53.20px;height:18.699999999999996px;background:transparent;border-right:1px solid #d9d9d9;font-weight:bold;font-size:9.8px;color:#444;text-align:center;line-height:18.699999999999996px;white-space:nowrap">Roles</div>
<div class="a" style="left:974.50px;top:50.9px;width:54.00px;height:18.699999999999996px;background:transparent;border-right:1px solid #d9d9d9;font-weight:bold;font-size:9.8px;color:#444;text-align:center;line-height:18.699999999999996px;white-space:nowrap">Naviga...</div>
<div class="a" style="left:1028.50px;top:50.9px;width:53.80px;height:18.699999999999996px;background:transparent;border-right:1px solid #d9d9d9;font-weight:bold;font-size:9.8px;color:#444;text-align:center;line-height:18.699999999999996px;white-space:nowrap">Groups</div>
<div class="a" style="left:1082.30px;top:50.9px;width:53.20px;height:18.699999999999996px;background:#fff;border-right:1px solid #d9d9d9;font-weight:bold;font-size:9.8px;color:#444;text-align:center;line-height:18.699999999999996px;white-space:nowrap">Topics</div>
<div class="a" style="left:1135.50px;top:50.9px;width:53.20px;height:18.699999999999996px;background:transparent;border-right:1px solid #d9d9d9;font-weight:bold;font-size:9.8px;color:#444;text-align:center;line-height:18.699999999999996px;white-space:nowrap">Tokens</div>
<svg class="a" style="left:1191.7px;top:53.9px" width="14" height="13" viewBox="0 0 14 13"><path d="M1.5 12L6 7.5M2 7.5H6V11.5" stroke="#333" stroke-width="1.1" fill="none"/><path d="M12.5 1L8 5.5M8 1.5V5.5H12" stroke="#333" stroke-width="1.1" fill="none"/></svg>
<div class="a" style="left:867.8px;top:69.6px;width:340px;height:2.5px;background:#fff"></div>
<div class="a" style="left:867.8px;top:72.1px;width:340px;height:181.3px;background:#e3e3e3;border-top:1px solid #cdcdcd"></div>
<div class="a" style="left:1203px;top:72.1px;width:4.8px;height:181.3px;background:#f8f8f8"></div>
<div class="a" style="left:1203px;top:73px;width:4.8px;height:163px;background:#b8b8b8;border-radius:2px"></div>
<svg class="a" style="left:871px;top:80.5px" width="8" height="6" viewBox="0 0 8 6"><path d="M0.6 0.6H7.4L4 5.2Z" stroke="#555" stroke-width="0.9" fill="none"/></svg>
<div class="a" style="left:887.4px;top:78px;font-weight:bold;font-size:9.4px;color:#444;line-height:12px">Topic</div>
<div class="a" style="left:978.5px;top:78px;font-size:9.6px;color:#777;line-height:12px">Project</div>
<svg class="a" style="left:1186.5px;top:77.5px" width="10" height="12" viewBox="0 0 10 12"><path d="M0.5 2.5H9.5M3.3 2.5V1H6.7V2.5M1.5 2.5V11H8.5V2.5M3.7 4.8V8.8M6.3 4.8V8.8" stroke="#e0403a" stroke-width="1.1" fill="none"/></svg>
<div class="a" style="left:882.9px;top:96.00px;width:94.2px;height:23.10px;background:#f5f5f5"></div>
<div class="a" style="left:894.9px;top:101.15px;font-size:9.75px;color:#1a1a1a;line-height:12px;white-space:nowrap">Name</div>
<div class="a" style="left:978.00px;top:96.00px;width:222.80px;height:23.10px;background:#fff;border:1px solid #d0d0d0;border-top-color:#c4c4c4;border-radius:2px;font-size:9.6px;color:#555;line-height:21.10px;padding-left:4.5px;white-space:nowrap"><span style="position:relative;top:0.6px">Project</span></div>
<div class="a" style="left:882.9px;top:121.00px;width:94.2px;height:23.10px;background:#fff"></div>
<div class="a" style="left:894.9px;top:126.15px;font-size:9.75px;color:#1a1a1a;line-height:12px;white-space:nowrap">Description</div>
<div class="a" style="left:978.00px;top:121.00px;width:222.80px;height:23.10px;background:#fff;border:1px solid #d0d0d0;border-top-color:#c4c4c4;border-radius:2px;font-size:9.6px;color:#555;line-height:21.10px;padding-left:4.5px;white-space:nowrap"><span style="position:relative;top:0.6px"></span></div>
<div class="a" style="left:882.9px;top:146.00px;width:94.2px;height:23.20px;background:#f5f5f5"></div>
<div class="a" style="left:894.9px;top:151.20px;font-size:9.75px;color:#1a1a1a;line-height:12px;white-space:nowrap">Type</div>
<div class="a" style="left:978.00px;top:146.00px;width:222.80px;height:23.20px;background:#fff;border:1px solid #d0d0d0;border-top-color:#c4c4c4;border-radius:2px;font-size:9.6px;color:#555;line-height:21.20px;padding-left:4.5px;white-space:nowrap"><span style="position:relative;top:0.6px">Any</span><svg class="a" style="right:7px;top:7.3px" width="9" height="6" viewBox="0 0 9 6"><path d="M0.6 0.8L4.5 4.7L8.4 0.8" stroke="#555" stroke-width="1" fill="none"/></svg></div>
<div class="a" style="left:882.9px;top:171.10px;width:94.2px;height:23.10px;background:#fff"></div>
<div class="a" style="left:894.9px;top:176.25px;font-size:9.75px;color:#1a1a1a;line-height:12px;white-space:nowrap">Static</div>
<div class="a" style="left:978.00px;top:171.10px;width:224.30px;height:23.10px;background:#fff"></div>
<div class="a" style="left:986.00px;top:177.35px;width:10.5px;height:10.5px;background:#2c6ce6;border-radius:2px"><svg class="a" style="left:1px;top:1.5px" width="8" height="7" viewBox="0 0 8 7"><path d="M0.8 3.5L3 5.7L7.2 1" stroke="#fff" stroke-width="1.4" fill="none"/></svg></div>
<div class="a" style="left:882.9px;top:196.10px;width:94.2px;height:23.20px;background:#f5f5f5"></div>
<div class="a" style="left:894.9px;top:201.30px;font-size:9.75px;color:#1a1a1a;line-height:12px;white-space:nowrap">Memo Paramete...</div>
<div class="a" style="left:978.00px;top:196.10px;width:222.80px;height:23.20px;background:#fff;border:1px solid #d0d0d0;border-top-color:#c4c4c4;border-radius:2px;font-size:9.6px;color:#555;line-height:21.20px;padding-left:4.5px;white-space:nowrap"><span style="position:relative;top:0.6px">Topic Config</span><svg class="a" style="right:7px;top:7.3px" width="9" height="6" viewBox="0 0 9 6"><path d="M0.6 0.8L4.5 4.7L8.4 0.8" stroke="#555" stroke-width="1" fill="none"/></svg></div>
<div class="a" style="left:882.9px;top:220.70px;width:94.2px;height:23.10px;background:#fff"></div>
<div class="a" style="left:894.9px;top:225.85px;font-size:9.75px;color:#1a1a1a;line-height:12px;white-space:nowrap">Memo</div>
<div class="a" style="left:978.00px;top:220.70px;width:222.80px;height:23.10px;background:#fff;border:1px solid #d0d0d0;border-top-color:#c4c4c4;border-radius:2px;font-size:9.6px;color:#555;line-height:21.10px;padding-left:4.5px;white-space:nowrap"><span style="position:relative;top:0.6px"></span></div>
<div class="a" style="left:882.9px;top:246.2px;width:320px;height:7.2px;background:#fff"></div>
<div class="a" style="left:867.8px;top:257.8px;width:340px;height:450.9px;background:#e3e3e3"></div>
<div class="a" style="left:867.8px;top:257.8px;width:340px;height:19.19999999999999px;background:#e8e8e8"></div>
<div class="a" style="left:867.80px;top:257.8px;width:80.60px;height:19.19999999999999px;background:#fff;border-right:1px solid #d9d9d9;font-weight:bold;font-size:9.8px;color:#444;text-align:center;line-height:19.19999999999999px;white-space:nowrap">Properties</div>
<div class="a" style="left:948.40px;top:257.8px;width:80.10px;height:19.19999999999999px;background:transparent;border-right:1px solid #d9d9d9;font-weight:bold;font-size:9.8px;color:#444;text-align:center;line-height:19.19999999999999px;white-space:nowrap">Events</div>
<div class="a" style="left:1028.50px;top:257.8px;width:80.10px;height:19.19999999999999px;background:transparent;border-right:1px solid #d9d9d9;font-weight:bold;font-size:9.8px;color:#444;text-align:center;line-height:19.19999999999999px;white-space:nowrap">Artifacts</div>
<div class="a" style="left:1108.60px;top:257.8px;width:80.10px;height:19.19999999999999px;background:transparent;border-right:1px solid #d9d9d9;font-weight:bold;font-size:9.8px;color:#444;text-align:center;line-height:19.19999999999999px;white-space:nowrap">Json</div>
<svg class="a" style="left:1191.6999999999998px;top:260.8px" width="14" height="13" viewBox="0 0 14 13"><path d="M1.5 12L6 7.5M2 7.5H6V11.5" stroke="#333" stroke-width="1.1" fill="none"/><path d="M12.5 1L8 5.5M8 1.5V5.5H12" stroke="#333" stroke-width="1.1" fill="none"/></svg>
<div class="a" style="left:867.8px;top:277px;width:340px;height:2.2px;background:#fff"></div>
<div class="a" style="left:867.8px;top:279.2px;width:340px;height:1px;background:#cfcfcf"></div>
<div class="a" style="left:1203px;top:280.2px;width:4.8px;height:428.5px;background:#ececec"></div>
<div class="a" style="left:1203px;top:281px;width:4.8px;height:333px;background:#b8b8b8;border-radius:2px"></div>
<svg class="a" style="left:872px;top:286px" width="6" height="9" viewBox="0 0 6 9"><path d="M0.6 0.6L5.2 4.5L0.6 8.4Z" stroke="#555" stroke-width="0.9" fill="none"/></svg>
<div class="a" style="left:886.4px;top:285px;font-weight:bold;font-size:9.7px;color:#444;line-height:12px">About</div>
<div class="a" style="left:867.8px;top:300.5px;width:335px;height:1px;background:#d6d6d6"></div>
<svg class="a" style="left:871px;top:309.5px" width="8" height="6" viewBox="0 0 8 6"><path d="M0.6 0.6H7.4L4 5.2Z" stroke="#555" stroke-width="0.9" fill="none"/></svg>
<div class="a" style="left:886.4px;top:306.5px;font-weight:bold;font-size:9.7px;color:#444;line-height:12px">Meta Data</div>
<div class="a" style="left:882.7px;top:325.10px;width:94.2px;height:23.20px;background:#fff"></div>
<div class="a" style="left:889.2px;top:329.20px;font-size:9.75px;color:#1a1a1a;line-height:12px;white-space:nowrap">Tag</div>
<div class="a" style="left:977.80px;top:325.10px;width:223.00px;height:23.20px;background:#fff;border:1px solid #d0d0d0;border-top-color:#c4c4c4;border-radius:2px;font-size:9.6px;color:#555;line-height:21.20px;padding-left:4.5px;white-space:nowrap"><span style="position:relative;top:0.6px">project_grid_pp_2_waiting_to_add_projects</span></div>
<div class="a" style="left:882.7px;top:349.70px;width:94.2px;height:24.00px;background:#f5f5f5"></div>
<div class="a" style="left:889.2px;top:354.20px;font-size:9.75px;color:#1a1a1a;line-height:12px;white-space:nowrap">Permissions</div>
<div class="a" style="left:977.80px;top:349.70px;width:223.00px;height:24.00px;background:#fff;border:1px solid #d0d0d0;border-top-color:#c4c4c4;border-radius:2px;font-size:9.6px;color:#555;line-height:22.00px;padding-left:4.5px;white-space:nowrap"><span style="position:relative;top:0.6px"><span style="color:#222">Project_Proponent</span></span><svg class="a" style="right:7px;top:7.3px" width="9" height="6" viewBox="0 0 9 6"><path d="M0.6 0.8L4.5 4.7L8.4 0.8" stroke="#555" stroke-width="1" fill="none"/></svg></div>
<div class="a" style="left:882.7px;top:373.7px;width:318px;height:25px;background:#fff"></div>
<div class="a" style="left:886.4px;top:378px;width:310.2px;height:17.8px;border:1px solid #6f78d8;border-radius:2px;background:#fff;font-size:7.3px;color:#3a3f9e;text-align:center;line-height:16px">Apply permissions to children</div>
<div class="a" style="left:882.7px;top:400.00px;width:94.2px;height:23.80px;background:#f5f5f5"></div>
<div class="a" style="left:889.2px;top:404.40px;font-size:9.75px;color:#1a1a1a;line-height:12px;white-space:nowrap">Default Active</div>
<div class="a" style="left:977.80px;top:400.00px;width:224.50px;height:23.80px;background:#f5f5f5"></div>
<div class="a" style="left:985.80px;top:406.60px;width:10.5px;height:10.5px;background:#fff;border:1px solid #8a8a8a;border-radius:2px"></div>
<div class="a" style="left:882.7px;top:425.20px;width:94.2px;height:23.50px;background:#fff"></div>
<div class="a" style="left:889.2px;top:429.45px;font-size:9.75px;color:#1a1a1a;line-height:12px;white-space:nowrap">Stop Propagation</div>
<div class="a" style="left:977.80px;top:425.20px;width:224.50px;height:23.50px;background:#fff"></div>
<div class="a" style="left:985.80px;top:431.65px;width:10.5px;height:10.5px;background:#fff;border:1px solid #8a8a8a;border-radius:2px"></div>
<div class="a" style="left:882.7px;top:450.00px;width:94.2px;height:24.00px;background:#f5f5f5"></div>
<div class="a" style="left:889.2px;top:454.50px;font-size:9.75px;color:#1a1a1a;line-height:12px;white-space:nowrap">On errors</div>
<div class="a" style="left:977.80px;top:450.00px;width:223.00px;height:24.00px;background:#fff;border:1px solid #d0d0d0;border-top-color:#c4c4c4;border-radius:2px;font-size:9.6px;color:#555;line-height:22.00px;padding-left:4.5px;white-space:nowrap"><span style="position:relative;top:0.6px">No action</span><svg class="a" style="right:7px;top:7.3px" width="9" height="6" viewBox="0 0 9 6"><path d="M0.6 0.8L4.5 4.7L8.4 0.8" stroke="#555" stroke-width="1" fill="none"/></svg></div>
<div class="a" style="left:882.7px;top:476.10px;width:94.2px;height:23.90px;background:#fff"></div>
<div class="a" style="left:889.2px;top:480.55px;font-size:9.75px;color:#1a1a1a;line-height:12px;white-space:nowrap">Data Type</div>
<div class="a" style="left:977.80px;top:476.10px;width:223.00px;height:23.90px;background:#fff;border:1px solid #d0d0d0;border-top-color:#c4c4c4;border-radius:2px;font-size:9.6px;color:#555;line-height:21.90px;padding-left:4.5px;white-space:nowrap"><span style="position:relative;top:0.6px">Collection (VC)</span><svg class="a" style="right:7px;top:7.3px" width="9" height="6" viewBox="0 0 9 6"><path d="M0.6 0.8L4.5 4.7L8.4 0.8" stroke="#555" stroke-width="1" fill="none"/></svg></div>
<div class="a" style="left:882.7px;top:501.70px;width:94.2px;height:22.90px;background:#f5f5f5"></div>
<div class="a" style="left:889.2px;top:505.65px;font-size:9.75px;color:#1a1a1a;line-height:12px;white-space:nowrap">Schema</div>
<div class="a" style="left:977.80px;top:501.70px;width:223.00px;height:22.90px;background:#fff;border:1px solid #d0d0d0;border-top-color:#c4c4c4;border-radius:2px;font-size:9.6px;color:#555;line-height:20.90px;padding-left:4.5px;white-space:nowrap"><span style="position:relative;top:0.6px">Project Description (Auto) (1.0.0) (Publishe...</span><svg class="a" style="right:7px;top:7.3px" width="9" height="6" viewBox="0 0 9 6"><path d="M0.6 0.8L4.5 4.7L8.4 0.8" stroke="#555" stroke-width="1" fill="none"/></svg></div>
<div class="a" style="left:882.7px;top:525.50px;width:94.2px;height:24.60px;background:#fff"></div>
<div class="a" style="left:889.2px;top:530.30px;font-size:9.75px;color:#1a1a1a;line-height:12px;white-space:nowrap">Owned by User</div>
<div class="a" style="left:977.80px;top:525.50px;width:224.50px;height:24.60px;background:#fff"></div>
<div class="a" style="left:985.80px;top:532.50px;width:10.5px;height:10.5px;background:#2c6ce6;border-radius:2px"><svg class="a" style="left:1px;top:1.5px" width="8" height="7" viewBox="0 0 8 7"><path d="M0.8 3.5L3 5.7L7.2 1" stroke="#fff" stroke-width="1.4" fill="none"/></svg></div>
<div class="a" style="left:882.7px;top:550.80px;width:94.2px;height:24.20px;background:#f5f5f5"></div>
<div class="a" style="left:889.2px;top:555.40px;font-size:9.75px;color:#1a1a1a;line-height:12px;white-space:nowrap">Owned by Group</div>
<div class="a" style="left:977.80px;top:550.80px;width:224.50px;height:24.20px;background:#f5f5f5"></div>
<div class="a" style="left:985.80px;top:557.60px;width:10.5px;height:10.5px;background:#fff;border:1px solid #8a8a8a;border-radius:2px"></div>
<div class="a" style="left:882.7px;top:575.70px;width:94.2px;height:23.90px;background:#fff"></div>
<div class="a" style="left:889.2px;top:580.15px;font-size:9.75px;color:#1a1a1a;line-height:12px;white-space:nowrap">Assigned to User</div>
<div class="a" style="left:977.80px;top:575.70px;width:224.50px;height:23.90px;background:#fff"></div>
<div class="a" style="left:985.80px;top:582.35px;width:10.5px;height:10.5px;background:#fff;border:1px solid #8a8a8a;border-radius:2px"></div>
<div class="a" style="left:882.7px;top:600.40px;width:94.2px;height:24.00px;background:#f5f5f5"></div>
<div class="a" style="left:889.2px;top:604.90px;font-size:9.75px;color:#1a1a1a;line-height:12px;white-space:nowrap">Assigned to Group</div>
<div class="a" style="left:977.80px;top:600.40px;width:224.50px;height:24.00px;background:#f5f5f5"></div>
<div class="a" style="left:985.80px;top:607.10px;width:10.5px;height:10.5px;background:#fff;border:1px solid #8a8a8a;border-radius:2px"></div>
<div class="a" style="left:882.7px;top:625.10px;width:94.2px;height:31.70px;background:#fff"></div>
<div class="a" style="left:889.2px;top:629.60px;font-size:9.75px;color:#1a1a1a;line-height:11px;white-space:nowrap">Hide previous<br>versions</div>
<div class="a" style="left:977.80px;top:625.10px;width:224.50px;height:31.70px;background:#fff"></div>
<div class="a" style="left:985.80px;top:635.65px;width:10.5px;height:10.5px;background:#2c6ce6;border-radius:2px"><svg class="a" style="left:1px;top:1.5px" width="8" height="7" viewBox="0 0 8 7"><path d="M0.8 3.5L3 5.7L7.2 1" stroke="#fff" stroke-width="1.4" fill="none"/></svg></div>
<div class="a" style="left:882.7px;top:656.80px;width:94.2px;height:24.60px;background:#f5f5f5"></div>
<div class="a" style="left:889.2px;top:661.60px;font-size:9.75px;color:#1a1a1a;line-height:12px;white-space:nowrap">Order Field</div>
<div class="a" style="left:977.80px;top:656.80px;width:223.00px;height:24.60px;background:#fff;border:1px solid #d0d0d0;border-top-color:#c4c4c4;border-radius:2px;font-size:9.6px;color:#555;line-height:22.60px;padding-left:4.5px;white-space:nowrap"><span style="position:relative;top:0.6px"></span></div>
<div class="a" style="left:882.7px;top:682.10px;width:94.2px;height:23.20px;background:#fff"></div>
<div class="a" style="left:889.2px;top:686.20px;font-size:9.75px;color:#1a1a1a;line-height:12px;white-space:nowrap">Order Direction</div>
<div class="a" style="left:977.80px;top:682.10px;width:223.00px;height:23.20px;background:#fff;border:1px solid #d0d0d0;border-top-color:#c4c4c4;border-radius:2px;font-size:9.6px;color:#555;line-height:21.20px;padding-left:4.5px;white-space:nowrap"><span style="position:relative;top:0.6px"><span style="color:#888">Select order direction</span></span><svg class="a" style="right:7px;top:7.3px" width="9" height="6" viewBox="0 0 9 6"><path d="M0.6 0.8L4.5 4.7L8.4 0.8" stroke="#555" stroke-width="1" fill="none"/></svg></div>
<div class="a" style="left:869px;top:620px;width:337px;height:42px;border:1.8px solid #d93636"></div>
<div class="a" style="left:158.5px;top:38.5px;width:20px;height:20px;border-radius:50%;background:#fff;box-shadow:0 0 2px rgba(0,0,0,.15)"></div>
<svg class="a" style="left:166.3px;top:44.6px" width="6" height="9" viewBox="0 0 6 9"><path d="M4.6 0.6L1 4.2L4.6 7.8" stroke="#3f51c6" stroke-width="1.1" fill="none"/></svg>
</body></html>
